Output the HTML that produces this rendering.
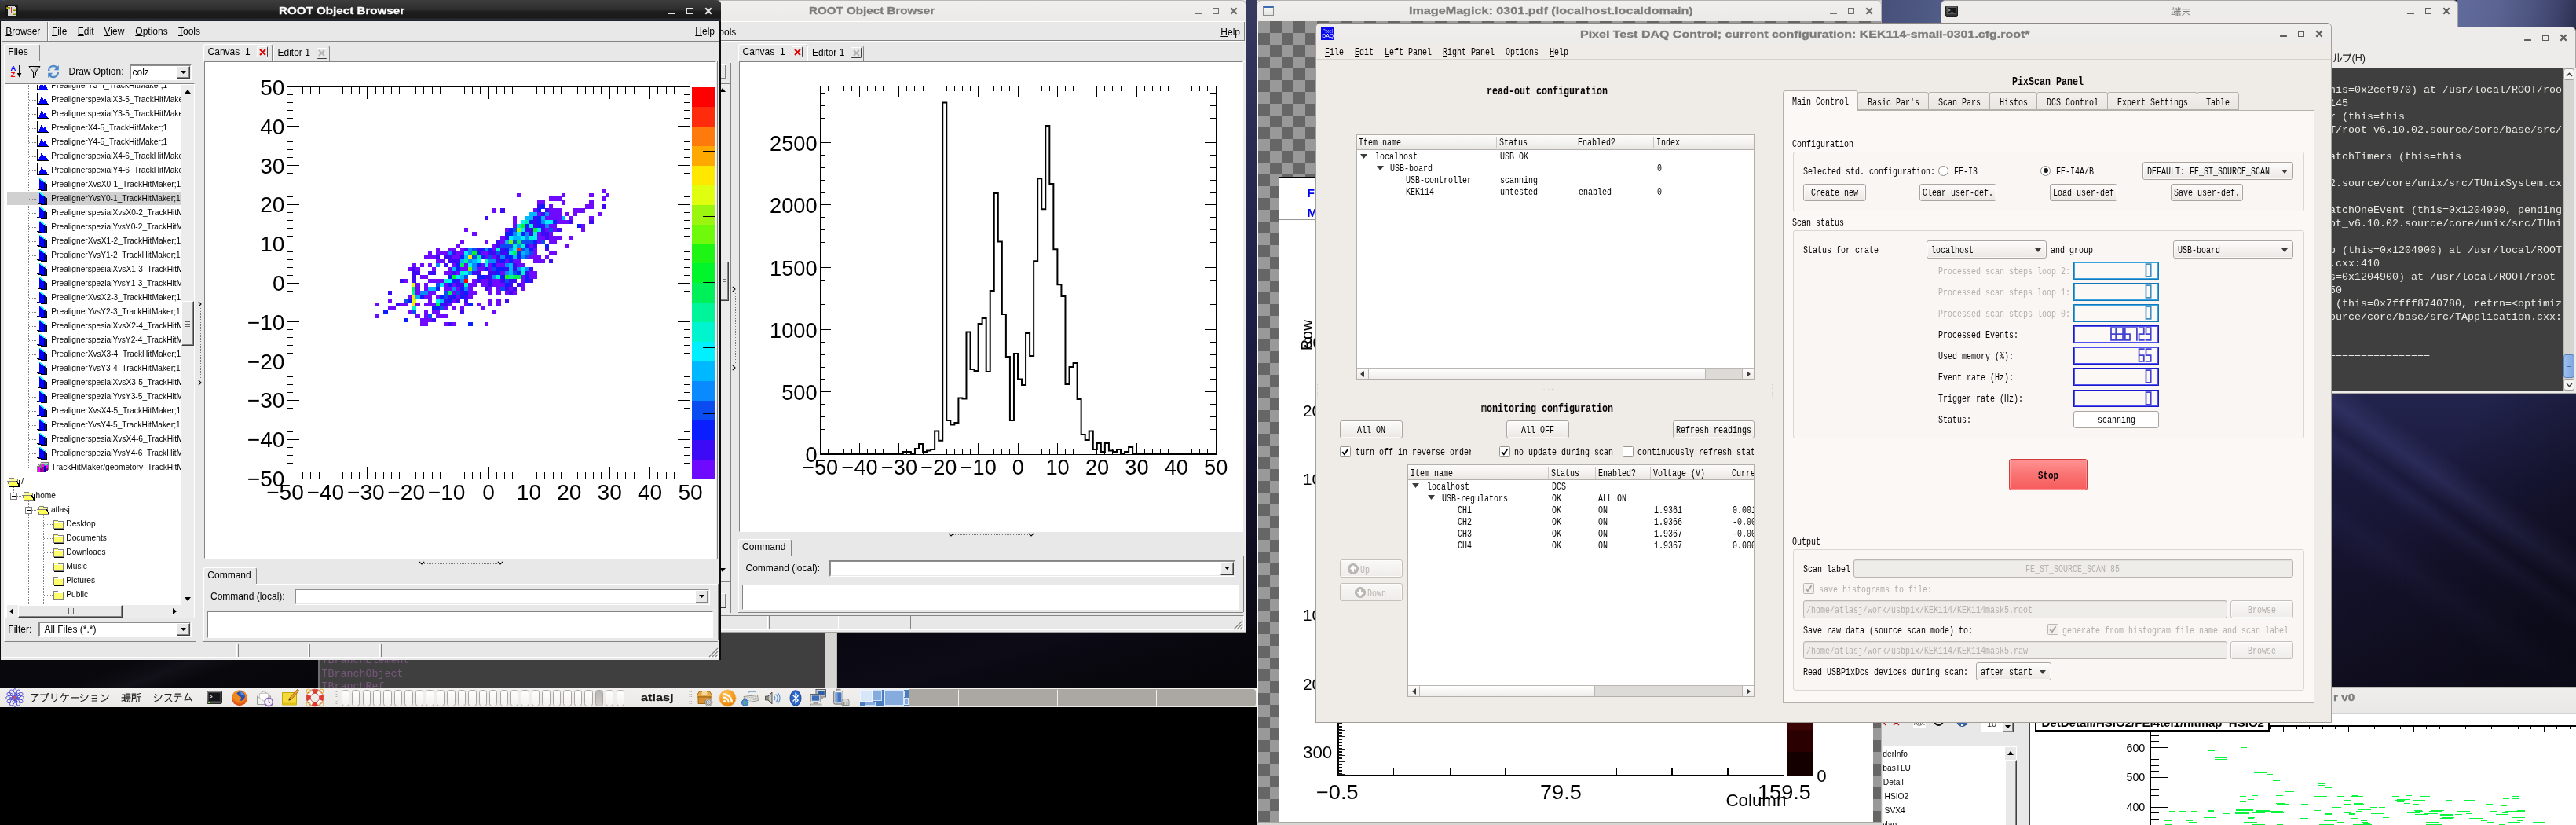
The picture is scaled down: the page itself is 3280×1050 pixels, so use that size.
<!DOCTYPE html>
<html><head><meta charset="utf-8"><title>desktop</title><style>
html,body{margin:0;padding:0;background:#000;}
#root{will-change:transform;position:relative;width:3280px;height:1050px;overflow:hidden;background:#000;font-family:"Liberation Sans",sans-serif;font-size:12px;color:#000;}
#root div,#root span,#root svg{position:absolute;box-sizing:border-box;}
.ts{font-family:"Liberation Sans",sans-serif;white-space:pre;}
.tm{font-family:"Liberation Mono",monospace;white-space:pre;transform-origin:0 0;}
.tr{font-family:"Liberation Serif",serif;white-space:pre;}
.clip{overflow:hidden;}
</style></head><body><div id="root">
<!-- sec_bg -->
<div style="left:0px;top:0px;width:1600px;height:900px;background:linear-gradient(180deg,#383b60 0,#2b2d55 150px,#1d1e46 400px,#13122c 600px,#0a0914 800px,#060509 900px);"></div>
<div style="left:0px;top:838px;width:410px;height:40px;background:linear-gradient(160deg,#09080d 0,#09080d 35%,#121018 50%,#09080c 62%,#07060a 100%);"></div>
<div style="left:1066px;top:800px;width:534px;height:80px;background:linear-gradient(165deg,#0a0912 0,#0c0b16 40%,#08070d 70%,#07060b 100%);"></div>
<div style="left:405px;top:800px;width:645px;height:76px;background:#3f3f3f;border-left:2px solid #6e6e6e;"></div>
<span class="tm" style="left:409.5px;top:834.28px;font-size:13.33px;line-height:13.33px;color:#77567c;">TBranchElement</span>
<span class="tm" style="left:409.5px;top:850.78px;font-size:13.33px;line-height:13.33px;color:#77567c;">TBranchObject</span>
<span class="tm" style="left:409.5px;top:867.28px;font-size:13.33px;line-height:13.33px;color:#77567c;">TBranchRef</span>
<div style="left:1050px;top:800px;width:16px;height:76px;background:#d6d4d1;border-left:1px solid #e8e6e3;border-right:1px solid #bdbbb8;"></div>
<div style="left:0px;top:875px;width:1600px;height:25px;background:linear-gradient(180deg,#f2f0ee 0,#ebe9e6 100%);border-top:1px solid #f8f7f6;"></div>
<div style="left:0px;top:900px;width:1600px;height:150px;background:#000;"></div>
<svg style="left:7px;top:876px;width:24px;height:24px" viewBox="0 0 24 24"><ellipse cx="12" cy="6.2" rx="2.6" ry="5.6" transform="rotate(0 12 12)" fill="none" stroke="#3a3ad6" stroke-width="0.8"/><ellipse cx="12" cy="6.2" rx="2.6" ry="5.6" transform="rotate(30 12 12)" fill="none" stroke="#3a3ad6" stroke-width="0.8"/><ellipse cx="12" cy="6.2" rx="2.6" ry="5.6" transform="rotate(60 12 12)" fill="none" stroke="#3a3ad6" stroke-width="0.8"/><ellipse cx="12" cy="6.2" rx="2.6" ry="5.6" transform="rotate(90 12 12)" fill="none" stroke="#3a3ad6" stroke-width="0.8"/><ellipse cx="12" cy="6.2" rx="2.6" ry="5.6" transform="rotate(120 12 12)" fill="none" stroke="#3a3ad6" stroke-width="0.8"/><ellipse cx="12" cy="6.2" rx="2.6" ry="5.6" transform="rotate(150 12 12)" fill="none" stroke="#3a3ad6" stroke-width="0.8"/><ellipse cx="12" cy="6.2" rx="2.6" ry="5.6" transform="rotate(180 12 12)" fill="none" stroke="#3a3ad6" stroke-width="0.8"/><ellipse cx="12" cy="6.2" rx="2.6" ry="5.6" transform="rotate(210 12 12)" fill="none" stroke="#3a3ad6" stroke-width="0.8"/><ellipse cx="12" cy="6.2" rx="2.6" ry="5.6" transform="rotate(240 12 12)" fill="none" stroke="#3a3ad6" stroke-width="0.8"/><ellipse cx="12" cy="6.2" rx="2.6" ry="5.6" transform="rotate(270 12 12)" fill="none" stroke="#3a3ad6" stroke-width="0.8"/><ellipse cx="12" cy="6.2" rx="2.6" ry="5.6" transform="rotate(300 12 12)" fill="none" stroke="#3a3ad6" stroke-width="0.8"/><ellipse cx="12" cy="6.2" rx="2.6" ry="5.6" transform="rotate(330 12 12)" fill="none" stroke="#3a3ad6" stroke-width="0.8"/><circle cx="12" cy="12" r="2.2" fill="#c05070"/></svg>
<svg style="left:37.5px;top:881px;width:12.6px;height:12.6px" viewBox="0 0 12 12"><path d="M1.5 2.5H10.5L6.5 6 M6 4.5V7.5Q6 10 3 11.5" fill="none" stroke="#222" stroke-width="1.1" stroke-linecap="round" stroke-linejoin="round"/></svg><svg style="left:50.25px;top:881px;width:12.6px;height:12.6px" viewBox="0 0 12 12"><path d="M1.5 3H9.5Q9.5 8 4 11.5 M10.7 1.6a1 1 0 1 0 .01 0" fill="none" stroke="#222" stroke-width="1.1" stroke-linecap="round" stroke-linejoin="round"/></svg><svg style="left:63px;top:881px;width:12.6px;height:12.6px" viewBox="0 0 12 12"><path d="M3 2V7.5 M9 1.5V7Q9 10 5 11.5" fill="none" stroke="#222" stroke-width="1.1" stroke-linecap="round" stroke-linejoin="round"/></svg><svg style="left:75.75px;top:881px;width:12.6px;height:12.6px" viewBox="0 0 12 12"><path d="M4 1.5Q3.5 4 1.5 6 M3.5 4H11 M7.5 4Q7.5 9 4 11.5" fill="none" stroke="#222" stroke-width="1.1" stroke-linecap="round" stroke-linejoin="round"/></svg><svg style="left:88.5px;top:881px;width:12.6px;height:12.6px" viewBox="0 0 12 12"><path d="M1.5 6.5H10.5" fill="none" stroke="#222" stroke-width="1.1" stroke-linecap="round" stroke-linejoin="round"/></svg><svg style="left:101.25px;top:881px;width:12.6px;height:12.6px" viewBox="0 0 12 12"><path d="M2.5 2.5L4.5 3.8 M1.5 5.5L3.5 6.8 M2 11Q8 10 10.5 4" fill="none" stroke="#222" stroke-width="1.1" stroke-linecap="round" stroke-linejoin="round"/></svg><svg style="left:114px;top:881px;width:12.6px;height:12.6px" viewBox="0 0 12 12"><path d="M3 4H9V10.5H3 M3 7.2H9" fill="none" stroke="#222" stroke-width="1.1" stroke-linecap="round" stroke-linejoin="round"/></svg><svg style="left:126.75px;top:881px;width:12.6px;height:12.6px" viewBox="0 0 12 12"><path d="M2 3L4.5 4.8 M2 11Q8 10 10.5 4.5" fill="none" stroke="#222" stroke-width="1.1" stroke-linecap="round" stroke-linejoin="round"/></svg>
<svg style="left:154px;top:881px;width:12.6px;height:12.6px" viewBox="0 0 12 12"><path d="M1.5 3H4.5V10.5 M1 6.5H5 M1 10.5L5 9.5 M6 2H11V5H6Z M6 3.5H11 M5.5 6.5H11.5 M7 6.5Q6.5 9 5.5 11 M7.5 8H11Q11 11 9.5 11.5 M9 8Q8.5 10 7.5 11.5" fill="none" stroke="#222" stroke-width="1.1" stroke-linecap="round" stroke-linejoin="round"/></svg><svg style="left:166.9px;top:881px;width:12.6px;height:12.6px" viewBox="0 0 12 12"><path d="M1 2H5.5 M1.5 4H5V7H1.5V4 M1.5 7Q1.5 10 0.8 11.5 M7 2.5Q9 2.5 11 1.5 M7 2.5V7Q7 10 6 11.5 M7 5.5H11.5 M9.5 5.5V11.5" fill="none" stroke="#222" stroke-width="1.1" stroke-linecap="round" stroke-linejoin="round"/></svg>
<svg style="left:195px;top:881px;width:12.6px;height:12.6px" viewBox="0 0 12 12"><path d="M2.5 2.5L4.5 3.8 M1.5 5.5L3.5 6.8 M2 11Q8 10 10.5 4" fill="none" stroke="#222" stroke-width="1.1" stroke-linecap="round" stroke-linejoin="round"/></svg><svg style="left:207.6px;top:881px;width:12.6px;height:12.6px" viewBox="0 0 12 12"><path d="M2 2.5H9.5Q8 8 2 11.5 M6.5 7.5L10.5 11.5" fill="none" stroke="#222" stroke-width="1.1" stroke-linecap="round" stroke-linejoin="round"/></svg><svg style="left:220.2px;top:881px;width:12.6px;height:12.6px" viewBox="0 0 12 12"><path d="M3 2H9 M1.5 5H10.5 M6 5Q6 9.5 3 11.5" fill="none" stroke="#222" stroke-width="1.1" stroke-linecap="round" stroke-linejoin="round"/></svg><svg style="left:232.8px;top:881px;width:12.6px;height:12.6px" viewBox="0 0 12 12"><path d="M5.5 1.5L2 9.5L10 8.5 M8 6L10.8 11" fill="none" stroke="#222" stroke-width="1.1" stroke-linecap="round" stroke-linejoin="round"/></svg>
<div style="left:263px;top:878.5px;width:20px;height:17px;background:linear-gradient(180deg,#8a8a86,#55554f);border:1px solid #2a2a28;border-radius:2px;"></div>
<div style="left:265px;top:880.5px;width:16px;height:12px;background:#14161a;border:1px solid #3c3c3c;"></div>
<span class="tm" style="left:266.5px;top:883.63px;font-size:7px;line-height:7px;color:#e8e8e8;font-weight:700;">&gt;_</span>
<div style="left:265px;top:893.6px;width:3px;height:1.4px;background:#6ddd3a;"></div>
<svg style="left:294px;top:877px;width:22px;height:22px" viewBox="0 0 22 22"><defs><radialGradient id="ffg" cx="50%" cy="35%" r="65%"><stop offset="0" stop-color="#ffd43a"/><stop offset=".55" stop-color="#f5871c"/><stop offset="1" stop-color="#d8400f"/></radialGradient></defs><circle cx="11" cy="11.3" r="10" fill="url(#ffg)"/><circle cx="12" cy="9" r="6" fill="#2a4fae"/><path d="M3 6 C6 4 9 6 10 9 C13 9 14 12 12 14 C10 16 6 15 5 12 C3 12 2 9 3 6Z" fill="#f08a1c"/><path d="M12 3.5c3 0 5.5 2.5 5.5 5.5-1.5-1.8-3-2-4.5-1.5z" fill="#5b8fe0"/></svg>
<svg style="left:326px;top:877px;width:23px;height:23px" viewBox="0 0 23 23"><path d="M1.5 9L10 2.5L18.5 9V19.5H1.5Z" fill="#f2f2f0" stroke="#9a9a98" stroke-width="1"/><path d="M1.5 9L10 15L18.5 9" fill="none" stroke="#a8a8a6" stroke-width="1"/><path d="M4.5 5.5H15.5V11L10 15L4.5 11Z" fill="#fff" stroke="#b8b8b6" stroke-width=".7"/><circle cx="16.2" cy="16.4" r="5.2" fill="#f4f0fa" stroke="#8a62b4" stroke-width="1.6"/><path d="M16.2 13.2V16.6L18.2 17.6" stroke="#6a4a94" stroke-width="1" fill="none"/></svg>
<svg style="left:358px;top:876px;width:24px;height:24px" viewBox="0 0 24 24"><path d="M1.5 5.5H19.5V21H1.5Z" fill="#f3dc3a" stroke="#c8a500" stroke-width="1"/><path d="M1.5 18.5H19.5V21H1.5Z" fill="#e0bf18"/><path d="M20.8 1.2L22.8 3.2L12.5 14.5L9.8 15.3L10.5 12.6Z" fill="#f0a030" stroke="#8a5a10" stroke-width=".8"/><path d="M9.8 15.3L10.5 12.6L12.5 14.5Z" fill="#3a2a1a"/></svg>
<svg style="left:389px;top:876px;width:24px;height:24px" viewBox="0 0 24 24"><circle cx="12" cy="12" r="8.2" fill="none" stroke="#f6f6f6" stroke-width="4.8"/><circle cx="12" cy="12" r="8.2" fill="none" stroke="#e23b2e" stroke-width="4.8" stroke-dasharray="6.44 6.44" stroke-dashoffset="3.22"/><circle cx="12" cy="12" r="10.9" fill="none" stroke="#b82a20" stroke-width=".7"/><circle cx="12" cy="12" r="5.7" fill="none" stroke="#b82a20" stroke-width=".7"/><g fill="none" stroke="#e0b020" stroke-width="1"><circle cx="3.6" cy="3.6" r="2.6"/><circle cx="20.4" cy="3.6" r="2.6"/><circle cx="3.6" cy="20.4" r="2.6"/><circle cx="20.4" cy="20.4" r="2.6"/></g></svg>
<div style="left:427px;top:879px;width:4px;height:18px;background-image:radial-gradient(circle,#a8a6a2 0.7px,transparent 0.9px);background-size:2.5px 3px;"></div>
<div style="left:877px;top:879px;width:4px;height:18px;background-image:radial-gradient(circle,#a8a6a2 0.7px,transparent 0.9px);background-size:2.5px 3px;"></div>
<div style="left:434.6px;top:877.5px;width:10.4px;height:21px;background:linear-gradient(180deg,#ffffff,#f1f0ee);border:1px solid #a9a6a2;border-radius:3.5px;"></div>
<div style="left:448.06px;top:877.5px;width:10.4px;height:21px;background:linear-gradient(180deg,#ffffff,#f1f0ee);border:1px solid #a9a6a2;border-radius:3.5px;"></div>
<div style="left:461.52px;top:877.5px;width:10.4px;height:21px;background:linear-gradient(180deg,#ffffff,#f1f0ee);border:1px solid #a9a6a2;border-radius:3.5px;"></div>
<div style="left:474.98px;top:877.5px;width:10.4px;height:21px;background:linear-gradient(180deg,#ffffff,#f1f0ee);border:1px solid #a9a6a2;border-radius:3.5px;"></div>
<div style="left:488.44px;top:877.5px;width:10.4px;height:21px;background:linear-gradient(180deg,#ffffff,#f1f0ee);border:1px solid #a9a6a2;border-radius:3.5px;"></div>
<div style="left:501.9px;top:877.5px;width:10.4px;height:21px;background:linear-gradient(180deg,#ffffff,#f1f0ee);border:1px solid #a9a6a2;border-radius:3.5px;"></div>
<div style="left:515.36px;top:877.5px;width:10.4px;height:21px;background:linear-gradient(180deg,#ffffff,#f1f0ee);border:1px solid #a9a6a2;border-radius:3.5px;"></div>
<div style="left:528.82px;top:877.5px;width:10.4px;height:21px;background:linear-gradient(180deg,#ffffff,#f1f0ee);border:1px solid #a9a6a2;border-radius:3.5px;"></div>
<div style="left:542.28px;top:877.5px;width:10.4px;height:21px;background:linear-gradient(180deg,#ffffff,#f1f0ee);border:1px solid #a9a6a2;border-radius:3.5px;"></div>
<div style="left:555.74px;top:877.5px;width:10.4px;height:21px;background:linear-gradient(180deg,#ffffff,#f1f0ee);border:1px solid #a9a6a2;border-radius:3.5px;"></div>
<div style="left:569.2px;top:877.5px;width:10.4px;height:21px;background:linear-gradient(180deg,#ffffff,#f1f0ee);border:1px solid #a9a6a2;border-radius:3.5px;"></div>
<div style="left:582.66px;top:877.5px;width:10.4px;height:21px;background:linear-gradient(180deg,#ffffff,#f1f0ee);border:1px solid #a9a6a2;border-radius:3.5px;"></div>
<div style="left:596.12px;top:877.5px;width:10.4px;height:21px;background:linear-gradient(180deg,#ffffff,#f1f0ee);border:1px solid #a9a6a2;border-radius:3.5px;"></div>
<div style="left:609.58px;top:877.5px;width:10.4px;height:21px;background:linear-gradient(180deg,#ffffff,#f1f0ee);border:1px solid #a9a6a2;border-radius:3.5px;"></div>
<div style="left:623.04px;top:877.5px;width:10.4px;height:21px;background:linear-gradient(180deg,#ffffff,#f1f0ee);border:1px solid #a9a6a2;border-radius:3.5px;"></div>
<div style="left:636.5px;top:877.5px;width:10.4px;height:21px;background:linear-gradient(180deg,#ffffff,#f1f0ee);border:1px solid #a9a6a2;border-radius:3.5px;"></div>
<div style="left:649.96px;top:877.5px;width:10.4px;height:21px;background:linear-gradient(180deg,#ffffff,#f1f0ee);border:1px solid #a9a6a2;border-radius:3.5px;"></div>
<div style="left:663.42px;top:877.5px;width:10.4px;height:21px;background:linear-gradient(180deg,#ffffff,#f1f0ee);border:1px solid #a9a6a2;border-radius:3.5px;"></div>
<div style="left:676.88px;top:877.5px;width:10.4px;height:21px;background:linear-gradient(180deg,#ffffff,#f1f0ee);border:1px solid #a9a6a2;border-radius:3.5px;"></div>
<div style="left:690.34px;top:877.5px;width:10.4px;height:21px;background:linear-gradient(180deg,#ffffff,#f1f0ee);border:1px solid #a9a6a2;border-radius:3.5px;"></div>
<div style="left:703.8px;top:877.5px;width:10.4px;height:21px;background:linear-gradient(180deg,#ffffff,#f1f0ee);border:1px solid #a9a6a2;border-radius:3.5px;"></div>
<div style="left:717.26px;top:877.5px;width:10.4px;height:21px;background:linear-gradient(180deg,#ffffff,#f1f0ee);border:1px solid #a9a6a2;border-radius:3.5px;"></div>
<div style="left:730.72px;top:877.5px;width:10.4px;height:21px;background:linear-gradient(180deg,#ffffff,#f1f0ee);border:1px solid #a9a6a2;border-radius:3.5px;"></div>
<div style="left:744.18px;top:877.5px;width:10.4px;height:21px;background:linear-gradient(180deg,#ffffff,#f1f0ee);border:1px solid #a9a6a2;border-radius:3.5px;"></div>
<div style="left:757.64px;top:877.5px;width:10.4px;height:21px;background:linear-gradient(180deg,#b8b6b3,#cfcdca);border:1px solid #a9a6a2;border-radius:3.5px;"></div>
<div style="left:771.1px;top:877.5px;width:10.4px;height:21px;background:linear-gradient(180deg,#ffffff,#f1f0ee);border:1px solid #a9a6a2;border-radius:3.5px;"></div>
<div style="left:784.56px;top:877.5px;width:10.4px;height:21px;background:linear-gradient(180deg,#ffffff,#f1f0ee);border:1px solid #a9a6a2;border-radius:3.5px;"></div>
<span class="ts" style="left:816px;top:881.04px;font-size:13.3px;line-height:13.3px;color:#1a1a1a;font-weight:700;transform-origin:0 0;transform:scaleX(1.22);-webkit-text-stroke:.25px #1a1a1a;">atlasj</span>
<svg style="left:886px;top:877px;width:23px;height:23px" viewBox="0 0 23 23"><path d="M1.5 7.5L4.5 3H17.5L20.5 7.5V10H1.5Z" fill="#e9a94a" stroke="#9a6212" stroke-width=".9"/><path d="M3 10H19V18.5H3Z" fill="#d89030" stroke="#9a6212" stroke-width=".9"/><path d="M8 3L7.3 7.5H14.7L14 3" fill="#f4d9a0"/><circle cx="16.3" cy="16.8" r="4.6" fill="#c9c9c6" stroke="#6e6e6a" stroke-width="1" stroke-dasharray="1.9 1.2"/><circle cx="16.3" cy="16.8" r="3.2" fill="#dedddb" stroke="#77777a" stroke-width=".8"/><circle cx="16.3" cy="16.8" r="1.2" fill="#f2f2f0" stroke="#666" stroke-width=".6"/></svg>
<svg style="left:914.5px;top:876.5px;width:23px;height:23px" viewBox="0 0 23 23"><defs><radialGradient id="rsg" cx="40%" cy="30%" r="75%"><stop offset="0" stop-color="#ffc765"/><stop offset=".6" stop-color="#f59a1c"/><stop offset="1" stop-color="#e07a08"/></radialGradient></defs><circle cx="11.5" cy="11.5" r="10.6" fill="url(#rsg)" stroke="#f3c27c" stroke-width=".8"/><circle cx="7.6" cy="15.6" r="1.7" fill="#fff"/><path d="M6 10.4a6.8 6.8 0 0 1 6.8 6.8" fill="none" stroke="#fff" stroke-width="2"/><path d="M6 6.2a11 11 0 0 1 11 11" fill="none" stroke="#fff" stroke-width="2"/></svg>
<svg style="left:943px;top:877px;width:24px;height:23px" viewBox="0 0 24 23"><path d="M10 4.5C12 1 17 5 20 2.5" fill="none" stroke="#7aa0d0" stroke-width="1.2"/><path d="M4 9.5L21.5 7.5L22.5 14.5L5.5 17.5Z" fill="#e8e8e4" stroke="#8a8a86" stroke-width=".9"/><path d="M6 11.2L20.5 9.4M6.4 13L21 11.2M7 14.9L21.4 13" stroke="#a5a5a0" stroke-width=".9" stroke-dasharray="1.5 .8"/><circle cx="5.6" cy="17.2" r="4.2" fill="#4a8fd8" stroke="#2a5a9a" stroke-width=".8"/><path d="M3.5 15.5Q5.5 14.5 6.5 16.5T5 20" fill="#5db84a" stroke="none"/></svg>
<svg style="left:973px;top:877px;width:22px;height:23px" viewBox="0 0 22 23"><path d="M1.5 9H5L10 4V19L5 14H1.5Z" fill="#8e8e8a" stroke="#4a4a48" stroke-width=".9"/><path d="M6 9.2L9.3 5.8V17.2L6 13.8Z" fill="#c9c9c6"/><path d="M12.5 8.5a4 4 0 0 1 0 6M14.8 6.3a7 7 0 0 1 0 10.4M17 4.4a10 10 0 0 1 0 14.2" fill="none" stroke="#5f8fcf" stroke-width="1.1"/></svg>
<svg style="left:1004px;top:876.5px;width:18px;height:23px" viewBox="0 0 18 23"><ellipse cx="9" cy="11.5" rx="7" ry="9.8" fill="#2a66c8" stroke="#163c86" stroke-width=".9"/><path d="M5.5 7.5L12.2 14.2L9 17.2V5.8L12.2 8.8L5.5 15.5" fill="none" stroke="#fff" stroke-width="1.3"/></svg>
<svg style="left:1030px;top:876px;width:24px;height:24px" viewBox="0 0 24 24"><rect x="9" y="1.5" width="12.5" height="9.5" fill="#d9d9d6" stroke="#55555a" stroke-width=".9"/><rect x="10.8" y="3.2" width="9" height="6" fill="#2c5fa8"/><rect x="13" y="11.5" width="5" height="1.6" fill="#9a9a98"/><rect x="2" y="7.5" width="13" height="10" fill="#e1e1de" stroke="#55555a" stroke-width=".9"/><rect x="3.8" y="9.3" width="9.4" height="6.4" fill="#3a6db8"/><rect x="5.5" y="18" width="6.5" height="1.6" fill="#9a9a98"/><rect x="2" y="20" width="14" height="2.2" fill="#d0d0cc" stroke="#77777a" stroke-width=".6"/></svg>
<svg style="left:1060px;top:876px;width:24px;height:24px" viewBox="0 0 24 24"><rect x="5" y="1.2" width="5" height="2.5" fill="#bdbdb9" stroke="#66666a" stroke-width=".7"/><rect x="1.8" y="3.5" width="11.4" height="16.5" rx="1.3" fill="#f1f1ef" stroke="#5a5a5e" stroke-width="1"/><rect x="3.5" y="5.3" width="8" height="13" fill="#4a78c0"/><rect x="3.5" y="5.3" width="3" height="13" fill="#7ea4dc"/><path d="M12 21.5V16.5Q12 13.5 15 13.5H18Q21 13.5 21 16.5V21.5Z" fill="#d6d6d2" stroke="#77777a" stroke-width=".8"/><rect x="13.8" y="17.8" width="1.6" height="3.6" fill="#8a8a88"/><rect x="17.6" y="17.8" width="1.6" height="3.6" fill="#8a8a88"/></svg>
<div style="left:1094px;top:877px;width:505px;height:22px;background:#aba7a3;border-radius:0 4px 4px 0;"></div>
<div style="left:1156.5px;top:877.5px;width:1.2px;height:21px;background:#f1efed;"></div>
<div style="left:1219.6px;top:877.5px;width:1.2px;height:21px;background:#f1efed;"></div>
<div style="left:1282.7px;top:877.5px;width:1.2px;height:21px;background:#f1efed;"></div>
<div style="left:1345.8px;top:877.5px;width:1.2px;height:21px;background:#f1efed;"></div>
<div style="left:1408.9px;top:877.5px;width:1.2px;height:21px;background:#f1efed;"></div>
<div style="left:1472px;top:877.5px;width:1.2px;height:21px;background:#f1efed;"></div>
<div style="left:1535.1px;top:877.5px;width:1.2px;height:21px;background:#f1efed;"></div>
<div style="left:1094px;top:877px;width:63.6px;height:22px;background:#4a7cc0;border:1px solid #e8eef8;"></div>
<div style="left:1095px;top:878px;width:15.5px;height:14.5px;background:#d7e6f8;border:1px solid #eef4fc;"></div>
<div style="left:1110.5px;top:878px;width:12px;height:14px;background:#86abdf;border:1px solid #cfe0f4;"></div>
<div style="left:1101px;top:892.5px;width:14px;height:5.5px;background:#86abdf;border:1px solid #cfe0f4;"></div>
<div style="left:1125.5px;top:878px;width:25px;height:20px;background:#86abdf;border:1px solid #dbe8f7;"></div>
<div style="left:1150.5px;top:879px;width:6px;height:8px;background:#4a7cc0;border-left:1px solid #dbe8f7;"></div>
<div style="left:1150.5px;top:888px;width:6px;height:9px;background:#86abdf;border:1px solid #dbe8f7;"></div>
<!-- sec_mid -->
<div style="left:700px;top:0px;width:886.7px;height:804.7px;background:#edeceb;border-right:1px solid #a5a3a0;border-bottom:1px solid #a5a3a0;"></div>
<div style="left:700px;top:0px;width:884.5px;height:802.5px;background:#e8e8e8;"></div>
<div style="left:700px;top:0px;width:886.7px;height:27px;background:linear-gradient(180deg,#f0efed,#ebeae8);border-top:1px solid #bab8b5;border-right:1px solid #a5a3a0;border-radius:0 6px 0 0;"></div>
<span class="ts" style="left:1030px;top:7.43px;font-size:13.2px;line-height:13.2px;color:#7b7b7b;font-weight:700;transform-origin:0 0;transform:scaleX(1.15);-webkit-text-stroke:.3px #7b7b7b;">ROOT Object Browser</span>
<div style="left:1521px;top:16px;width:9px;height:2.4px;background:#6f6f6f;border-radius:.5px;"></div><div style="left:1543.8px;top:9.8px;width:8.4px;height:8.4px;border:1.4px solid #6f6f6f;border-top-width:2.4px;"></div><svg style="left:1565.7px;top:9px;width:10px;height:10px" viewBox="0 0 10 10"><path d="M1.3 1.3L8.7 8.7M8.7 1.3L1.3 8.7" stroke="#6f6f6f" stroke-width="2.2" fill="none"/></svg>
<span class="ts" style="left:915.3px;top:34.64px;font-size:12px;line-height:12px;">ools</span>
<span class="ts" style="left:1554.3px;top:34.64px;font-size:12px;line-height:12px;"><u>H</u>elp</span>
<div style="left:700px;top:51px;width:883.5px;height:2px;border-top:1px solid #848484;border-bottom:1px solid #ffffff;"></div>
<div style="left:700px;top:27.3px;width:884.5px;height:1px;background:#ffffff;"></div>
<div style="left:1583.5px;top:28px;width:1px;height:24px;background:#848484;"></div>
<div style="left:917px;top:80px;width:14px;height:700px;border-right:1px solid #848484;"></div>
<div style="left:905px;top:82px;width:19.5px;height:19px;background:#e8e8e8;border-top:1px solid #ffffff;border-left:1px solid #ffffff;border-bottom:1px solid #404040;border-right:1px solid #404040;"><div style="left:0px;top:0px;width:17.5px;height:17px;border-bottom:1px solid #848484;border-right:1px solid #848484;"></div></div>
<div style="left:917px;top:105.5px;width:12px;height:2px;border-top:1px solid #848484;border-bottom:1px solid #404040;"></div>
<div style="left:917px;top:107px;width:12px;height:675px;background:#ececec;"></div>
<svg style="left:915.5px;top:112px;width:8px;height:5px" viewBox="0 0 8 5"><path d="M0 5H8L4.0 0Z" fill="#000"/></svg>
<div style="left:915px;top:332.5px;width:13px;height:50px;background:#e8e8e8;border-top:1px solid #ffffff;border-left:1px solid #ffffff;border-bottom:1px solid #404040;border-right:1px solid #404040;"><div style="left:0px;top:0px;width:11px;height:48px;border-bottom:1px solid #848484;border-right:1px solid #848484;"></div></div>
<div style="left:920px;top:355px;width:5px;height:1px;background:#777;"></div><div style="left:920px;top:358px;width:5px;height:1px;background:#777;"></div><div style="left:920px;top:361px;width:5px;height:1px;background:#777;"></div>
<svg style="left:915.5px;top:723px;width:8px;height:5px" viewBox="0 0 8 5"><path d="M0 0H8L4.0 5Z" fill="#000"/></svg>
<div style="left:905px;top:754.5px;width:19.5px;height:19.5px;background:#e8e8e8;border-top:1px solid #ffffff;border-left:1px solid #ffffff;border-bottom:1px solid #404040;border-right:1px solid #404040;"><div style="left:0px;top:0px;width:17.5px;height:17.5px;border-bottom:1px solid #848484;border-right:1px solid #848484;"></div></div>
<div style="left:917px;top:739.5px;width:13px;height:1px;background:#848484;"></div>
<svg style="left:932px;top:364.3px;width:5px;height:8px" viewBox="0 0 5 8"><path d="M.8 .8L4 4L.8 7.2" stroke="#000" stroke-width="1.1" fill="none"/></svg>
<svg style="left:932px;top:463.8px;width:5px;height:8px" viewBox="0 0 5 8"><path d="M.8 .8L4 4L.8 7.2" stroke="#000" stroke-width="1.1" fill="none"/></svg>
<div style="left:935.5px;top:373px;width:1px;height:90px;background-image:linear-gradient(180deg,#777 1px,transparent 1px);background-size:1px 2px;"></div>
<div style="left:939.5px;top:55.5px;width:88px;height:23px;background:#e8e8e8;border-top:1px solid #ffffff;border-left:1px solid #ffffff;border-right:1px solid #848484;border-radius:3px 3px 0 0;"></div><span class="ts" style="left:945.6px;top:59.84px;font-size:12px;line-height:12px;">Canvas_1</span>
<div style="left:1008px;top:59.3px;width:14px;height:14px;background:#e8e8e8;border-top:1px solid #ffffff;border-left:1px solid #ffffff;border-bottom:1px solid #404040;border-right:1px solid #404040;border-radius:2px;"></div><svg style="left:1010.5px;top:61.8px;width:9px;height:9px" viewBox="0 0 9 9"><path d="M1 1L8 8M8 1L1 8" stroke="#e00000" stroke-width="2" fill="none"/></svg>
<div style="left:1028px;top:57.5px;width:72px;height:21px;background:#e8e8e8;border-top:1px solid #ffffff;border-left:1px solid #ffffff;border-right:1px solid #848484;border-radius:3px 3px 0 0;"></div><span class="ts" style="left:1034px;top:61.34px;font-size:12px;line-height:12px;">Editor 1</span>
<div style="left:1083px;top:60.3px;width:14px;height:14px;background:#e8e8e8;border-top:1px solid #ffffff;border-left:1px solid #ffffff;border-bottom:1px solid #404040;border-right:1px solid #404040;border-radius:2px;"></div><svg style="left:1085.5px;top:62.8px;width:9px;height:9px" viewBox="0 0 9 9"><path d="M1 1L8 8M8 1L1 8" stroke="#b4b4b4" stroke-width="2" fill="none"/></svg>
<div style="left:1027.5px;top:77.5px;width:557px;height:1px;background:#ffffff;"></div>
<div style="left:941px;top:78px;width:642px;height:599px;background:#fff;border-top:1px solid #848484;border-left:1px solid #848484;border-bottom:1px solid #ffffff;border-right:1px solid #ffffff;"></div>
<svg style="left:1042.2px;top:106.5px;width:508px;height:473px" viewBox="-2 -2 508 473" shape-rendering="crispEdges"><rect x="0" y="0" width="504" height="469" fill="none" stroke="#000" stroke-width="1"/><path d="M0 469v-14M0 0v14M10.08 469v-7M10.08 0v7M20.16 469v-7M20.16 0v7M30.24 469v-7M30.24 0v7M40.32 469v-7M40.32 0v7M50.4 469v-14M50.4 0v14M60.48 469v-7M60.48 0v7M70.56 469v-7M70.56 0v7M80.64 469v-7M80.64 0v7M90.72 469v-7M90.72 0v7M100.8 469v-14M100.8 0v14M110.88 469v-7M110.88 0v7M120.96 469v-7M120.96 0v7M131.04 469v-7M131.04 0v7M141.12 469v-7M141.12 0v7M151.2 469v-14M151.2 0v14M161.28 469v-7M161.28 0v7M171.36 469v-7M171.36 0v7M181.44 469v-7M181.44 0v7M191.52 469v-7M191.52 0v7M201.6 469v-14M201.6 0v14M211.68 469v-7M211.68 0v7M221.76 469v-7M221.76 0v7M231.84 469v-7M231.84 0v7M241.92 469v-7M241.92 0v7M252 469v-14M252 0v14M262.08 469v-7M262.08 0v7M272.16 469v-7M272.16 0v7M282.24 469v-7M282.24 0v7M292.32 469v-7M292.32 0v7M302.4 469v-14M302.4 0v14M312.48 469v-7M312.48 0v7M322.56 469v-7M322.56 0v7M332.64 469v-7M332.64 0v7M342.72 469v-7M342.72 0v7M352.8 469v-14M352.8 0v14M362.88 469v-7M362.88 0v7M372.96 469v-7M372.96 0v7M383.04 469v-7M383.04 0v7M393.12 469v-7M393.12 0v7M403.2 469v-14M403.2 0v14M413.28 469v-7M413.28 0v7M423.36 469v-7M423.36 0v7M433.44 469v-7M433.44 0v7M443.52 469v-7M443.52 0v7M453.6 469v-14M453.6 0v14M463.68 469v-7M463.68 0v7M473.76 469v-7M473.76 0v7M483.84 469v-7M483.84 0v7M493.92 469v-7M493.92 0v7M504 469v-14M504 0v14M0 469h14M504 469h-14M0 389.74h14M504 389.74h-14M0 310.48h14M504 310.48h-14M0 231.22h14M504 231.22h-14M0 151.96h14M504 151.96h-14M0 72.7h14M504 72.7h-14M0 453.15h7M504 453.15h-7M0 437.3h7M504 437.3h-7M0 421.44h7M504 421.44h-7M0 405.59h7M504 405.59h-7M0 373.89h7M504 373.89h-7M0 358.04h7M504 358.04h-7M0 342.18h7M504 342.18h-7M0 326.33h7M504 326.33h-7M0 294.63h7M504 294.63h-7M0 278.78h7M504 278.78h-7M0 262.92h7M504 262.92h-7M0 247.07h7M504 247.07h-7M0 215.37h7M504 215.37h-7M0 199.52h7M504 199.52h-7M0 183.66h7M504 183.66h-7M0 167.81h7M504 167.81h-7M0 136.11h7M504 136.11h-7M0 120.26h7M504 120.26h-7M0 104.4h7M504 104.4h-7M0 88.55h7M504 88.55h-7M0 56.85h7M504 56.85h-7M0 41h7M504 41h-7M0 25.14h7M504 25.14h-7M0 9.29h7M504 9.29h-7" stroke="#000" stroke-width="1" fill="none"/></svg>
<span class="ts" style="left:1040.6px;top:565.38px;font-size:27.2px;line-height:27.2px;transform:translateX(-100%);">0</span>
<span class="ts" style="left:1040.6px;top:486.12px;font-size:27.2px;line-height:27.2px;transform:translateX(-100%);">500</span>
<span class="ts" style="left:1040.6px;top:406.86px;font-size:27.2px;line-height:27.2px;transform:translateX(-100%);">1000</span>
<span class="ts" style="left:1040.6px;top:327.6px;font-size:27.2px;line-height:27.2px;transform:translateX(-100%);">1500</span>
<span class="ts" style="left:1040.6px;top:248.34px;font-size:27.2px;line-height:27.2px;transform:translateX(-100%);">2000</span>
<span class="ts" style="left:1040.6px;top:169.08px;font-size:27.2px;line-height:27.2px;transform:translateX(-100%);">2500</span>
<span class="ts" style="left:1044.2px;top:581.18px;font-size:27.2px;line-height:27.2px;transform:translateX(-50%);">−50</span>
<span class="ts" style="left:1094.6px;top:581.18px;font-size:27.2px;line-height:27.2px;transform:translateX(-50%);">−40</span>
<span class="ts" style="left:1145px;top:581.18px;font-size:27.2px;line-height:27.2px;transform:translateX(-50%);">−30</span>
<span class="ts" style="left:1195.4px;top:581.18px;font-size:27.2px;line-height:27.2px;transform:translateX(-50%);">−20</span>
<span class="ts" style="left:1245.8px;top:581.18px;font-size:27.2px;line-height:27.2px;transform:translateX(-50%);">−10</span>
<span class="ts" style="left:1296.2px;top:581.18px;font-size:27.2px;line-height:27.2px;transform:translateX(-50%);">0</span>
<span class="ts" style="left:1346.6px;top:581.18px;font-size:27.2px;line-height:27.2px;transform:translateX(-50%);">10</span>
<span class="ts" style="left:1397px;top:581.18px;font-size:27.2px;line-height:27.2px;transform:translateX(-50%);">20</span>
<span class="ts" style="left:1447.4px;top:581.18px;font-size:27.2px;line-height:27.2px;transform:translateX(-50%);">30</span>
<span class="ts" style="left:1497.8px;top:581.18px;font-size:27.2px;line-height:27.2px;transform:translateX(-50%);">40</span>
<span class="ts" style="left:1548.2px;top:581.18px;font-size:27.2px;line-height:27.2px;transform:translateX(-50%);">50</span>
<svg style="left:1044.2px;top:108.5px;width:504px;height:471px" viewBox="0 -469 504 471"><path d="M0 0V0H5.04V0H10.08V0H15.12V0H20.16V0H25.2V0H30.24V0H35.28V0H40.32V0H45.36V0H50.4V0H55.44V0H60.48V0H65.52V0H70.56V0H75.6V0H80.64V0H85.68V0H90.72V0H95.76V0H100.8V0H105.84V-3H110.88V-3H115.92V0H120.96V-7H126V-13H131.04V-3H136.08V-4.5H141.12V-6H146.16V-29.4H151.2V-17.3H156.24V-447.5H161.28V-43H166.32V-37.6H171.36V-40H176.4V-71.5H181.44V-70.5H186.48V-155.5H191.52V-108H196.56V-106H201.6V-166H206.64V-173H211.68V-105H216.72V-208H221.76V-332H226.8V-270.5H231.84V-178H236.88V-124H241.92V-43H246.96V-128H252V-95.5H257.04V-88H262.08V-154H267.12V-125H272.16V-245.7H277.2V-350.8H282.24V-311.7H287.28V-418H292.32V-344H297.36V-260.8H302.4V-215.8H307.44V-201H312.48V-89H317.52V-111H322.56V-116H327.6V-70H332.64V-25H337.68V-18H342.72V-29.4H347.76V-6H352.8V-14H357.84V-3H362.88V-14H367.92V-4.5H372.96V-3H378V-6H383.04V0H388.08V-3H393.12V-9H398.16V0H403.2V0H408.24V0H413.28V0H418.32V0H423.36V0H428.4V0H433.44V0H438.48V0H443.52V0H448.56V0H453.6V0H458.64V0H463.68V0H468.72V0H473.76V0H478.8V0H483.84V0H488.88V0H493.92V0H498.96V0H504V0" fill="none" stroke="#000" stroke-width="2" stroke-linejoin="miter"/></svg>
<div style="left:1214px;top:680px;width:97px;height:1px;background-image:linear-gradient(90deg,#777 1px,transparent 1px);background-size:2px 1px;"></div>
<svg style="left:1207px;top:677.5px;width:8px;height:5px" viewBox="0 0 8 5"><path d="M.8 .8L4 4L7.2 .8" stroke="#000" stroke-width="1.1" fill="none"/></svg>
<svg style="left:1308.5px;top:677.5px;width:8px;height:5px" viewBox="0 0 8 5"><path d="M.8 .8L4 4L7.2 .8" stroke="#000" stroke-width="1.1" fill="none"/></svg>
<div style="left:940px;top:686px;width:67.5px;height:21px;background:#e8e8e8;border-top:1px solid #ffffff;border-left:1px solid #ffffff;border-right:1px solid #848484;border-radius:3px 3px 0 0;"></div><span class="ts" style="left:945px;top:690.34px;font-size:12px;line-height:12px;">Command</span>
<div style="left:1007px;top:706.5px;width:577px;height:1px;background:#ffffff;"></div>
<div style="left:940px;top:706.5px;width:1px;height:72px;background:#ffffff;"></div>
<div style="left:1582.5px;top:707px;width:1px;height:72px;background:#848484;"></div>
<span class="ts" style="left:949.5px;top:716.84px;font-size:12px;line-height:12px;">Command (local):</span>
<div style="left:1055.5px;top:713px;width:517px;height:20.5px;background:#fff;border-top:1px solid #848484;border-left:1px solid #848484;border-bottom:1px solid #ffffff;border-right:1px solid #ffffff;"><div style="left:0px;top:0px;width:515px;height:18.5px;border-top:1px solid #8e8e8e;border-left:1px solid #8e8e8e;border-bottom:1px solid #e8e8e8;border-right:1px solid #e8e8e8;"></div></div><div style="left:1553.5px;top:715px;width:17px;height:16.5px;background:#e8e8e8;border-top:1px solid #ffffff;border-left:1px solid #ffffff;border-bottom:1px solid #404040;border-right:1px solid #404040;"><div style="left:0px;top:0px;width:15px;height:14.5px;border-bottom:1px solid #848484;border-right:1px solid #848484;"></div></div><svg style="left:1558.5px;top:721.25px;width:7px;height:4px" viewBox="0 0 7 4"><path d="M0 0H7L3.5 4Z" fill="#000"/></svg>
<div style="left:944.5px;top:743.5px;width:633px;height:32px;background:#fff;border-top:1px solid #848484;border-left:1px solid #848484;border-bottom:1px solid #ffffff;border-right:1px solid #ffffff;"></div>
<div style="left:940px;top:778.5px;width:643px;height:1px;background:#848484;"></div>
<div style="left:700px;top:782.5px;width:883.5px;height:19px;border-top:1px solid #848484;border-left:1px solid #848484;border-bottom:1px solid #ffffff;border-right:1px solid #ffffff;"></div>
<div style="left:976.5px;top:783.5px;width:3px;height:17px;border-left:1px solid #ffffff;border-right:1px solid #848484;"></div>
<div style="left:1066.5px;top:783.5px;width:3px;height:17px;border-left:1px solid #ffffff;border-right:1px solid #848484;"></div>
<div style="left:1156.5px;top:783.5px;width:3px;height:17px;border-left:1px solid #ffffff;border-right:1px solid #848484;"></div>
<svg style="left:1570px;top:789px;width:13px;height:13px" viewBox="0 0 13 13"><path d="M12 1L1 12M12 5L5 12M12 9L9 12" stroke="#848484" stroke-width="1.2"/><path d="M13 2L2 13M13 6L6 13M13 10L10 13" stroke="#fff" stroke-width="1"/></svg>
<!-- sec_left -->
<div style="left:0px;top:0px;width:918px;height:839.6px;background:#e8e8e8;border-right:2px solid #0c0c0c;border-left:1.3px solid #0c0c0c;border-radius:6px 6px 0 0;"></div>
<div style="left:0px;top:0px;width:918px;height:27px;background:linear-gradient(180deg,#3d3d3d 0,#2e2e2e 45%,#1d1d1d 55%,#1a1a1a 85%,#2a3442 93%,#1a1d24 100%);border-radius:6px 6px 0 0;"></div>
<span class="ts" style="left:355px;top:7.43px;font-size:13.2px;line-height:13.2px;color:#ffffff;font-weight:700;transform-origin:0 0;transform:scaleX(1.15);-webkit-text-stroke:.3px #fff;">ROOT Object Browser</span>
<div style="left:851.2px;top:16px;width:9px;height:2.4px;background:#e6e6e6;border-radius:.5px;"></div><div style="left:874.4px;top:9.8px;width:8.4px;height:8.4px;border:1.4px solid #e6e6e6;border-top-width:2.4px;"></div><svg style="left:897.2px;top:9px;width:10px;height:10px" viewBox="0 0 10 10"><path d="M1.3 1.3L8.7 8.7M8.7 1.3L1.3 8.7" stroke="#e6e6e6" stroke-width="2.2" fill="none"/></svg>
<svg style="left:7px;top:6px;width:16px;height:16px" viewBox="0 0 16 16" shape-rendering="crispEdges"><rect x="0" y="0" width="16" height="16" fill="#151515"/><path d="M3 2H11L13 4V15H3Z" fill="#d8d8d8"/><path d="M7.5 3V11" stroke="#e03030" stroke-width="1"/><rect x="1" y="3" width="5" height="3" fill="#8a8a10"/><rect x="9" y="5" width="5" height="3" fill="#8a8a10"/><rect x="9" y="10" width="5" height="3" fill="#8a8a10"/><rect x="2" y="3.7" width="3" height="1.4" fill="#c4c420"/><rect x="10" y="5.7" width="3" height="1.4" fill="#c4c420"/><rect x="10" y="10.7" width="3" height="1.4" fill="#c4c420"/></svg>
<span class="ts" style="left:7.3px;top:34.14px;font-size:12px;line-height:12px;"><u>B</u>rowser</span>
<div style="left:59.5px;top:28px;width:2px;height:24px;border-left:1px solid #848484;border-right:1px solid #ffffff;"></div>
<span class="ts" style="left:66px;top:34.14px;font-size:12px;line-height:12px;"><u>F</u>ile</span>
<span class="ts" style="left:98.8px;top:34.14px;font-size:12px;line-height:12px;"><u>E</u>dit</span>
<span class="ts" style="left:132.5px;top:34.14px;font-size:12px;line-height:12px;"><u>V</u>iew</span>
<span class="ts" style="left:172.3px;top:34.14px;font-size:12px;line-height:12px;"><u>O</u>ptions</span>
<span class="ts" style="left:227px;top:34.14px;font-size:12px;line-height:12px;"><u>T</u>ools</span>
<span class="ts" style="left:885.3px;top:34.14px;font-size:12px;line-height:12px;"><u>H</u>elp</span>
<div style="left:2px;top:52px;width:914px;height:2px;border-top:1px solid #848484;border-bottom:1px solid #ffffff;"></div>
<div style="left:4.5px;top:56px;width:46.5px;height:21px;background:#e8e8e8;border-top:1px solid #ffffff;border-left:1px solid #ffffff;border-right:1px solid #848484;border-radius:3px 3px 0 0;"></div>
<span class="ts" style="left:10.3px;top:59.84px;font-size:12px;line-height:12px;">Files</span>
<div style="left:4.5px;top:76.5px;width:245px;height:740px;border-left:1px solid #ffffff;border-right:1px solid #848484;border-bottom:1px solid #848484;"></div>
<div style="left:51px;top:76.5px;width:198px;height:1px;background:#ffffff;"></div>
<span class="ts" style="left:13.4px;top:81.96px;font-size:9.5px;line-height:9.5px;color:#0000ff;font-weight:700;">A</span>
<span class="ts" style="left:13.6px;top:89.96px;font-size:9.5px;line-height:9.5px;color:#ff0000;font-weight:700;">Z</span>
<svg style="left:21px;top:83px;width:8px;height:16px" viewBox="0 0 8 16"><path d="M3.6 0V11" stroke="#000" stroke-width="1"/><path d="M.8 10H6.4L3.6 15.5Z" fill="#000"/></svg>
<svg style="left:36px;top:83px;width:16px;height:17px" viewBox="0 0 16 17"><defs><linearGradient id="fng" x1="0" x2="1"><stop offset="0" stop-color="#fff"/><stop offset="1" stop-color="#9a9a9a"/></linearGradient></defs><path d="M1 1.5H15L9.5 8.5V13L6.5 16V8.5Z" fill="url(#fng)" stroke="#000" stroke-width="1"/></svg>
<svg style="left:60px;top:82px;width:16px;height:18px" viewBox="0 0 16 18"><g fill="none" stroke="#4a86c8" stroke-width="2.6"><path d="M2.3 8A5.8 5.8 0 0 1 12.5 4.2"/><path d="M13.7 10A5.8 5.8 0 0 1 3.5 13.8"/></g><path d="M14.8 1V7.2H8.8Z" fill="#4a86c8"/><path d="M1.2 17V10.8H7.2Z" fill="#4a86c8"/><g fill="none" stroke="#c8dcf2" stroke-width=".8"><path d="M3 7.5A5 5 0 0 1 11.5 4.6"/><path d="M13 10.5A5 5 0 0 1 4.5 13.4"/></g></svg>
<span class="ts" style="left:87.5px;top:85.44px;font-size:12px;line-height:12px;">Draw Option:</span>
<div style="left:164.5px;top:82px;width:79px;height:19.5px;background:#fff;border-top:1px solid #848484;border-left:1px solid #848484;border-bottom:1px solid #ffffff;border-right:1px solid #ffffff;"><div style="left:0px;top:0px;width:77px;height:17.5px;border-top:1px solid #8e8e8e;border-left:1px solid #8e8e8e;border-bottom:1px solid #e8e8e8;border-right:1px solid #e8e8e8;"></div></div><div style="left:224.5px;top:84px;width:17px;height:15.5px;background:#e8e8e8;border-top:1px solid #ffffff;border-left:1px solid #ffffff;border-bottom:1px solid #404040;border-right:1px solid #404040;"><div style="left:0px;top:0px;width:15px;height:13.5px;border-bottom:1px solid #848484;border-right:1px solid #848484;"></div></div><svg style="left:229.5px;top:89.75px;width:7px;height:4px" viewBox="0 0 7 4"><path d="M0 0H7L3.5 4Z" fill="#000"/></svg><span class="ts" style="left:168.5px;top:85.89px;font-size:12px;line-height:12px;">colz</span>
<div style="left:6.3px;top:106px;width:242.2px;height:681px;background:#fff;border-top:1px solid #848484;border-left:1px solid #848484;border-bottom:1px solid #ffffff;border-right:1px solid #ffffff;"></div>
<div style="left:8.5px;top:108px;width:222.5px;height:662px;overflow:hidden;"><div style="left:27.5px;top:0px;width:1px;height:487px;background-image:linear-gradient(180deg,#808080 1px,transparent 1px);background-size:1px 2px;"></div><div style="left:28.5px;top:1.4px;width:10px;height:1px;background-image:linear-gradient(90deg,#808080 1px,transparent 1px);background-size:2px 1px;"></div><svg style="left:38.5px;top:-8.3px;width:16px;height:16px" viewBox="0 0 16 16" shape-rendering="crispEdges"><path d="M2 14L6 4L8.2 9L10.2 7L14 14Z" fill="#0000ff"/><path d="M.5 0V14.5H15" stroke="#000" stroke-width="1" fill="none"/></svg><span class="ts" style="left:56.8px;top:-3.53px;font-size:10.2px;line-height:10.2px;">PrealignerY3-4_TrackHitMaker;1</span><div style="left:28.5px;top:19.4px;width:10px;height:1px;background-image:linear-gradient(90deg,#808080 1px,transparent 1px);background-size:2px 1px;"></div><svg style="left:38.5px;top:9.7px;width:16px;height:16px" viewBox="0 0 16 16" shape-rendering="crispEdges"><path d="M2 14L6 4L8.2 9L10.2 7L14 14Z" fill="#0000ff"/><path d="M.5 0V14.5H15" stroke="#000" stroke-width="1" fill="none"/></svg><span class="ts" style="left:56.8px;top:14.47px;font-size:10.2px;line-height:10.2px;">PrealignerspexialX3-5_TrackHitMake</span><div style="left:28.5px;top:37.4px;width:10px;height:1px;background-image:linear-gradient(90deg,#808080 1px,transparent 1px);background-size:2px 1px;"></div><svg style="left:38.5px;top:27.7px;width:16px;height:16px" viewBox="0 0 16 16" shape-rendering="crispEdges"><path d="M2 14L6 4L8.2 9L10.2 7L14 14Z" fill="#0000ff"/><path d="M.5 0V14.5H15" stroke="#000" stroke-width="1" fill="none"/></svg><span class="ts" style="left:56.8px;top:32.47px;font-size:10.2px;line-height:10.2px;">PrealignerspexialY3-5_TrackHitMake</span><div style="left:28.5px;top:55.4px;width:10px;height:1px;background-image:linear-gradient(90deg,#808080 1px,transparent 1px);background-size:2px 1px;"></div><svg style="left:38.5px;top:45.7px;width:16px;height:16px" viewBox="0 0 16 16" shape-rendering="crispEdges"><path d="M2 14L6 4L8.2 9L10.2 7L14 14Z" fill="#0000ff"/><path d="M.5 0V14.5H15" stroke="#000" stroke-width="1" fill="none"/></svg><span class="ts" style="left:56.8px;top:50.47px;font-size:10.2px;line-height:10.2px;">PrealignerX4-5_TrackHitMaker;1</span><div style="left:28.5px;top:73.4px;width:10px;height:1px;background-image:linear-gradient(90deg,#808080 1px,transparent 1px);background-size:2px 1px;"></div><svg style="left:38.5px;top:63.7px;width:16px;height:16px" viewBox="0 0 16 16" shape-rendering="crispEdges"><path d="M2 14L6 4L8.2 9L10.2 7L14 14Z" fill="#0000ff"/><path d="M.5 0V14.5H15" stroke="#000" stroke-width="1" fill="none"/></svg><span class="ts" style="left:56.8px;top:68.47px;font-size:10.2px;line-height:10.2px;">PrealignerY4-5_TrackHitMaker;1</span><div style="left:28.5px;top:91.4px;width:10px;height:1px;background-image:linear-gradient(90deg,#808080 1px,transparent 1px);background-size:2px 1px;"></div><svg style="left:38.5px;top:81.7px;width:16px;height:16px" viewBox="0 0 16 16" shape-rendering="crispEdges"><path d="M2 14L6 4L8.2 9L10.2 7L14 14Z" fill="#0000ff"/><path d="M.5 0V14.5H15" stroke="#000" stroke-width="1" fill="none"/></svg><span class="ts" style="left:56.8px;top:86.47px;font-size:10.2px;line-height:10.2px;">PrealignerspexialX4-6_TrackHitMake</span><div style="left:28.5px;top:109.4px;width:10px;height:1px;background-image:linear-gradient(90deg,#808080 1px,transparent 1px);background-size:2px 1px;"></div><svg style="left:38.5px;top:99.7px;width:16px;height:16px" viewBox="0 0 16 16" shape-rendering="crispEdges"><path d="M2 14L6 4L8.2 9L10.2 7L14 14Z" fill="#0000ff"/><path d="M.5 0V14.5H15" stroke="#000" stroke-width="1" fill="none"/></svg><span class="ts" style="left:56.8px;top:104.47px;font-size:10.2px;line-height:10.2px;">PrealignerspexialY4-6_TrackHitMake</span><div style="left:28.5px;top:127.4px;width:10px;height:1px;background-image:linear-gradient(90deg,#808080 1px,transparent 1px);background-size:2px 1px;"></div><svg style="left:38.5px;top:119px;width:16px;height:16px" viewBox="0 0 16 16" shape-rendering="crispEdges"><rect x="3" y="0" width="2" height="1" fill="#00ffff"/><rect x="4" y="1" width="2" height="1" fill="#00ffff"/><rect x="5" y="2" width="1" height="1" fill="#00ffff"/><rect x="3" y="1" width="1" height="1" fill="#0000ff"/><rect x="3" y="2" width="2" height="1" fill="#0000ff"/><rect x="3" y="3" width="3" height="11" fill="#0000ff"/><rect x="6" y="3" width="1" height="12" fill="#000"/><rect x="7" y="2" width="1" height="1" fill="#00ffff"/><rect x="7" y="3" width="2" height="1" fill="#00ffff"/><rect x="8" y="4" width="1" height="1" fill="#00ffff"/><rect x="7" y="4" width="1" height="1" fill="#0000ff"/><rect x="7" y="5" width="2" height="10" fill="#0000ff"/><rect x="9" y="5" width="1" height="11" fill="#000"/><rect x="10" y="4" width="1" height="1" fill="#00ffff"/><rect x="10" y="5" width="2" height="1" fill="#00ffff"/><rect x="11" y="6" width="1" height="1" fill="#00ffff"/><rect x="10" y="6" width="1" height="1" fill="#0000ff"/><rect x="10" y="7" width="2" height="9" fill="#0000ff"/><rect x="12" y="7" width="1" height="9" fill="#000"/><rect x="0" y="13" width="3" height="1" fill="#000"/><rect x="2" y="14" width="5" height="1" fill="#000"/><rect x="5" y="15" width="8" height="1" fill="#000"/></svg><span class="ts" style="left:56.8px;top:122.47px;font-size:10.2px;line-height:10.2px;">PrealignerXvsX0-1_TrackHitMaker;1</span><div style="left:0px;top:137.2px;width:222.5px;height:16px;background:#d0d0d0;"></div><div style="left:28.5px;top:145.4px;width:10px;height:1px;background-image:linear-gradient(90deg,#808080 1px,transparent 1px);background-size:2px 1px;"></div><svg style="left:38.5px;top:137px;width:16px;height:16px" viewBox="0 0 16 16" shape-rendering="crispEdges"><rect x="3" y="0" width="2" height="1" fill="#00ffff"/><rect x="4" y="1" width="2" height="1" fill="#00ffff"/><rect x="5" y="2" width="1" height="1" fill="#00ffff"/><rect x="3" y="1" width="1" height="1" fill="#0000ff"/><rect x="3" y="2" width="2" height="1" fill="#0000ff"/><rect x="3" y="3" width="3" height="11" fill="#0000ff"/><rect x="6" y="3" width="1" height="12" fill="#000"/><rect x="7" y="2" width="1" height="1" fill="#00ffff"/><rect x="7" y="3" width="2" height="1" fill="#00ffff"/><rect x="8" y="4" width="1" height="1" fill="#00ffff"/><rect x="7" y="4" width="1" height="1" fill="#0000ff"/><rect x="7" y="5" width="2" height="10" fill="#0000ff"/><rect x="9" y="5" width="1" height="11" fill="#000"/><rect x="10" y="4" width="1" height="1" fill="#00ffff"/><rect x="10" y="5" width="2" height="1" fill="#00ffff"/><rect x="11" y="6" width="1" height="1" fill="#00ffff"/><rect x="10" y="6" width="1" height="1" fill="#0000ff"/><rect x="10" y="7" width="2" height="9" fill="#0000ff"/><rect x="12" y="7" width="1" height="9" fill="#000"/><rect x="0" y="13" width="3" height="1" fill="#000"/><rect x="2" y="14" width="5" height="1" fill="#000"/><rect x="5" y="15" width="8" height="1" fill="#000"/></svg><span class="ts" style="left:56.8px;top:140.47px;font-size:10.2px;line-height:10.2px;">PrealignerYvsY0-1_TrackHitMaker;1</span><div style="left:28.5px;top:163.4px;width:10px;height:1px;background-image:linear-gradient(90deg,#808080 1px,transparent 1px);background-size:2px 1px;"></div><svg style="left:38.5px;top:155px;width:16px;height:16px" viewBox="0 0 16 16" shape-rendering="crispEdges"><rect x="3" y="0" width="2" height="1" fill="#00ffff"/><rect x="4" y="1" width="2" height="1" fill="#00ffff"/><rect x="5" y="2" width="1" height="1" fill="#00ffff"/><rect x="3" y="1" width="1" height="1" fill="#0000ff"/><rect x="3" y="2" width="2" height="1" fill="#0000ff"/><rect x="3" y="3" width="3" height="11" fill="#0000ff"/><rect x="6" y="3" width="1" height="12" fill="#000"/><rect x="7" y="2" width="1" height="1" fill="#00ffff"/><rect x="7" y="3" width="2" height="1" fill="#00ffff"/><rect x="8" y="4" width="1" height="1" fill="#00ffff"/><rect x="7" y="4" width="1" height="1" fill="#0000ff"/><rect x="7" y="5" width="2" height="10" fill="#0000ff"/><rect x="9" y="5" width="1" height="11" fill="#000"/><rect x="10" y="4" width="1" height="1" fill="#00ffff"/><rect x="10" y="5" width="2" height="1" fill="#00ffff"/><rect x="11" y="6" width="1" height="1" fill="#00ffff"/><rect x="10" y="6" width="1" height="1" fill="#0000ff"/><rect x="10" y="7" width="2" height="9" fill="#0000ff"/><rect x="12" y="7" width="1" height="9" fill="#000"/><rect x="0" y="13" width="3" height="1" fill="#000"/><rect x="2" y="14" width="5" height="1" fill="#000"/><rect x="5" y="15" width="8" height="1" fill="#000"/></svg><span class="ts" style="left:56.8px;top:158.47px;font-size:10.2px;line-height:10.2px;">PrealignerspesialXvsX0-2_TrackHitM</span><div style="left:28.5px;top:181.4px;width:10px;height:1px;background-image:linear-gradient(90deg,#808080 1px,transparent 1px);background-size:2px 1px;"></div><svg style="left:38.5px;top:173px;width:16px;height:16px" viewBox="0 0 16 16" shape-rendering="crispEdges"><rect x="3" y="0" width="2" height="1" fill="#00ffff"/><rect x="4" y="1" width="2" height="1" fill="#00ffff"/><rect x="5" y="2" width="1" height="1" fill="#00ffff"/><rect x="3" y="1" width="1" height="1" fill="#0000ff"/><rect x="3" y="2" width="2" height="1" fill="#0000ff"/><rect x="3" y="3" width="3" height="11" fill="#0000ff"/><rect x="6" y="3" width="1" height="12" fill="#000"/><rect x="7" y="2" width="1" height="1" fill="#00ffff"/><rect x="7" y="3" width="2" height="1" fill="#00ffff"/><rect x="8" y="4" width="1" height="1" fill="#00ffff"/><rect x="7" y="4" width="1" height="1" fill="#0000ff"/><rect x="7" y="5" width="2" height="10" fill="#0000ff"/><rect x="9" y="5" width="1" height="11" fill="#000"/><rect x="10" y="4" width="1" height="1" fill="#00ffff"/><rect x="10" y="5" width="2" height="1" fill="#00ffff"/><rect x="11" y="6" width="1" height="1" fill="#00ffff"/><rect x="10" y="6" width="1" height="1" fill="#0000ff"/><rect x="10" y="7" width="2" height="9" fill="#0000ff"/><rect x="12" y="7" width="1" height="9" fill="#000"/><rect x="0" y="13" width="3" height="1" fill="#000"/><rect x="2" y="14" width="5" height="1" fill="#000"/><rect x="5" y="15" width="8" height="1" fill="#000"/></svg><span class="ts" style="left:56.8px;top:176.47px;font-size:10.2px;line-height:10.2px;">PrealignerspezialYvsY0-2_TrackHitM</span><div style="left:28.5px;top:199.4px;width:10px;height:1px;background-image:linear-gradient(90deg,#808080 1px,transparent 1px);background-size:2px 1px;"></div><svg style="left:38.5px;top:191px;width:16px;height:16px" viewBox="0 0 16 16" shape-rendering="crispEdges"><rect x="3" y="0" width="2" height="1" fill="#00ffff"/><rect x="4" y="1" width="2" height="1" fill="#00ffff"/><rect x="5" y="2" width="1" height="1" fill="#00ffff"/><rect x="3" y="1" width="1" height="1" fill="#0000ff"/><rect x="3" y="2" width="2" height="1" fill="#0000ff"/><rect x="3" y="3" width="3" height="11" fill="#0000ff"/><rect x="6" y="3" width="1" height="12" fill="#000"/><rect x="7" y="2" width="1" height="1" fill="#00ffff"/><rect x="7" y="3" width="2" height="1" fill="#00ffff"/><rect x="8" y="4" width="1" height="1" fill="#00ffff"/><rect x="7" y="4" width="1" height="1" fill="#0000ff"/><rect x="7" y="5" width="2" height="10" fill="#0000ff"/><rect x="9" y="5" width="1" height="11" fill="#000"/><rect x="10" y="4" width="1" height="1" fill="#00ffff"/><rect x="10" y="5" width="2" height="1" fill="#00ffff"/><rect x="11" y="6" width="1" height="1" fill="#00ffff"/><rect x="10" y="6" width="1" height="1" fill="#0000ff"/><rect x="10" y="7" width="2" height="9" fill="#0000ff"/><rect x="12" y="7" width="1" height="9" fill="#000"/><rect x="0" y="13" width="3" height="1" fill="#000"/><rect x="2" y="14" width="5" height="1" fill="#000"/><rect x="5" y="15" width="8" height="1" fill="#000"/></svg><span class="ts" style="left:56.8px;top:194.47px;font-size:10.2px;line-height:10.2px;">PrealignerXvsX1-2_TrackHitMaker;1</span><div style="left:28.5px;top:217.4px;width:10px;height:1px;background-image:linear-gradient(90deg,#808080 1px,transparent 1px);background-size:2px 1px;"></div><svg style="left:38.5px;top:209px;width:16px;height:16px" viewBox="0 0 16 16" shape-rendering="crispEdges"><rect x="3" y="0" width="2" height="1" fill="#00ffff"/><rect x="4" y="1" width="2" height="1" fill="#00ffff"/><rect x="5" y="2" width="1" height="1" fill="#00ffff"/><rect x="3" y="1" width="1" height="1" fill="#0000ff"/><rect x="3" y="2" width="2" height="1" fill="#0000ff"/><rect x="3" y="3" width="3" height="11" fill="#0000ff"/><rect x="6" y="3" width="1" height="12" fill="#000"/><rect x="7" y="2" width="1" height="1" fill="#00ffff"/><rect x="7" y="3" width="2" height="1" fill="#00ffff"/><rect x="8" y="4" width="1" height="1" fill="#00ffff"/><rect x="7" y="4" width="1" height="1" fill="#0000ff"/><rect x="7" y="5" width="2" height="10" fill="#0000ff"/><rect x="9" y="5" width="1" height="11" fill="#000"/><rect x="10" y="4" width="1" height="1" fill="#00ffff"/><rect x="10" y="5" width="2" height="1" fill="#00ffff"/><rect x="11" y="6" width="1" height="1" fill="#00ffff"/><rect x="10" y="6" width="1" height="1" fill="#0000ff"/><rect x="10" y="7" width="2" height="9" fill="#0000ff"/><rect x="12" y="7" width="1" height="9" fill="#000"/><rect x="0" y="13" width="3" height="1" fill="#000"/><rect x="2" y="14" width="5" height="1" fill="#000"/><rect x="5" y="15" width="8" height="1" fill="#000"/></svg><span class="ts" style="left:56.8px;top:212.47px;font-size:10.2px;line-height:10.2px;">PrealignerYvsY1-2_TrackHitMaker;1</span><div style="left:28.5px;top:235.4px;width:10px;height:1px;background-image:linear-gradient(90deg,#808080 1px,transparent 1px);background-size:2px 1px;"></div><svg style="left:38.5px;top:227px;width:16px;height:16px" viewBox="0 0 16 16" shape-rendering="crispEdges"><rect x="3" y="0" width="2" height="1" fill="#00ffff"/><rect x="4" y="1" width="2" height="1" fill="#00ffff"/><rect x="5" y="2" width="1" height="1" fill="#00ffff"/><rect x="3" y="1" width="1" height="1" fill="#0000ff"/><rect x="3" y="2" width="2" height="1" fill="#0000ff"/><rect x="3" y="3" width="3" height="11" fill="#0000ff"/><rect x="6" y="3" width="1" height="12" fill="#000"/><rect x="7" y="2" width="1" height="1" fill="#00ffff"/><rect x="7" y="3" width="2" height="1" fill="#00ffff"/><rect x="8" y="4" width="1" height="1" fill="#00ffff"/><rect x="7" y="4" width="1" height="1" fill="#0000ff"/><rect x="7" y="5" width="2" height="10" fill="#0000ff"/><rect x="9" y="5" width="1" height="11" fill="#000"/><rect x="10" y="4" width="1" height="1" fill="#00ffff"/><rect x="10" y="5" width="2" height="1" fill="#00ffff"/><rect x="11" y="6" width="1" height="1" fill="#00ffff"/><rect x="10" y="6" width="1" height="1" fill="#0000ff"/><rect x="10" y="7" width="2" height="9" fill="#0000ff"/><rect x="12" y="7" width="1" height="9" fill="#000"/><rect x="0" y="13" width="3" height="1" fill="#000"/><rect x="2" y="14" width="5" height="1" fill="#000"/><rect x="5" y="15" width="8" height="1" fill="#000"/></svg><span class="ts" style="left:56.8px;top:230.47px;font-size:10.2px;line-height:10.2px;">PrealignerspesialXvsX1-3_TrackHitM</span><div style="left:28.5px;top:253.4px;width:10px;height:1px;background-image:linear-gradient(90deg,#808080 1px,transparent 1px);background-size:2px 1px;"></div><svg style="left:38.5px;top:245px;width:16px;height:16px" viewBox="0 0 16 16" shape-rendering="crispEdges"><rect x="3" y="0" width="2" height="1" fill="#00ffff"/><rect x="4" y="1" width="2" height="1" fill="#00ffff"/><rect x="5" y="2" width="1" height="1" fill="#00ffff"/><rect x="3" y="1" width="1" height="1" fill="#0000ff"/><rect x="3" y="2" width="2" height="1" fill="#0000ff"/><rect x="3" y="3" width="3" height="11" fill="#0000ff"/><rect x="6" y="3" width="1" height="12" fill="#000"/><rect x="7" y="2" width="1" height="1" fill="#00ffff"/><rect x="7" y="3" width="2" height="1" fill="#00ffff"/><rect x="8" y="4" width="1" height="1" fill="#00ffff"/><rect x="7" y="4" width="1" height="1" fill="#0000ff"/><rect x="7" y="5" width="2" height="10" fill="#0000ff"/><rect x="9" y="5" width="1" height="11" fill="#000"/><rect x="10" y="4" width="1" height="1" fill="#00ffff"/><rect x="10" y="5" width="2" height="1" fill="#00ffff"/><rect x="11" y="6" width="1" height="1" fill="#00ffff"/><rect x="10" y="6" width="1" height="1" fill="#0000ff"/><rect x="10" y="7" width="2" height="9" fill="#0000ff"/><rect x="12" y="7" width="1" height="9" fill="#000"/><rect x="0" y="13" width="3" height="1" fill="#000"/><rect x="2" y="14" width="5" height="1" fill="#000"/><rect x="5" y="15" width="8" height="1" fill="#000"/></svg><span class="ts" style="left:56.8px;top:248.47px;font-size:10.2px;line-height:10.2px;">PrealignerspezialYvsY1-3_TrackHitM</span><div style="left:28.5px;top:271.4px;width:10px;height:1px;background-image:linear-gradient(90deg,#808080 1px,transparent 1px);background-size:2px 1px;"></div><svg style="left:38.5px;top:263px;width:16px;height:16px" viewBox="0 0 16 16" shape-rendering="crispEdges"><rect x="3" y="0" width="2" height="1" fill="#00ffff"/><rect x="4" y="1" width="2" height="1" fill="#00ffff"/><rect x="5" y="2" width="1" height="1" fill="#00ffff"/><rect x="3" y="1" width="1" height="1" fill="#0000ff"/><rect x="3" y="2" width="2" height="1" fill="#0000ff"/><rect x="3" y="3" width="3" height="11" fill="#0000ff"/><rect x="6" y="3" width="1" height="12" fill="#000"/><rect x="7" y="2" width="1" height="1" fill="#00ffff"/><rect x="7" y="3" width="2" height="1" fill="#00ffff"/><rect x="8" y="4" width="1" height="1" fill="#00ffff"/><rect x="7" y="4" width="1" height="1" fill="#0000ff"/><rect x="7" y="5" width="2" height="10" fill="#0000ff"/><rect x="9" y="5" width="1" height="11" fill="#000"/><rect x="10" y="4" width="1" height="1" fill="#00ffff"/><rect x="10" y="5" width="2" height="1" fill="#00ffff"/><rect x="11" y="6" width="1" height="1" fill="#00ffff"/><rect x="10" y="6" width="1" height="1" fill="#0000ff"/><rect x="10" y="7" width="2" height="9" fill="#0000ff"/><rect x="12" y="7" width="1" height="9" fill="#000"/><rect x="0" y="13" width="3" height="1" fill="#000"/><rect x="2" y="14" width="5" height="1" fill="#000"/><rect x="5" y="15" width="8" height="1" fill="#000"/></svg><span class="ts" style="left:56.8px;top:266.47px;font-size:10.2px;line-height:10.2px;">PrealignerXvsX2-3_TrackHitMaker;1</span><div style="left:28.5px;top:289.4px;width:10px;height:1px;background-image:linear-gradient(90deg,#808080 1px,transparent 1px);background-size:2px 1px;"></div><svg style="left:38.5px;top:281px;width:16px;height:16px" viewBox="0 0 16 16" shape-rendering="crispEdges"><rect x="3" y="0" width="2" height="1" fill="#00ffff"/><rect x="4" y="1" width="2" height="1" fill="#00ffff"/><rect x="5" y="2" width="1" height="1" fill="#00ffff"/><rect x="3" y="1" width="1" height="1" fill="#0000ff"/><rect x="3" y="2" width="2" height="1" fill="#0000ff"/><rect x="3" y="3" width="3" height="11" fill="#0000ff"/><rect x="6" y="3" width="1" height="12" fill="#000"/><rect x="7" y="2" width="1" height="1" fill="#00ffff"/><rect x="7" y="3" width="2" height="1" fill="#00ffff"/><rect x="8" y="4" width="1" height="1" fill="#00ffff"/><rect x="7" y="4" width="1" height="1" fill="#0000ff"/><rect x="7" y="5" width="2" height="10" fill="#0000ff"/><rect x="9" y="5" width="1" height="11" fill="#000"/><rect x="10" y="4" width="1" height="1" fill="#00ffff"/><rect x="10" y="5" width="2" height="1" fill="#00ffff"/><rect x="11" y="6" width="1" height="1" fill="#00ffff"/><rect x="10" y="6" width="1" height="1" fill="#0000ff"/><rect x="10" y="7" width="2" height="9" fill="#0000ff"/><rect x="12" y="7" width="1" height="9" fill="#000"/><rect x="0" y="13" width="3" height="1" fill="#000"/><rect x="2" y="14" width="5" height="1" fill="#000"/><rect x="5" y="15" width="8" height="1" fill="#000"/></svg><span class="ts" style="left:56.8px;top:284.47px;font-size:10.2px;line-height:10.2px;">PrealignerYvsY2-3_TrackHitMaker;1</span><div style="left:28.5px;top:307.4px;width:10px;height:1px;background-image:linear-gradient(90deg,#808080 1px,transparent 1px);background-size:2px 1px;"></div><svg style="left:38.5px;top:299px;width:16px;height:16px" viewBox="0 0 16 16" shape-rendering="crispEdges"><rect x="3" y="0" width="2" height="1" fill="#00ffff"/><rect x="4" y="1" width="2" height="1" fill="#00ffff"/><rect x="5" y="2" width="1" height="1" fill="#00ffff"/><rect x="3" y="1" width="1" height="1" fill="#0000ff"/><rect x="3" y="2" width="2" height="1" fill="#0000ff"/><rect x="3" y="3" width="3" height="11" fill="#0000ff"/><rect x="6" y="3" width="1" height="12" fill="#000"/><rect x="7" y="2" width="1" height="1" fill="#00ffff"/><rect x="7" y="3" width="2" height="1" fill="#00ffff"/><rect x="8" y="4" width="1" height="1" fill="#00ffff"/><rect x="7" y="4" width="1" height="1" fill="#0000ff"/><rect x="7" y="5" width="2" height="10" fill="#0000ff"/><rect x="9" y="5" width="1" height="11" fill="#000"/><rect x="10" y="4" width="1" height="1" fill="#00ffff"/><rect x="10" y="5" width="2" height="1" fill="#00ffff"/><rect x="11" y="6" width="1" height="1" fill="#00ffff"/><rect x="10" y="6" width="1" height="1" fill="#0000ff"/><rect x="10" y="7" width="2" height="9" fill="#0000ff"/><rect x="12" y="7" width="1" height="9" fill="#000"/><rect x="0" y="13" width="3" height="1" fill="#000"/><rect x="2" y="14" width="5" height="1" fill="#000"/><rect x="5" y="15" width="8" height="1" fill="#000"/></svg><span class="ts" style="left:56.8px;top:302.47px;font-size:10.2px;line-height:10.2px;">PrealignerspesialXvsX2-4_TrackHitM</span><div style="left:28.5px;top:325.4px;width:10px;height:1px;background-image:linear-gradient(90deg,#808080 1px,transparent 1px);background-size:2px 1px;"></div><svg style="left:38.5px;top:317px;width:16px;height:16px" viewBox="0 0 16 16" shape-rendering="crispEdges"><rect x="3" y="0" width="2" height="1" fill="#00ffff"/><rect x="4" y="1" width="2" height="1" fill="#00ffff"/><rect x="5" y="2" width="1" height="1" fill="#00ffff"/><rect x="3" y="1" width="1" height="1" fill="#0000ff"/><rect x="3" y="2" width="2" height="1" fill="#0000ff"/><rect x="3" y="3" width="3" height="11" fill="#0000ff"/><rect x="6" y="3" width="1" height="12" fill="#000"/><rect x="7" y="2" width="1" height="1" fill="#00ffff"/><rect x="7" y="3" width="2" height="1" fill="#00ffff"/><rect x="8" y="4" width="1" height="1" fill="#00ffff"/><rect x="7" y="4" width="1" height="1" fill="#0000ff"/><rect x="7" y="5" width="2" height="10" fill="#0000ff"/><rect x="9" y="5" width="1" height="11" fill="#000"/><rect x="10" y="4" width="1" height="1" fill="#00ffff"/><rect x="10" y="5" width="2" height="1" fill="#00ffff"/><rect x="11" y="6" width="1" height="1" fill="#00ffff"/><rect x="10" y="6" width="1" height="1" fill="#0000ff"/><rect x="10" y="7" width="2" height="9" fill="#0000ff"/><rect x="12" y="7" width="1" height="9" fill="#000"/><rect x="0" y="13" width="3" height="1" fill="#000"/><rect x="2" y="14" width="5" height="1" fill="#000"/><rect x="5" y="15" width="8" height="1" fill="#000"/></svg><span class="ts" style="left:56.8px;top:320.47px;font-size:10.2px;line-height:10.2px;">PrealignerspezialYvsY2-4_TrackHitM</span><div style="left:28.5px;top:343.4px;width:10px;height:1px;background-image:linear-gradient(90deg,#808080 1px,transparent 1px);background-size:2px 1px;"></div><svg style="left:38.5px;top:335px;width:16px;height:16px" viewBox="0 0 16 16" shape-rendering="crispEdges"><rect x="3" y="0" width="2" height="1" fill="#00ffff"/><rect x="4" y="1" width="2" height="1" fill="#00ffff"/><rect x="5" y="2" width="1" height="1" fill="#00ffff"/><rect x="3" y="1" width="1" height="1" fill="#0000ff"/><rect x="3" y="2" width="2" height="1" fill="#0000ff"/><rect x="3" y="3" width="3" height="11" fill="#0000ff"/><rect x="6" y="3" width="1" height="12" fill="#000"/><rect x="7" y="2" width="1" height="1" fill="#00ffff"/><rect x="7" y="3" width="2" height="1" fill="#00ffff"/><rect x="8" y="4" width="1" height="1" fill="#00ffff"/><rect x="7" y="4" width="1" height="1" fill="#0000ff"/><rect x="7" y="5" width="2" height="10" fill="#0000ff"/><rect x="9" y="5" width="1" height="11" fill="#000"/><rect x="10" y="4" width="1" height="1" fill="#00ffff"/><rect x="10" y="5" width="2" height="1" fill="#00ffff"/><rect x="11" y="6" width="1" height="1" fill="#00ffff"/><rect x="10" y="6" width="1" height="1" fill="#0000ff"/><rect x="10" y="7" width="2" height="9" fill="#0000ff"/><rect x="12" y="7" width="1" height="9" fill="#000"/><rect x="0" y="13" width="3" height="1" fill="#000"/><rect x="2" y="14" width="5" height="1" fill="#000"/><rect x="5" y="15" width="8" height="1" fill="#000"/></svg><span class="ts" style="left:56.8px;top:338.47px;font-size:10.2px;line-height:10.2px;">PrealignerXvsX3-4_TrackHitMaker;1</span><div style="left:28.5px;top:361.4px;width:10px;height:1px;background-image:linear-gradient(90deg,#808080 1px,transparent 1px);background-size:2px 1px;"></div><svg style="left:38.5px;top:353px;width:16px;height:16px" viewBox="0 0 16 16" shape-rendering="crispEdges"><rect x="3" y="0" width="2" height="1" fill="#00ffff"/><rect x="4" y="1" width="2" height="1" fill="#00ffff"/><rect x="5" y="2" width="1" height="1" fill="#00ffff"/><rect x="3" y="1" width="1" height="1" fill="#0000ff"/><rect x="3" y="2" width="2" height="1" fill="#0000ff"/><rect x="3" y="3" width="3" height="11" fill="#0000ff"/><rect x="6" y="3" width="1" height="12" fill="#000"/><rect x="7" y="2" width="1" height="1" fill="#00ffff"/><rect x="7" y="3" width="2" height="1" fill="#00ffff"/><rect x="8" y="4" width="1" height="1" fill="#00ffff"/><rect x="7" y="4" width="1" height="1" fill="#0000ff"/><rect x="7" y="5" width="2" height="10" fill="#0000ff"/><rect x="9" y="5" width="1" height="11" fill="#000"/><rect x="10" y="4" width="1" height="1" fill="#00ffff"/><rect x="10" y="5" width="2" height="1" fill="#00ffff"/><rect x="11" y="6" width="1" height="1" fill="#00ffff"/><rect x="10" y="6" width="1" height="1" fill="#0000ff"/><rect x="10" y="7" width="2" height="9" fill="#0000ff"/><rect x="12" y="7" width="1" height="9" fill="#000"/><rect x="0" y="13" width="3" height="1" fill="#000"/><rect x="2" y="14" width="5" height="1" fill="#000"/><rect x="5" y="15" width="8" height="1" fill="#000"/></svg><span class="ts" style="left:56.8px;top:356.47px;font-size:10.2px;line-height:10.2px;">PrealignerYvsY3-4_TrackHitMaker;1</span><div style="left:28.5px;top:379.4px;width:10px;height:1px;background-image:linear-gradient(90deg,#808080 1px,transparent 1px);background-size:2px 1px;"></div><svg style="left:38.5px;top:371px;width:16px;height:16px" viewBox="0 0 16 16" shape-rendering="crispEdges"><rect x="3" y="0" width="2" height="1" fill="#00ffff"/><rect x="4" y="1" width="2" height="1" fill="#00ffff"/><rect x="5" y="2" width="1" height="1" fill="#00ffff"/><rect x="3" y="1" width="1" height="1" fill="#0000ff"/><rect x="3" y="2" width="2" height="1" fill="#0000ff"/><rect x="3" y="3" width="3" height="11" fill="#0000ff"/><rect x="6" y="3" width="1" height="12" fill="#000"/><rect x="7" y="2" width="1" height="1" fill="#00ffff"/><rect x="7" y="3" width="2" height="1" fill="#00ffff"/><rect x="8" y="4" width="1" height="1" fill="#00ffff"/><rect x="7" y="4" width="1" height="1" fill="#0000ff"/><rect x="7" y="5" width="2" height="10" fill="#0000ff"/><rect x="9" y="5" width="1" height="11" fill="#000"/><rect x="10" y="4" width="1" height="1" fill="#00ffff"/><rect x="10" y="5" width="2" height="1" fill="#00ffff"/><rect x="11" y="6" width="1" height="1" fill="#00ffff"/><rect x="10" y="6" width="1" height="1" fill="#0000ff"/><rect x="10" y="7" width="2" height="9" fill="#0000ff"/><rect x="12" y="7" width="1" height="9" fill="#000"/><rect x="0" y="13" width="3" height="1" fill="#000"/><rect x="2" y="14" width="5" height="1" fill="#000"/><rect x="5" y="15" width="8" height="1" fill="#000"/></svg><span class="ts" style="left:56.8px;top:374.47px;font-size:10.2px;line-height:10.2px;">PrealignerspesialXvsX3-5_TrackHitM</span><div style="left:28.5px;top:397.4px;width:10px;height:1px;background-image:linear-gradient(90deg,#808080 1px,transparent 1px);background-size:2px 1px;"></div><svg style="left:38.5px;top:389px;width:16px;height:16px" viewBox="0 0 16 16" shape-rendering="crispEdges"><rect x="3" y="0" width="2" height="1" fill="#00ffff"/><rect x="4" y="1" width="2" height="1" fill="#00ffff"/><rect x="5" y="2" width="1" height="1" fill="#00ffff"/><rect x="3" y="1" width="1" height="1" fill="#0000ff"/><rect x="3" y="2" width="2" height="1" fill="#0000ff"/><rect x="3" y="3" width="3" height="11" fill="#0000ff"/><rect x="6" y="3" width="1" height="12" fill="#000"/><rect x="7" y="2" width="1" height="1" fill="#00ffff"/><rect x="7" y="3" width="2" height="1" fill="#00ffff"/><rect x="8" y="4" width="1" height="1" fill="#00ffff"/><rect x="7" y="4" width="1" height="1" fill="#0000ff"/><rect x="7" y="5" width="2" height="10" fill="#0000ff"/><rect x="9" y="5" width="1" height="11" fill="#000"/><rect x="10" y="4" width="1" height="1" fill="#00ffff"/><rect x="10" y="5" width="2" height="1" fill="#00ffff"/><rect x="11" y="6" width="1" height="1" fill="#00ffff"/><rect x="10" y="6" width="1" height="1" fill="#0000ff"/><rect x="10" y="7" width="2" height="9" fill="#0000ff"/><rect x="12" y="7" width="1" height="9" fill="#000"/><rect x="0" y="13" width="3" height="1" fill="#000"/><rect x="2" y="14" width="5" height="1" fill="#000"/><rect x="5" y="15" width="8" height="1" fill="#000"/></svg><span class="ts" style="left:56.8px;top:392.47px;font-size:10.2px;line-height:10.2px;">PrealignerspezialYvsY3-5_TrackHitM</span><div style="left:28.5px;top:415.4px;width:10px;height:1px;background-image:linear-gradient(90deg,#808080 1px,transparent 1px);background-size:2px 1px;"></div><svg style="left:38.5px;top:407px;width:16px;height:16px" viewBox="0 0 16 16" shape-rendering="crispEdges"><rect x="3" y="0" width="2" height="1" fill="#00ffff"/><rect x="4" y="1" width="2" height="1" fill="#00ffff"/><rect x="5" y="2" width="1" height="1" fill="#00ffff"/><rect x="3" y="1" width="1" height="1" fill="#0000ff"/><rect x="3" y="2" width="2" height="1" fill="#0000ff"/><rect x="3" y="3" width="3" height="11" fill="#0000ff"/><rect x="6" y="3" width="1" height="12" fill="#000"/><rect x="7" y="2" width="1" height="1" fill="#00ffff"/><rect x="7" y="3" width="2" height="1" fill="#00ffff"/><rect x="8" y="4" width="1" height="1" fill="#00ffff"/><rect x="7" y="4" width="1" height="1" fill="#0000ff"/><rect x="7" y="5" width="2" height="10" fill="#0000ff"/><rect x="9" y="5" width="1" height="11" fill="#000"/><rect x="10" y="4" width="1" height="1" fill="#00ffff"/><rect x="10" y="5" width="2" height="1" fill="#00ffff"/><rect x="11" y="6" width="1" height="1" fill="#00ffff"/><rect x="10" y="6" width="1" height="1" fill="#0000ff"/><rect x="10" y="7" width="2" height="9" fill="#0000ff"/><rect x="12" y="7" width="1" height="9" fill="#000"/><rect x="0" y="13" width="3" height="1" fill="#000"/><rect x="2" y="14" width="5" height="1" fill="#000"/><rect x="5" y="15" width="8" height="1" fill="#000"/></svg><span class="ts" style="left:56.8px;top:410.47px;font-size:10.2px;line-height:10.2px;">PrealignerXvsX4-5_TrackHitMaker;1</span><div style="left:28.5px;top:433.4px;width:10px;height:1px;background-image:linear-gradient(90deg,#808080 1px,transparent 1px);background-size:2px 1px;"></div><svg style="left:38.5px;top:425px;width:16px;height:16px" viewBox="0 0 16 16" shape-rendering="crispEdges"><rect x="3" y="0" width="2" height="1" fill="#00ffff"/><rect x="4" y="1" width="2" height="1" fill="#00ffff"/><rect x="5" y="2" width="1" height="1" fill="#00ffff"/><rect x="3" y="1" width="1" height="1" fill="#0000ff"/><rect x="3" y="2" width="2" height="1" fill="#0000ff"/><rect x="3" y="3" width="3" height="11" fill="#0000ff"/><rect x="6" y="3" width="1" height="12" fill="#000"/><rect x="7" y="2" width="1" height="1" fill="#00ffff"/><rect x="7" y="3" width="2" height="1" fill="#00ffff"/><rect x="8" y="4" width="1" height="1" fill="#00ffff"/><rect x="7" y="4" width="1" height="1" fill="#0000ff"/><rect x="7" y="5" width="2" height="10" fill="#0000ff"/><rect x="9" y="5" width="1" height="11" fill="#000"/><rect x="10" y="4" width="1" height="1" fill="#00ffff"/><rect x="10" y="5" width="2" height="1" fill="#00ffff"/><rect x="11" y="6" width="1" height="1" fill="#00ffff"/><rect x="10" y="6" width="1" height="1" fill="#0000ff"/><rect x="10" y="7" width="2" height="9" fill="#0000ff"/><rect x="12" y="7" width="1" height="9" fill="#000"/><rect x="0" y="13" width="3" height="1" fill="#000"/><rect x="2" y="14" width="5" height="1" fill="#000"/><rect x="5" y="15" width="8" height="1" fill="#000"/></svg><span class="ts" style="left:56.8px;top:428.47px;font-size:10.2px;line-height:10.2px;">PrealignerYvsY4-5_TrackHitMaker;1</span><div style="left:28.5px;top:451.4px;width:10px;height:1px;background-image:linear-gradient(90deg,#808080 1px,transparent 1px);background-size:2px 1px;"></div><svg style="left:38.5px;top:443px;width:16px;height:16px" viewBox="0 0 16 16" shape-rendering="crispEdges"><rect x="3" y="0" width="2" height="1" fill="#00ffff"/><rect x="4" y="1" width="2" height="1" fill="#00ffff"/><rect x="5" y="2" width="1" height="1" fill="#00ffff"/><rect x="3" y="1" width="1" height="1" fill="#0000ff"/><rect x="3" y="2" width="2" height="1" fill="#0000ff"/><rect x="3" y="3" width="3" height="11" fill="#0000ff"/><rect x="6" y="3" width="1" height="12" fill="#000"/><rect x="7" y="2" width="1" height="1" fill="#00ffff"/><rect x="7" y="3" width="2" height="1" fill="#00ffff"/><rect x="8" y="4" width="1" height="1" fill="#00ffff"/><rect x="7" y="4" width="1" height="1" fill="#0000ff"/><rect x="7" y="5" width="2" height="10" fill="#0000ff"/><rect x="9" y="5" width="1" height="11" fill="#000"/><rect x="10" y="4" width="1" height="1" fill="#00ffff"/><rect x="10" y="5" width="2" height="1" fill="#00ffff"/><rect x="11" y="6" width="1" height="1" fill="#00ffff"/><rect x="10" y="6" width="1" height="1" fill="#0000ff"/><rect x="10" y="7" width="2" height="9" fill="#0000ff"/><rect x="12" y="7" width="1" height="9" fill="#000"/><rect x="0" y="13" width="3" height="1" fill="#000"/><rect x="2" y="14" width="5" height="1" fill="#000"/><rect x="5" y="15" width="8" height="1" fill="#000"/></svg><span class="ts" style="left:56.8px;top:446.47px;font-size:10.2px;line-height:10.2px;">PrealignerspesialXvsX4-6_TrackHitM</span><div style="left:28.5px;top:469.4px;width:10px;height:1px;background-image:linear-gradient(90deg,#808080 1px,transparent 1px);background-size:2px 1px;"></div><svg style="left:38.5px;top:461px;width:16px;height:16px" viewBox="0 0 16 16" shape-rendering="crispEdges"><rect x="3" y="0" width="2" height="1" fill="#00ffff"/><rect x="4" y="1" width="2" height="1" fill="#00ffff"/><rect x="5" y="2" width="1" height="1" fill="#00ffff"/><rect x="3" y="1" width="1" height="1" fill="#0000ff"/><rect x="3" y="2" width="2" height="1" fill="#0000ff"/><rect x="3" y="3" width="3" height="11" fill="#0000ff"/><rect x="6" y="3" width="1" height="12" fill="#000"/><rect x="7" y="2" width="1" height="1" fill="#00ffff"/><rect x="7" y="3" width="2" height="1" fill="#00ffff"/><rect x="8" y="4" width="1" height="1" fill="#00ffff"/><rect x="7" y="4" width="1" height="1" fill="#0000ff"/><rect x="7" y="5" width="2" height="10" fill="#0000ff"/><rect x="9" y="5" width="1" height="11" fill="#000"/><rect x="10" y="4" width="1" height="1" fill="#00ffff"/><rect x="10" y="5" width="2" height="1" fill="#00ffff"/><rect x="11" y="6" width="1" height="1" fill="#00ffff"/><rect x="10" y="6" width="1" height="1" fill="#0000ff"/><rect x="10" y="7" width="2" height="9" fill="#0000ff"/><rect x="12" y="7" width="1" height="9" fill="#000"/><rect x="0" y="13" width="3" height="1" fill="#000"/><rect x="2" y="14" width="5" height="1" fill="#000"/><rect x="5" y="15" width="8" height="1" fill="#000"/></svg><span class="ts" style="left:56.8px;top:464.47px;font-size:10.2px;line-height:10.2px;">PrealignerspezialYvsY4-6_TrackHitM</span><div style="left:28.5px;top:487.4px;width:10px;height:1px;background-image:linear-gradient(90deg,#808080 1px,transparent 1px);background-size:2px 1px;"></div><svg style="left:38.7px;top:479.8px;width:16px;height:14px" viewBox="0 0 16 14" shape-rendering="crispEdges"><path d="M0 6L5 0H15.5V9L11 13H0Z" fill="#7a7a7a"/><path d="M1 6.5L5.5 1H14" stroke="#c8c8c8" stroke-width="1" fill="none"/><rect x="1" y="6" width="3" height="6.5" fill="#ff00ff"/><rect x="4" y="7" width="1.5" height="5.5" fill="#800080"/><rect x="5.5" y="3" width="3" height="9.5" fill="#ff00ff"/><rect x="5.5" y="6" width="3" height="6.5" fill="#a000a0"/><path d="M5.5 3L7 1.5H10L8.5 3Z" fill="#00ffff"/><rect x="9" y="4.5" width="2" height="8" fill="#0000c0"/><rect x="11" y="3.5" width="3" height="8.5" fill="#ff00ff"/><rect x="11" y="6.5" width="3" height="5.5" fill="#800080"/><path d="M10 3.5L11.5 2H14.5L13 3.5Z" fill="#00ffff"/></svg><span class="ts" style="left:56.8px;top:482.47px;font-size:10.2px;line-height:10.2px;">TrackHitMaker/geometory_TrackHitM</span><svg style="left:0.8px;top:498.5px;width:17px;height:14px" viewBox="0 0 17 14" shape-rendering="crispEdges"><path d="M2.5 2.5L4 1H7.5L9 2.5H13V5H2.5Z" fill="#ffff9a" stroke="#808080" stroke-width="1"/><path d="M.5 5H12L15 11.5H3Z" fill="#ffff55" stroke="#808080" stroke-width="1"/><path d="M3 12.5H15.5L15.5 4" stroke="#000" stroke-width="1.2" fill="none"/><path d="M12.5 5L15.5 11.5" stroke="#000" stroke-width="1.3"/></svg><span class="ts" style="left:18.8px;top:499.97px;font-size:10.2px;line-height:10.2px;">/</span><div style="left:8.5px;top:512px;width:1px;height:7px;background-image:linear-gradient(180deg,#808080 1px,transparent 1px);background-size:1px 2px;"></div><div style="left:4.5px;top:518.5px;width:9px;height:9px;background:#fff;border:1px solid #808080;"><div style="left:1px;top:3px;width:5px;height:1px;background:#000;"></div></div><div style="left:13.5px;top:523px;width:6px;height:1px;background-image:linear-gradient(90deg,#808080 1px,transparent 1px);background-size:2px 1px;"></div><svg style="left:19.8px;top:516.5px;width:17px;height:14px" viewBox="0 0 17 14" shape-rendering="crispEdges"><path d="M2.5 2.5L4 1H7.5L9 2.5H13V5H2.5Z" fill="#ffff9a" stroke="#808080" stroke-width="1"/><path d="M.5 5H12L15 11.5H3Z" fill="#ffff55" stroke="#808080" stroke-width="1"/><path d="M3 12.5H15.5L15.5 4" stroke="#000" stroke-width="1.2" fill="none"/><path d="M12.5 5L15.5 11.5" stroke="#000" stroke-width="1.3"/></svg><span class="ts" style="left:37px;top:517.97px;font-size:10.2px;line-height:10.2px;">home</span><div style="left:27.5px;top:530px;width:1px;height:7px;background-image:linear-gradient(180deg,#808080 1px,transparent 1px);background-size:1px 2px;"></div><div style="left:23.5px;top:536.5px;width:9px;height:9px;background:#fff;border:1px solid #808080;"><div style="left:1px;top:3px;width:5px;height:1px;background:#000;"></div></div><div style="left:32.5px;top:541px;width:6px;height:1px;background-image:linear-gradient(90deg,#808080 1px,transparent 1px);background-size:2px 1px;"></div><svg style="left:38.8px;top:534.5px;width:17px;height:14px" viewBox="0 0 17 14" shape-rendering="crispEdges"><path d="M2.5 2.5L4 1H7.5L9 2.5H13V5H2.5Z" fill="#ffff9a" stroke="#808080" stroke-width="1"/><path d="M.5 5H12L15 11.5H3Z" fill="#ffff55" stroke="#808080" stroke-width="1"/><path d="M3 12.5H15.5L15.5 4" stroke="#000" stroke-width="1.2" fill="none"/><path d="M12.5 5L15.5 11.5" stroke="#000" stroke-width="1.3"/></svg><span class="ts" style="left:56.4px;top:535.97px;font-size:10.2px;line-height:10.2px;">atlasj</span><div style="left:27.5px;top:546px;width:1px;height:116px;background-image:linear-gradient(180deg,#808080 1px,transparent 1px);background-size:1px 2px;"></div><div style="left:46.5px;top:548px;width:1px;height:114px;background-image:linear-gradient(180deg,#808080 1px,transparent 1px);background-size:1px 2px;"></div><div style="left:47.5px;top:559px;width:11px;height:1px;background-image:linear-gradient(90deg,#808080 1px,transparent 1px);background-size:2px 1px;"></div><svg style="left:58.5px;top:552.5px;width:16px;height:14px" viewBox="0 0 16 14" shape-rendering="crispEdges"><path d="M1 2.5L2.5 1H6L7.5 2.5H13.5V11.5H1Z" fill="#ffff6a" stroke="#808080" stroke-width="1"/><path d="M1.5 12.5H14.5V3.5" stroke="#000" stroke-width="1" fill="none"/><path d="M2 3.5H13" stroke="#fff" stroke-width="1"/></svg><span class="ts" style="left:75.8px;top:553.97px;font-size:10.2px;line-height:10.2px;">Desktop</span><div style="left:47.5px;top:577px;width:11px;height:1px;background-image:linear-gradient(90deg,#808080 1px,transparent 1px);background-size:2px 1px;"></div><svg style="left:58.5px;top:570.5px;width:16px;height:14px" viewBox="0 0 16 14" shape-rendering="crispEdges"><path d="M1 2.5L2.5 1H6L7.5 2.5H13.5V11.5H1Z" fill="#ffff6a" stroke="#808080" stroke-width="1"/><path d="M1.5 12.5H14.5V3.5" stroke="#000" stroke-width="1" fill="none"/><path d="M2 3.5H13" stroke="#fff" stroke-width="1"/></svg><span class="ts" style="left:75.8px;top:571.97px;font-size:10.2px;line-height:10.2px;">Documents</span><div style="left:47.5px;top:595px;width:11px;height:1px;background-image:linear-gradient(90deg,#808080 1px,transparent 1px);background-size:2px 1px;"></div><svg style="left:58.5px;top:588.5px;width:16px;height:14px" viewBox="0 0 16 14" shape-rendering="crispEdges"><path d="M1 2.5L2.5 1H6L7.5 2.5H13.5V11.5H1Z" fill="#ffff6a" stroke="#808080" stroke-width="1"/><path d="M1.5 12.5H14.5V3.5" stroke="#000" stroke-width="1" fill="none"/><path d="M2 3.5H13" stroke="#fff" stroke-width="1"/></svg><span class="ts" style="left:75.8px;top:589.97px;font-size:10.2px;line-height:10.2px;">Downloads</span><div style="left:47.5px;top:613px;width:11px;height:1px;background-image:linear-gradient(90deg,#808080 1px,transparent 1px);background-size:2px 1px;"></div><svg style="left:58.5px;top:606.5px;width:16px;height:14px" viewBox="0 0 16 14" shape-rendering="crispEdges"><path d="M1 2.5L2.5 1H6L7.5 2.5H13.5V11.5H1Z" fill="#ffff6a" stroke="#808080" stroke-width="1"/><path d="M1.5 12.5H14.5V3.5" stroke="#000" stroke-width="1" fill="none"/><path d="M2 3.5H13" stroke="#fff" stroke-width="1"/></svg><span class="ts" style="left:75.8px;top:607.97px;font-size:10.2px;line-height:10.2px;">Music</span><div style="left:47.5px;top:631px;width:11px;height:1px;background-image:linear-gradient(90deg,#808080 1px,transparent 1px);background-size:2px 1px;"></div><svg style="left:58.5px;top:624.5px;width:16px;height:14px" viewBox="0 0 16 14" shape-rendering="crispEdges"><path d="M1 2.5L2.5 1H6L7.5 2.5H13.5V11.5H1Z" fill="#ffff6a" stroke="#808080" stroke-width="1"/><path d="M1.5 12.5H14.5V3.5" stroke="#000" stroke-width="1" fill="none"/><path d="M2 3.5H13" stroke="#fff" stroke-width="1"/></svg><span class="ts" style="left:75.8px;top:625.97px;font-size:10.2px;line-height:10.2px;">Pictures</span><div style="left:47.5px;top:649px;width:11px;height:1px;background-image:linear-gradient(90deg,#808080 1px,transparent 1px);background-size:2px 1px;"></div><svg style="left:58.5px;top:642.5px;width:16px;height:14px" viewBox="0 0 16 14" shape-rendering="crispEdges"><path d="M1 2.5L2.5 1H6L7.5 2.5H13.5V11.5H1Z" fill="#ffff6a" stroke="#808080" stroke-width="1"/><path d="M1.5 12.5H14.5V3.5" stroke="#000" stroke-width="1" fill="none"/><path d="M2 3.5H13" stroke="#fff" stroke-width="1"/></svg><span class="ts" style="left:75.8px;top:643.97px;font-size:10.2px;line-height:10.2px;">Public</span><div style="left:47.5px;top:667px;width:11px;height:1px;background-image:linear-gradient(90deg,#808080 1px,transparent 1px);background-size:2px 1px;"></div><svg style="left:58.5px;top:660.5px;width:16px;height:14px" viewBox="0 0 16 14" shape-rendering="crispEdges"><path d="M1 2.5L2.5 1H6L7.5 2.5H13.5V11.5H1Z" fill="#ffff6a" stroke="#808080" stroke-width="1"/><path d="M1.5 12.5H14.5V3.5" stroke="#000" stroke-width="1" fill="none"/><path d="M2 3.5H13" stroke="#fff" stroke-width="1"/></svg><span class="ts" style="left:75.8px;top:661.97px;font-size:10.2px;line-height:10.2px;">Templates</span></div>
<div style="left:231px;top:108px;width:16px;height:662px;background:#ececec;"></div>
<svg style="left:235px;top:113.5px;width:8px;height:5px" viewBox="0 0 8 5"><path d="M0 5H8L4.0 0Z" fill="#000"/></svg>
<svg style="left:235px;top:759.5px;width:8px;height:5px" viewBox="0 0 8 5"><path d="M0 0H8L4.0 5Z" fill="#000"/></svg>
<div style="left:231px;top:383px;width:16px;height:56.5px;background:#e8e8e8;border-top:1px solid #ffffff;border-left:1px solid #ffffff;border-bottom:1px solid #404040;border-right:1px solid #404040;"><div style="left:0px;top:0px;width:14px;height:54.5px;border-bottom:1px solid #848484;border-right:1px solid #848484;"></div></div>
<div style="left:236px;top:409px;width:6px;height:1px;background:#666;"></div><div style="left:236px;top:412px;width:6px;height:1px;background:#666;"></div><div style="left:236px;top:415px;width:6px;height:1px;background:#666;"></div>
<div style="left:8.5px;top:770px;width:238.5px;height:15.5px;background:#ececec;"></div>
<svg style="left:12px;top:774px;width:5px;height:8px" viewBox="0 0 5 8"><path d="M5 0V8L0 4.0Z" fill="#000"/></svg>
<svg style="left:220px;top:774px;width:5px;height:8px" viewBox="0 0 5 8"><path d="M0 0V8L5 4.0Z" fill="#000"/></svg>
<div style="left:23.3px;top:770px;width:133px;height:15.5px;background:#e8e8e8;border-top:1px solid #ffffff;border-left:1px solid #ffffff;border-bottom:1px solid #404040;border-right:1px solid #404040;"><div style="left:0px;top:0px;width:131px;height:13.5px;border-bottom:1px solid #848484;border-right:1px solid #848484;"></div></div>
<div style="left:87px;top:774px;width:1px;height:8px;background:#666;"></div><div style="left:90px;top:774px;width:1px;height:8px;background:#666;"></div><div style="left:93px;top:774px;width:1px;height:8px;background:#666;"></div>
<span class="ts" style="left:10.3px;top:795.14px;font-size:12px;line-height:12px;">Filter:</span>
<div style="left:48.5px;top:791.3px;width:195px;height:19.5px;background:#fff;border-top:1px solid #848484;border-left:1px solid #848484;border-bottom:1px solid #ffffff;border-right:1px solid #ffffff;"><div style="left:0px;top:0px;width:193px;height:17.5px;border-top:1px solid #8e8e8e;border-left:1px solid #8e8e8e;border-bottom:1px solid #e8e8e8;border-right:1px solid #e8e8e8;"></div></div><div style="left:224.5px;top:793.3px;width:17px;height:15.5px;background:#e8e8e8;border-top:1px solid #ffffff;border-left:1px solid #ffffff;border-bottom:1px solid #404040;border-right:1px solid #404040;"><div style="left:0px;top:0px;width:15px;height:13.5px;border-bottom:1px solid #848484;border-right:1px solid #848484;"></div></div><svg style="left:229.5px;top:799.05px;width:7px;height:4px" viewBox="0 0 7 4"><path d="M0 0H7L3.5 4Z" fill="#000"/></svg><span class="ts" style="left:56.5px;top:795.19px;font-size:12px;line-height:12px;">All Files (*.*)</span>
<svg style="left:251.5px;top:382.5px;width:5px;height:8px" viewBox="0 0 5 8"><path d="M.8 .8L4 4L.8 7.2" stroke="#000" stroke-width="1.1" fill="none"/></svg>
<svg style="left:251.5px;top:482.5px;width:5px;height:8px" viewBox="0 0 5 8"><path d="M.8 .8L4 4L.8 7.2" stroke="#000" stroke-width="1.1" fill="none"/></svg>
<div style="left:254.5px;top:392px;width:1px;height:90px;background-image:linear-gradient(180deg,#777 1px,transparent 1px);background-size:1px 2px;"></div>
<div style="left:259px;top:55.5px;width:88px;height:23px;background:#e8e8e8;border-top:1px solid #ffffff;border-left:1px solid #ffffff;border-right:1px solid #848484;border-radius:3px 3px 0 0;"></div><span class="ts" style="left:264.6px;top:59.84px;font-size:12px;line-height:12px;">Canvas_1</span>
<div style="left:327px;top:59px;width:14px;height:14px;background:#e8e8e8;border-top:1px solid #ffffff;border-left:1px solid #ffffff;border-bottom:1px solid #404040;border-right:1px solid #404040;border-radius:2px;"></div><svg style="left:329.5px;top:61.5px;width:9px;height:9px" viewBox="0 0 9 9"><path d="M1 1L8 8M8 1L1 8" stroke="#e00000" stroke-width="2" fill="none"/></svg>
<div style="left:347.5px;top:57.5px;width:72px;height:21px;background:#e8e8e8;border-top:1px solid #ffffff;border-left:1px solid #ffffff;border-right:1px solid #848484;border-radius:3px 3px 0 0;"></div><span class="ts" style="left:353.5px;top:61.34px;font-size:12px;line-height:12px;">Editor 1</span>
<div style="left:402.5px;top:60.5px;width:14px;height:14px;background:#e8e8e8;border-top:1px solid #ffffff;border-left:1px solid #ffffff;border-bottom:1px solid #404040;border-right:1px solid #404040;border-radius:2px;"></div><svg style="left:405px;top:63px;width:9px;height:9px" viewBox="0 0 9 9"><path d="M1 1L8 8M8 1L1 8" stroke="#b4b4b4" stroke-width="2" fill="none"/></svg>
<div style="left:347px;top:77.5px;width:567px;height:1px;background:#ffffff;"></div>
<div style="left:260px;top:78px;width:652px;height:633px;background:#fff;border-top:1px solid #848484;border-left:1px solid #848484;border-bottom:1px solid #ffffff;border-right:1px solid #ffffff;"></div>
<div style="left:913.2px;top:78px;width:1px;height:634px;background:#848484;"></div>
<svg style="left:363px;top:108.5px;width:518px;height:502.2px" viewBox="-2 -2 518 502.2" shape-rendering="crispEdges"><rect x="0" y="0" width="514" height="498.2" fill="none" stroke="#000" stroke-width="1"/><path d="M0 498.2v-15.5M0 0v15.5M10.28 498.2v-8M10.28 0v8M20.56 498.2v-8M20.56 0v8M30.84 498.2v-8M30.84 0v8M41.12 498.2v-8M41.12 0v8M51.4 498.2v-15.5M51.4 0v15.5M61.68 498.2v-8M61.68 0v8M71.96 498.2v-8M71.96 0v8M82.24 498.2v-8M82.24 0v8M92.52 498.2v-8M92.52 0v8M102.8 498.2v-15.5M102.8 0v15.5M113.08 498.2v-8M113.08 0v8M123.36 498.2v-8M123.36 0v8M133.64 498.2v-8M133.64 0v8M143.92 498.2v-8M143.92 0v8M154.2 498.2v-15.5M154.2 0v15.5M164.48 498.2v-8M164.48 0v8M174.76 498.2v-8M174.76 0v8M185.04 498.2v-8M185.04 0v8M195.32 498.2v-8M195.32 0v8M205.6 498.2v-15.5M205.6 0v15.5M215.88 498.2v-8M215.88 0v8M226.16 498.2v-8M226.16 0v8M236.44 498.2v-8M236.44 0v8M246.72 498.2v-8M246.72 0v8M257 498.2v-15.5M257 0v15.5M267.28 498.2v-8M267.28 0v8M277.56 498.2v-8M277.56 0v8M287.84 498.2v-8M287.84 0v8M298.12 498.2v-8M298.12 0v8M308.4 498.2v-15.5M308.4 0v15.5M318.68 498.2v-8M318.68 0v8M328.96 498.2v-8M328.96 0v8M339.24 498.2v-8M339.24 0v8M349.52 498.2v-8M349.52 0v8M359.8 498.2v-15.5M359.8 0v15.5M370.08 498.2v-8M370.08 0v8M380.36 498.2v-8M380.36 0v8M390.64 498.2v-8M390.64 0v8M400.92 498.2v-8M400.92 0v8M411.2 498.2v-15.5M411.2 0v15.5M421.48 498.2v-8M421.48 0v8M431.76 498.2v-8M431.76 0v8M442.04 498.2v-8M442.04 0v8M452.32 498.2v-8M452.32 0v8M462.6 498.2v-15.5M462.6 0v15.5M472.88 498.2v-8M472.88 0v8M483.16 498.2v-8M483.16 0v8M493.44 498.2v-8M493.44 0v8M503.72 498.2v-8M503.72 0v8M514 498.2v-15.5M514 0v15.5M0 0h15.5M514 0h-15.5M0 9.96h8M514 9.96h-8M0 19.93h8M514 19.93h-8M0 29.89h8M514 29.89h-8M0 39.86h8M514 39.86h-8M0 49.82h15.5M514 49.82h-15.5M0 59.78h8M514 59.78h-8M0 69.75h8M514 69.75h-8M0 79.71h8M514 79.71h-8M0 89.68h8M514 89.68h-8M0 99.64h15.5M514 99.64h-15.5M0 109.6h8M514 109.6h-8M0 119.57h8M514 119.57h-8M0 129.53h8M514 129.53h-8M0 139.5h8M514 139.5h-8M0 149.46h15.5M514 149.46h-15.5M0 159.42h8M514 159.42h-8M0 169.39h8M514 169.39h-8M0 179.35h8M514 179.35h-8M0 189.32h8M514 189.32h-8M0 199.28h15.5M514 199.28h-15.5M0 209.24h8M514 209.24h-8M0 219.21h8M514 219.21h-8M0 229.17h8M514 229.17h-8M0 239.14h8M514 239.14h-8M0 249.1h15.5M514 249.1h-15.5M0 259.06h8M514 259.06h-8M0 269.03h8M514 269.03h-8M0 278.99h8M514 278.99h-8M0 288.96h8M514 288.96h-8M0 298.92h15.5M514 298.92h-15.5M0 308.88h8M514 308.88h-8M0 318.85h8M514 318.85h-8M0 328.81h8M514 328.81h-8M0 338.78h8M514 338.78h-8M0 348.74h15.5M514 348.74h-15.5M0 358.7h8M514 358.7h-8M0 368.67h8M514 368.67h-8M0 378.63h8M514 378.63h-8M0 388.6h8M514 388.6h-8M0 398.56h15.5M514 398.56h-15.5M0 408.52h8M514 408.52h-8M0 418.49h8M514 418.49h-8M0 428.45h8M514 428.45h-8M0 438.42h8M514 438.42h-8M0 448.38h15.5M514 448.38h-15.5M0 458.34h8M514 458.34h-8M0 468.31h8M514 468.31h-8M0 478.27h8M514 478.27h-8M0 488.24h8M514 488.24h-8M0 498.2h15.5M514 498.2h-15.5" stroke="#000" stroke-width="1" fill="none"/></svg>
<span class="ts" style="left:363px;top:612.51px;font-size:28.1px;line-height:28.1px;transform:translateX(-50%);">−50</span>
<span class="ts" style="left:362.5px;top:596.11px;font-size:28.1px;line-height:28.1px;transform:translateX(-100%);">−50</span>
<span class="ts" style="left:414.4px;top:612.51px;font-size:28.1px;line-height:28.1px;transform:translateX(-50%);">−40</span>
<span class="ts" style="left:362.5px;top:546.29px;font-size:28.1px;line-height:28.1px;transform:translateX(-100%);">−40</span>
<span class="ts" style="left:465.8px;top:612.51px;font-size:28.1px;line-height:28.1px;transform:translateX(-50%);">−30</span>
<span class="ts" style="left:362.5px;top:496.47px;font-size:28.1px;line-height:28.1px;transform:translateX(-100%);">−30</span>
<span class="ts" style="left:517.2px;top:612.51px;font-size:28.1px;line-height:28.1px;transform:translateX(-50%);">−20</span>
<span class="ts" style="left:362.5px;top:446.65px;font-size:28.1px;line-height:28.1px;transform:translateX(-100%);">−20</span>
<span class="ts" style="left:568.6px;top:612.51px;font-size:28.1px;line-height:28.1px;transform:translateX(-50%);">−10</span>
<span class="ts" style="left:362.5px;top:396.83px;font-size:28.1px;line-height:28.1px;transform:translateX(-100%);">−10</span>
<span class="ts" style="left:622px;top:612.51px;font-size:28.1px;line-height:28.1px;transform:translateX(-50%);">0</span>
<span class="ts" style="left:362.5px;top:347.01px;font-size:28.1px;line-height:28.1px;transform:translateX(-100%);">0</span>
<span class="ts" style="left:673.4px;top:612.51px;font-size:28.1px;line-height:28.1px;transform:translateX(-50%);">10</span>
<span class="ts" style="left:362.5px;top:297.19px;font-size:28.1px;line-height:28.1px;transform:translateX(-100%);">10</span>
<span class="ts" style="left:724.8px;top:612.51px;font-size:28.1px;line-height:28.1px;transform:translateX(-50%);">20</span>
<span class="ts" style="left:362.5px;top:247.37px;font-size:28.1px;line-height:28.1px;transform:translateX(-100%);">20</span>
<span class="ts" style="left:776.2px;top:612.51px;font-size:28.1px;line-height:28.1px;transform:translateX(-50%);">30</span>
<span class="ts" style="left:362.5px;top:197.55px;font-size:28.1px;line-height:28.1px;transform:translateX(-100%);">30</span>
<span class="ts" style="left:827.6px;top:612.51px;font-size:28.1px;line-height:28.1px;transform:translateX(-50%);">40</span>
<span class="ts" style="left:362.5px;top:147.73px;font-size:28.1px;line-height:28.1px;transform:translateX(-100%);">40</span>
<span class="ts" style="left:879px;top:612.51px;font-size:28.1px;line-height:28.1px;transform:translateX(-50%);">50</span>
<span class="ts" style="left:362.5px;top:97.91px;font-size:28.1px;line-height:28.1px;transform:translateX(-100%);">50</span>
<svg style="left:881px;top:110.5px;width:30px;height:498.2px" viewBox="0 0 30 498.2" shape-rendering="crispEdges"><rect x="0" y="473.29" width="30" height="25.21" fill="#6e0aff"/><rect x="0" y="448.38" width="30" height="25.21" fill="#3c0af5"/><rect x="0" y="423.47" width="30" height="25.21" fill="#0a1eff"/><rect x="0" y="398.56" width="30" height="25.21" fill="#0a4cf0"/><rect x="0" y="373.65" width="30" height="25.21" fill="#0a8aff"/><rect x="0" y="348.74" width="30" height="25.21" fill="#00b8ff"/><rect x="0" y="323.83" width="30" height="25.21" fill="#00f0ff"/><rect x="0" y="298.92" width="30" height="25.21" fill="#00f5cf"/><rect x="0" y="274.01" width="30" height="25.21" fill="#00f59a"/><rect x="0" y="249.1" width="30" height="25.21" fill="#00f05a"/><rect x="0" y="224.19" width="30" height="25.21" fill="#00f52a"/><rect x="0" y="199.28" width="30" height="25.21" fill="#1ef514"/><rect x="0" y="174.37" width="30" height="25.21" fill="#6efa0a"/><rect x="0" y="149.46" width="30" height="25.21" fill="#9cf50e"/><rect x="0" y="124.55" width="30" height="25.21" fill="#e0ff10"/><rect x="0" y="99.64" width="30" height="25.21" fill="#ffe800"/><rect x="0" y="74.73" width="30" height="25.21" fill="#ffa800"/><rect x="0" y="49.82" width="30" height="25.21" fill="#ff7a0d"/><rect x="0" y="24.91" width="30" height="25.21" fill="#ff2b0d"/><rect x="0" y="0" width="30" height="25.21" fill="#ff0000"/><path d="M14 81.3H30" stroke="#000" stroke-width="1"/><path d="M14 164.8H30" stroke="#000" stroke-width="1"/><path d="M14 248.3H30" stroke="#000" stroke-width="1"/><path d="M14 331.8H30" stroke="#000" stroke-width="1"/><path d="M14 415.3H30" stroke="#000" stroke-width="1"/></svg>
<svg style="left:365px;top:110.5px;width:514px;height:498.2px" viewBox="0 0 514 498.2" shape-rendering="crispEdges"><rect x="400.92" y="129.53" width="5.24" height="5.08" fill="#6e0aff"/><rect x="292.98" y="134.51" width="5.24" height="5.08" fill="#6e0aff"/><rect x="349.52" y="134.51" width="5.24" height="5.08" fill="#6e0aff"/><rect x="385.5" y="134.51" width="5.24" height="5.08" fill="#6e0aff"/><rect x="406.06" y="134.51" width="5.24" height="5.08" fill="#6e0aff"/><rect x="334.1" y="139.5" width="5.24" height="5.08" fill="#6e0aff"/><rect x="339.24" y="139.5" width="5.24" height="5.08" fill="#6e0aff"/><rect x="344.38" y="139.5" width="5.24" height="5.08" fill="#6e0aff"/><rect x="400.92" y="139.5" width="5.24" height="5.08" fill="#6e0aff"/><rect x="318.68" y="144.48" width="5.24" height="5.08" fill="#6e0aff"/><rect x="323.82" y="144.48" width="5.24" height="5.08" fill="#6e0aff"/><rect x="349.52" y="144.48" width="5.24" height="5.08" fill="#6e0aff"/><rect x="385.5" y="144.48" width="5.24" height="5.08" fill="#6e0aff"/><rect x="318.68" y="149.46" width="5.24" height="5.08" fill="#3c0af5"/><rect x="323.82" y="149.46" width="5.24" height="5.08" fill="#0a1eff"/><rect x="334.1" y="149.46" width="5.24" height="5.08" fill="#6e0aff"/><rect x="380.36" y="149.46" width="5.24" height="5.08" fill="#6e0aff"/><rect x="385.5" y="149.46" width="5.24" height="5.08" fill="#6e0aff"/><rect x="400.92" y="149.46" width="5.24" height="5.08" fill="#3c0af5"/><rect x="262.14" y="154.44" width="5.24" height="5.08" fill="#6e0aff"/><rect x="272.42" y="154.44" width="5.24" height="5.08" fill="#3c0af5"/><rect x="313.54" y="154.44" width="5.24" height="5.08" fill="#6e0aff"/><rect x="318.68" y="154.44" width="5.24" height="5.08" fill="#0a1eff"/><rect x="328.96" y="154.44" width="5.24" height="5.08" fill="#3c0af5"/><rect x="334.1" y="154.44" width="5.24" height="5.08" fill="#6e0aff"/><rect x="339.24" y="154.44" width="5.24" height="5.08" fill="#6e0aff"/><rect x="344.38" y="154.44" width="5.24" height="5.08" fill="#6e0aff"/><rect x="364.94" y="154.44" width="5.24" height="5.08" fill="#6e0aff"/><rect x="370.08" y="154.44" width="5.24" height="5.08" fill="#6e0aff"/><rect x="375.22" y="154.44" width="5.24" height="5.08" fill="#6e0aff"/><rect x="308.4" y="159.42" width="5.24" height="5.08" fill="#00b8ff"/><rect x="313.54" y="159.42" width="5.24" height="5.08" fill="#00b8ff"/><rect x="318.68" y="159.42" width="5.24" height="5.08" fill="#6e0aff"/><rect x="323.82" y="159.42" width="5.24" height="5.08" fill="#3c0af5"/><rect x="328.96" y="159.42" width="5.24" height="5.08" fill="#0a8aff"/><rect x="334.1" y="159.42" width="5.24" height="5.08" fill="#6e0aff"/><rect x="339.24" y="159.42" width="5.24" height="5.08" fill="#6e0aff"/><rect x="344.38" y="159.42" width="5.24" height="5.08" fill="#6e0aff"/><rect x="354.66" y="159.42" width="5.24" height="5.08" fill="#6e0aff"/><rect x="364.94" y="159.42" width="5.24" height="5.08" fill="#6e0aff"/><rect x="395.78" y="159.42" width="5.24" height="5.08" fill="#6e0aff"/><rect x="251.86" y="164.41" width="5.24" height="5.08" fill="#3c0af5"/><rect x="287.84" y="164.41" width="5.24" height="5.08" fill="#6e0aff"/><rect x="303.26" y="164.41" width="5.24" height="5.08" fill="#00b8ff"/><rect x="308.4" y="164.41" width="5.24" height="5.08" fill="#00b8ff"/><rect x="313.54" y="164.41" width="5.24" height="5.08" fill="#3c0af5"/><rect x="318.68" y="164.41" width="5.24" height="5.08" fill="#0a1eff"/><rect x="323.82" y="164.41" width="5.24" height="5.08" fill="#00b8ff"/><rect x="328.96" y="164.41" width="5.24" height="5.08" fill="#6e0aff"/><rect x="334.1" y="164.41" width="5.24" height="5.08" fill="#6e0aff"/><rect x="339.24" y="164.41" width="5.24" height="5.08" fill="#6e0aff"/><rect x="344.38" y="164.41" width="5.24" height="5.08" fill="#6e0aff"/><rect x="349.52" y="164.41" width="5.24" height="5.08" fill="#00b8ff"/><rect x="359.8" y="164.41" width="5.24" height="5.08" fill="#6e0aff"/><rect x="385.5" y="164.41" width="5.24" height="5.08" fill="#6e0aff"/><rect x="287.84" y="169.39" width="5.24" height="5.08" fill="#6e0aff"/><rect x="298.12" y="169.39" width="5.24" height="5.08" fill="#00f0ff"/><rect x="303.26" y="169.39" width="5.24" height="5.08" fill="#00f59a"/><rect x="308.4" y="169.39" width="5.24" height="5.08" fill="#0a1eff"/><rect x="313.54" y="169.39" width="5.24" height="5.08" fill="#3c0af5"/><rect x="318.68" y="169.39" width="5.24" height="5.08" fill="#0a1eff"/><rect x="323.82" y="169.39" width="5.24" height="5.08" fill="#0a8aff"/><rect x="328.96" y="169.39" width="5.24" height="5.08" fill="#00f0ff"/><rect x="334.1" y="169.39" width="5.24" height="5.08" fill="#00f0ff"/><rect x="339.24" y="169.39" width="5.24" height="5.08" fill="#0a1eff"/><rect x="344.38" y="169.39" width="5.24" height="5.08" fill="#6e0aff"/><rect x="349.52" y="169.39" width="5.24" height="5.08" fill="#6e0aff"/><rect x="354.66" y="169.39" width="5.24" height="5.08" fill="#6e0aff"/><rect x="359.8" y="169.39" width="5.24" height="5.08" fill="#3c0af5"/><rect x="385.5" y="169.39" width="5.24" height="5.08" fill="#3c0af5"/><rect x="287.84" y="174.37" width="5.24" height="5.08" fill="#6e0aff"/><rect x="292.98" y="174.37" width="5.24" height="5.08" fill="#00f5cf"/><rect x="298.12" y="174.37" width="5.24" height="5.08" fill="#00f52a"/><rect x="303.26" y="174.37" width="5.24" height="5.08" fill="#0a1eff"/><rect x="308.4" y="174.37" width="5.24" height="5.08" fill="#00f5cf"/><rect x="313.54" y="174.37" width="5.24" height="5.08" fill="#3c0af5"/><rect x="318.68" y="174.37" width="5.24" height="5.08" fill="#0a1eff"/><rect x="323.82" y="174.37" width="5.24" height="5.08" fill="#3c0af5"/><rect x="328.96" y="174.37" width="5.24" height="5.08" fill="#0a8aff"/><rect x="334.1" y="174.37" width="5.24" height="5.08" fill="#6e0aff"/><rect x="339.24" y="174.37" width="5.24" height="5.08" fill="#6e0aff"/><rect x="370.08" y="174.37" width="5.24" height="5.08" fill="#0a1eff"/><rect x="375.22" y="174.37" width="5.24" height="5.08" fill="#6e0aff"/><rect x="226.16" y="179.35" width="5.24" height="5.08" fill="#6e0aff"/><rect x="277.56" y="179.35" width="5.24" height="5.08" fill="#6e0aff"/><rect x="282.7" y="179.35" width="5.24" height="5.08" fill="#0a1eff"/><rect x="287.84" y="179.35" width="5.24" height="5.08" fill="#0a4cf0"/><rect x="292.98" y="179.35" width="5.24" height="5.08" fill="#9cf50e"/><rect x="298.12" y="179.35" width="5.24" height="5.08" fill="#00f0ff"/><rect x="303.26" y="179.35" width="5.24" height="5.08" fill="#3c0af5"/><rect x="308.4" y="179.35" width="5.24" height="5.08" fill="#3c0af5"/><rect x="313.54" y="179.35" width="5.24" height="5.08" fill="#00f52a"/><rect x="318.68" y="179.35" width="5.24" height="5.08" fill="#00f0ff"/><rect x="323.82" y="179.35" width="5.24" height="5.08" fill="#3c0af5"/><rect x="328.96" y="179.35" width="5.24" height="5.08" fill="#6e0aff"/><rect x="334.1" y="179.35" width="5.24" height="5.08" fill="#0a4cf0"/><rect x="339.24" y="179.35" width="5.24" height="5.08" fill="#6e0aff"/><rect x="344.38" y="179.35" width="5.24" height="5.08" fill="#3c0af5"/><rect x="375.22" y="179.35" width="5.24" height="5.08" fill="#6e0aff"/><rect x="236.44" y="184.33" width="5.24" height="5.08" fill="#6e0aff"/><rect x="277.56" y="184.33" width="5.24" height="5.08" fill="#0a1eff"/><rect x="282.7" y="184.33" width="5.24" height="5.08" fill="#0a1eff"/><rect x="287.84" y="184.33" width="5.24" height="5.08" fill="#0a8aff"/><rect x="292.98" y="184.33" width="5.24" height="5.08" fill="#00f0ff"/><rect x="298.12" y="184.33" width="5.24" height="5.08" fill="#0a1eff"/><rect x="303.26" y="184.33" width="5.24" height="5.08" fill="#0a8aff"/><rect x="308.4" y="184.33" width="5.24" height="5.08" fill="#3c0af5"/><rect x="313.54" y="184.33" width="5.24" height="5.08" fill="#00f5cf"/><rect x="318.68" y="184.33" width="5.24" height="5.08" fill="#6e0aff"/><rect x="323.82" y="184.33" width="5.24" height="5.08" fill="#3c0af5"/><rect x="328.96" y="184.33" width="5.24" height="5.08" fill="#3c0af5"/><rect x="334.1" y="184.33" width="5.24" height="5.08" fill="#6e0aff"/><rect x="272.42" y="189.32" width="5.24" height="5.08" fill="#6e0aff"/><rect x="277.56" y="189.32" width="5.24" height="5.08" fill="#3c0af5"/><rect x="282.7" y="189.32" width="5.24" height="5.08" fill="#00f0ff"/><rect x="287.84" y="189.32" width="5.24" height="5.08" fill="#00b8ff"/><rect x="292.98" y="189.32" width="5.24" height="5.08" fill="#00b8ff"/><rect x="298.12" y="189.32" width="5.24" height="5.08" fill="#00f0ff"/><rect x="303.26" y="189.32" width="5.24" height="5.08" fill="#0a8aff"/><rect x="308.4" y="189.32" width="5.24" height="5.08" fill="#00f5cf"/><rect x="313.54" y="189.32" width="5.24" height="5.08" fill="#00f0ff"/><rect x="318.68" y="189.32" width="5.24" height="5.08" fill="#6e0aff"/><rect x="323.82" y="189.32" width="5.24" height="5.08" fill="#6e0aff"/><rect x="328.96" y="189.32" width="5.24" height="5.08" fill="#3c0af5"/><rect x="334.1" y="189.32" width="5.24" height="5.08" fill="#6e0aff"/><rect x="339.24" y="189.32" width="5.24" height="5.08" fill="#6e0aff"/><rect x="344.38" y="189.32" width="5.24" height="5.08" fill="#6e0aff"/><rect x="359.8" y="189.32" width="5.24" height="5.08" fill="#6e0aff"/><rect x="221.02" y="194.3" width="5.24" height="5.08" fill="#6e0aff"/><rect x="251.86" y="194.3" width="5.24" height="5.08" fill="#6e0aff"/><rect x="267.28" y="194.3" width="5.24" height="5.08" fill="#3c0af5"/><rect x="272.42" y="194.3" width="5.24" height="5.08" fill="#6e0aff"/><rect x="277.56" y="194.3" width="5.24" height="5.08" fill="#00b8ff"/><rect x="282.7" y="194.3" width="5.24" height="5.08" fill="#6efa0a"/><rect x="287.84" y="194.3" width="5.24" height="5.08" fill="#0a4cf0"/><rect x="292.98" y="194.3" width="5.24" height="5.08" fill="#00f05a"/><rect x="298.12" y="194.3" width="5.24" height="5.08" fill="#0a4cf0"/><rect x="303.26" y="194.3" width="5.24" height="5.08" fill="#0a4cf0"/><rect x="308.4" y="194.3" width="5.24" height="5.08" fill="#0a4cf0"/><rect x="313.54" y="194.3" width="5.24" height="5.08" fill="#0a1eff"/><rect x="318.68" y="194.3" width="5.24" height="5.08" fill="#6e0aff"/><rect x="323.82" y="194.3" width="5.24" height="5.08" fill="#0a4cf0"/><rect x="334.1" y="194.3" width="5.24" height="5.08" fill="#6e0aff"/><rect x="339.24" y="194.3" width="5.24" height="5.08" fill="#6e0aff"/><rect x="215.88" y="199.28" width="5.24" height="5.08" fill="#6e0aff"/><rect x="262.14" y="199.28" width="5.24" height="5.08" fill="#6e0aff"/><rect x="267.28" y="199.28" width="5.24" height="5.08" fill="#3c0af5"/><rect x="272.42" y="199.28" width="5.24" height="5.08" fill="#0a4cf0"/><rect x="277.56" y="199.28" width="5.24" height="5.08" fill="#0a4cf0"/><rect x="282.7" y="199.28" width="5.24" height="5.08" fill="#0a4cf0"/><rect x="287.84" y="199.28" width="5.24" height="5.08" fill="#00f5cf"/><rect x="292.98" y="199.28" width="5.24" height="5.08" fill="#0a8aff"/><rect x="298.12" y="199.28" width="5.24" height="5.08" fill="#00f5cf"/><rect x="303.26" y="199.28" width="5.24" height="5.08" fill="#0a1eff"/><rect x="308.4" y="199.28" width="5.24" height="5.08" fill="#6e0aff"/><rect x="313.54" y="199.28" width="5.24" height="5.08" fill="#3c0af5"/><rect x="328.96" y="199.28" width="5.24" height="5.08" fill="#0a1eff"/><rect x="354.66" y="199.28" width="5.24" height="5.08" fill="#6e0aff"/><rect x="190.18" y="204.26" width="5.24" height="5.08" fill="#6e0aff"/><rect x="205.6" y="204.26" width="5.24" height="5.08" fill="#6e0aff"/><rect x="210.74" y="204.26" width="5.24" height="5.08" fill="#6e0aff"/><rect x="221.02" y="204.26" width="5.24" height="5.08" fill="#6e0aff"/><rect x="226.16" y="204.26" width="5.24" height="5.08" fill="#3c0af5"/><rect x="231.3" y="204.26" width="5.24" height="5.08" fill="#0a8aff"/><rect x="236.44" y="204.26" width="5.24" height="5.08" fill="#0a4cf0"/><rect x="241.58" y="204.26" width="5.24" height="5.08" fill="#3c0af5"/><rect x="246.72" y="204.26" width="5.24" height="5.08" fill="#0a1eff"/><rect x="251.86" y="204.26" width="5.24" height="5.08" fill="#0a8aff"/><rect x="257" y="204.26" width="5.24" height="5.08" fill="#0a1eff"/><rect x="262.14" y="204.26" width="5.24" height="5.08" fill="#6e0aff"/><rect x="267.28" y="204.26" width="5.24" height="5.08" fill="#00f5cf"/><rect x="272.42" y="204.26" width="5.24" height="5.08" fill="#3c0af5"/><rect x="277.56" y="204.26" width="5.24" height="5.08" fill="#0a1eff"/><rect x="282.7" y="204.26" width="5.24" height="5.08" fill="#0a8aff"/><rect x="287.84" y="204.26" width="5.24" height="5.08" fill="#00f0ff"/><rect x="292.98" y="204.26" width="5.24" height="5.08" fill="#ff2b0d"/><rect x="298.12" y="204.26" width="5.24" height="5.08" fill="#0a4cf0"/><rect x="303.26" y="204.26" width="5.24" height="5.08" fill="#0a8aff"/><rect x="308.4" y="204.26" width="5.24" height="5.08" fill="#0a1eff"/><rect x="313.54" y="204.26" width="5.24" height="5.08" fill="#6e0aff"/><rect x="328.96" y="204.26" width="5.24" height="5.08" fill="#3c0af5"/><rect x="179.9" y="209.24" width="5.24" height="5.08" fill="#6e0aff"/><rect x="190.18" y="209.24" width="5.24" height="5.08" fill="#6e0aff"/><rect x="195.32" y="209.24" width="5.24" height="5.08" fill="#6e0aff"/><rect x="200.46" y="209.24" width="5.24" height="5.08" fill="#6e0aff"/><rect x="205.6" y="209.24" width="5.24" height="5.08" fill="#0a8aff"/><rect x="210.74" y="209.24" width="5.24" height="5.08" fill="#3c0af5"/><rect x="215.88" y="209.24" width="5.24" height="5.08" fill="#6e0aff"/><rect x="221.02" y="209.24" width="5.24" height="5.08" fill="#6e0aff"/><rect x="226.16" y="209.24" width="5.24" height="5.08" fill="#00f0ff"/><rect x="231.3" y="209.24" width="5.24" height="5.08" fill="#0a8aff"/><rect x="236.44" y="209.24" width="5.24" height="5.08" fill="#00f52a"/><rect x="241.58" y="209.24" width="5.24" height="5.08" fill="#0a1eff"/><rect x="246.72" y="209.24" width="5.24" height="5.08" fill="#6e0aff"/><rect x="251.86" y="209.24" width="5.24" height="5.08" fill="#6e0aff"/><rect x="257" y="209.24" width="5.24" height="5.08" fill="#3c0af5"/><rect x="262.14" y="209.24" width="5.24" height="5.08" fill="#3c0af5"/><rect x="267.28" y="209.24" width="5.24" height="5.08" fill="#0a4cf0"/><rect x="272.42" y="209.24" width="5.24" height="5.08" fill="#3c0af5"/><rect x="277.56" y="209.24" width="5.24" height="5.08" fill="#3c0af5"/><rect x="282.7" y="209.24" width="5.24" height="5.08" fill="#00f5cf"/><rect x="287.84" y="209.24" width="5.24" height="5.08" fill="#00f05a"/><rect x="292.98" y="209.24" width="5.24" height="5.08" fill="#0a1eff"/><rect x="298.12" y="209.24" width="5.24" height="5.08" fill="#00b8ff"/><rect x="303.26" y="209.24" width="5.24" height="5.08" fill="#0a8aff"/><rect x="308.4" y="209.24" width="5.24" height="5.08" fill="#0a4cf0"/><rect x="313.54" y="209.24" width="5.24" height="5.08" fill="#6e0aff"/><rect x="334.1" y="209.24" width="5.24" height="5.08" fill="#6e0aff"/><rect x="339.24" y="209.24" width="5.24" height="5.08" fill="#6e0aff"/><rect x="174.76" y="214.23" width="5.24" height="5.08" fill="#6e0aff"/><rect x="179.9" y="214.23" width="5.24" height="5.08" fill="#6e0aff"/><rect x="185.04" y="214.23" width="5.24" height="5.08" fill="#6e0aff"/><rect x="190.18" y="214.23" width="5.24" height="5.08" fill="#3c0af5"/><rect x="200.46" y="214.23" width="5.24" height="5.08" fill="#3c0af5"/><rect x="205.6" y="214.23" width="5.24" height="5.08" fill="#3c0af5"/><rect x="210.74" y="214.23" width="5.24" height="5.08" fill="#6e0aff"/><rect x="215.88" y="214.23" width="5.24" height="5.08" fill="#6e0aff"/><rect x="221.02" y="214.23" width="5.24" height="5.08" fill="#0a1eff"/><rect x="226.16" y="214.23" width="5.24" height="5.08" fill="#00b8ff"/><rect x="231.3" y="214.23" width="5.24" height="5.08" fill="#ffe800"/><rect x="236.44" y="214.23" width="5.24" height="5.08" fill="#0a4cf0"/><rect x="241.58" y="214.23" width="5.24" height="5.08" fill="#00f59a"/><rect x="246.72" y="214.23" width="5.24" height="5.08" fill="#0a1eff"/><rect x="251.86" y="214.23" width="5.24" height="5.08" fill="#6e0aff"/><rect x="257" y="214.23" width="5.24" height="5.08" fill="#0a4cf0"/><rect x="262.14" y="214.23" width="5.24" height="5.08" fill="#6e0aff"/><rect x="267.28" y="214.23" width="5.24" height="5.08" fill="#3c0af5"/><rect x="272.42" y="214.23" width="5.24" height="5.08" fill="#0a8aff"/><rect x="277.56" y="214.23" width="5.24" height="5.08" fill="#0a1eff"/><rect x="282.7" y="214.23" width="5.24" height="5.08" fill="#0a1eff"/><rect x="287.84" y="214.23" width="5.24" height="5.08" fill="#00b8ff"/><rect x="292.98" y="214.23" width="5.24" height="5.08" fill="#0a1eff"/><rect x="298.12" y="214.23" width="5.24" height="5.08" fill="#0a8aff"/><rect x="303.26" y="214.23" width="5.24" height="5.08" fill="#0a4cf0"/><rect x="308.4" y="214.23" width="5.24" height="5.08" fill="#6e0aff"/><rect x="313.54" y="214.23" width="5.24" height="5.08" fill="#6e0aff"/><rect x="318.68" y="214.23" width="5.24" height="5.08" fill="#6e0aff"/><rect x="328.96" y="214.23" width="5.24" height="5.08" fill="#6e0aff"/><rect x="190.18" y="219.21" width="5.24" height="5.08" fill="#6e0aff"/><rect x="195.32" y="219.21" width="5.24" height="5.08" fill="#6e0aff"/><rect x="205.6" y="219.21" width="5.24" height="5.08" fill="#3c0af5"/><rect x="210.74" y="219.21" width="5.24" height="5.08" fill="#3c0af5"/><rect x="215.88" y="219.21" width="5.24" height="5.08" fill="#3c0af5"/><rect x="221.02" y="219.21" width="5.24" height="5.08" fill="#00b8ff"/><rect x="226.16" y="219.21" width="5.24" height="5.08" fill="#00f59a"/><rect x="231.3" y="219.21" width="5.24" height="5.08" fill="#0a8aff"/><rect x="236.44" y="219.21" width="5.24" height="5.08" fill="#00b8ff"/><rect x="241.58" y="219.21" width="5.24" height="5.08" fill="#00f0ff"/><rect x="251.86" y="219.21" width="5.24" height="5.08" fill="#00f5cf"/><rect x="257" y="219.21" width="5.24" height="5.08" fill="#0a8aff"/><rect x="262.14" y="219.21" width="5.24" height="5.08" fill="#0a8aff"/><rect x="267.28" y="219.21" width="5.24" height="5.08" fill="#3c0af5"/><rect x="272.42" y="219.21" width="5.24" height="5.08" fill="#0a1eff"/><rect x="277.56" y="219.21" width="5.24" height="5.08" fill="#6e0aff"/><rect x="282.7" y="219.21" width="5.24" height="5.08" fill="#0a1eff"/><rect x="287.84" y="219.21" width="5.24" height="5.08" fill="#6e0aff"/><rect x="292.98" y="219.21" width="5.24" height="5.08" fill="#6e0aff"/><rect x="313.54" y="219.21" width="5.24" height="5.08" fill="#6e0aff"/><rect x="318.68" y="219.21" width="5.24" height="5.08" fill="#6e0aff"/><rect x="323.82" y="219.21" width="5.24" height="5.08" fill="#6e0aff"/><rect x="334.1" y="219.21" width="5.24" height="5.08" fill="#3c0af5"/><rect x="159.34" y="224.19" width="5.24" height="5.08" fill="#6e0aff"/><rect x="169.62" y="224.19" width="5.24" height="5.08" fill="#6e0aff"/><rect x="179.9" y="224.19" width="5.24" height="5.08" fill="#6e0aff"/><rect x="190.18" y="224.19" width="5.24" height="5.08" fill="#0a8aff"/><rect x="200.46" y="224.19" width="5.24" height="5.08" fill="#3c0af5"/><rect x="210.74" y="224.19" width="5.24" height="5.08" fill="#6e0aff"/><rect x="215.88" y="224.19" width="5.24" height="5.08" fill="#0a1eff"/><rect x="221.02" y="224.19" width="5.24" height="5.08" fill="#00f05a"/><rect x="226.16" y="224.19" width="5.24" height="5.08" fill="#6e0aff"/><rect x="231.3" y="224.19" width="5.24" height="5.08" fill="#00f0ff"/><rect x="236.44" y="224.19" width="5.24" height="5.08" fill="#0a8aff"/><rect x="241.58" y="224.19" width="5.24" height="5.08" fill="#0a1eff"/><rect x="246.72" y="224.19" width="5.24" height="5.08" fill="#6e0aff"/><rect x="251.86" y="224.19" width="5.24" height="5.08" fill="#00f0ff"/><rect x="257" y="224.19" width="5.24" height="5.08" fill="#6e0aff"/><rect x="262.14" y="224.19" width="5.24" height="5.08" fill="#0a1eff"/><rect x="267.28" y="224.19" width="5.24" height="5.08" fill="#6e0aff"/><rect x="272.42" y="224.19" width="5.24" height="5.08" fill="#6e0aff"/><rect x="277.56" y="224.19" width="5.24" height="5.08" fill="#0a8aff"/><rect x="282.7" y="224.19" width="5.24" height="5.08" fill="#00b8ff"/><rect x="287.84" y="224.19" width="5.24" height="5.08" fill="#3c0af5"/><rect x="292.98" y="224.19" width="5.24" height="5.08" fill="#6e0aff"/><rect x="298.12" y="224.19" width="5.24" height="5.08" fill="#6e0aff"/><rect x="154.2" y="229.17" width="5.24" height="5.08" fill="#6e0aff"/><rect x="159.34" y="229.17" width="5.24" height="5.08" fill="#3c0af5"/><rect x="164.48" y="229.17" width="5.24" height="5.08" fill="#6e0aff"/><rect x="185.04" y="229.17" width="5.24" height="5.08" fill="#6e0aff"/><rect x="205.6" y="229.17" width="5.24" height="5.08" fill="#6e0aff"/><rect x="210.74" y="229.17" width="5.24" height="5.08" fill="#00b8ff"/><rect x="215.88" y="229.17" width="5.24" height="5.08" fill="#0a1eff"/><rect x="221.02" y="229.17" width="5.24" height="5.08" fill="#6e0aff"/><rect x="226.16" y="229.17" width="5.24" height="5.08" fill="#6e0aff"/><rect x="231.3" y="229.17" width="5.24" height="5.08" fill="#6efa0a"/><rect x="236.44" y="229.17" width="5.24" height="5.08" fill="#0a8aff"/><rect x="241.58" y="229.17" width="5.24" height="5.08" fill="#6e0aff"/><rect x="246.72" y="229.17" width="5.24" height="5.08" fill="#6e0aff"/><rect x="251.86" y="229.17" width="5.24" height="5.08" fill="#0a1eff"/><rect x="257" y="229.17" width="5.24" height="5.08" fill="#6e0aff"/><rect x="262.14" y="229.17" width="5.24" height="5.08" fill="#0a4cf0"/><rect x="267.28" y="229.17" width="5.24" height="5.08" fill="#0a1eff"/><rect x="272.42" y="229.17" width="5.24" height="5.08" fill="#0a1eff"/><rect x="277.56" y="229.17" width="5.24" height="5.08" fill="#3c0af5"/><rect x="282.7" y="229.17" width="5.24" height="5.08" fill="#00b8ff"/><rect x="287.84" y="229.17" width="5.24" height="5.08" fill="#3c0af5"/><rect x="292.98" y="229.17" width="5.24" height="5.08" fill="#0a8aff"/><rect x="298.12" y="229.17" width="5.24" height="5.08" fill="#00f0ff"/><rect x="303.26" y="229.17" width="5.24" height="5.08" fill="#0a8aff"/><rect x="308.4" y="229.17" width="5.24" height="5.08" fill="#3c0af5"/><rect x="159.34" y="234.15" width="5.24" height="5.08" fill="#3c0af5"/><rect x="164.48" y="234.15" width="5.24" height="5.08" fill="#3c0af5"/><rect x="179.9" y="234.15" width="5.24" height="5.08" fill="#3c0af5"/><rect x="185.04" y="234.15" width="5.24" height="5.08" fill="#3c0af5"/><rect x="200.46" y="234.15" width="5.24" height="5.08" fill="#6e0aff"/><rect x="205.6" y="234.15" width="5.24" height="5.08" fill="#6e0aff"/><rect x="210.74" y="234.15" width="5.24" height="5.08" fill="#3c0af5"/><rect x="215.88" y="234.15" width="5.24" height="5.08" fill="#6e0aff"/><rect x="221.02" y="234.15" width="5.24" height="5.08" fill="#00f5cf"/><rect x="226.16" y="234.15" width="5.24" height="5.08" fill="#00f0ff"/><rect x="231.3" y="234.15" width="5.24" height="5.08" fill="#0a8aff"/><rect x="236.44" y="234.15" width="5.24" height="5.08" fill="#3c0af5"/><rect x="241.58" y="234.15" width="5.24" height="5.08" fill="#3c0af5"/><rect x="257" y="234.15" width="5.24" height="5.08" fill="#3c0af5"/><rect x="262.14" y="234.15" width="5.24" height="5.08" fill="#3c0af5"/><rect x="267.28" y="234.15" width="5.24" height="5.08" fill="#0a1eff"/><rect x="272.42" y="234.15" width="5.24" height="5.08" fill="#6e0aff"/><rect x="277.56" y="234.15" width="5.24" height="5.08" fill="#0a8aff"/><rect x="282.7" y="234.15" width="5.24" height="5.08" fill="#00b8ff"/><rect x="287.84" y="234.15" width="5.24" height="5.08" fill="#0a4cf0"/><rect x="292.98" y="234.15" width="5.24" height="5.08" fill="#0a1eff"/><rect x="298.12" y="234.15" width="5.24" height="5.08" fill="#00f5cf"/><rect x="303.26" y="234.15" width="5.24" height="5.08" fill="#3c0af5"/><rect x="308.4" y="234.15" width="5.24" height="5.08" fill="#6e0aff"/><rect x="313.54" y="234.15" width="5.24" height="5.08" fill="#6e0aff"/><rect x="159.34" y="239.14" width="5.24" height="5.08" fill="#3c0af5"/><rect x="169.62" y="239.14" width="5.24" height="5.08" fill="#6e0aff"/><rect x="174.76" y="239.14" width="5.24" height="5.08" fill="#6e0aff"/><rect x="205.6" y="239.14" width="5.24" height="5.08" fill="#0a1eff"/><rect x="210.74" y="239.14" width="5.24" height="5.08" fill="#00f52a"/><rect x="215.88" y="239.14" width="5.24" height="5.08" fill="#00f0ff"/><rect x="221.02" y="239.14" width="5.24" height="5.08" fill="#00b8ff"/><rect x="226.16" y="239.14" width="5.24" height="5.08" fill="#0a4cf0"/><rect x="241.58" y="239.14" width="5.24" height="5.08" fill="#0a1eff"/><rect x="246.72" y="239.14" width="5.24" height="5.08" fill="#0a1eff"/><rect x="251.86" y="239.14" width="5.24" height="5.08" fill="#3c0af5"/><rect x="257" y="239.14" width="5.24" height="5.08" fill="#3c0af5"/><rect x="262.14" y="239.14" width="5.24" height="5.08" fill="#0a8aff"/><rect x="267.28" y="239.14" width="5.24" height="5.08" fill="#00f5cf"/><rect x="272.42" y="239.14" width="5.24" height="5.08" fill="#0a1eff"/><rect x="277.56" y="239.14" width="5.24" height="5.08" fill="#1ef514"/><rect x="282.7" y="239.14" width="5.24" height="5.08" fill="#00f59a"/><rect x="287.84" y="239.14" width="5.24" height="5.08" fill="#00f05a"/><rect x="292.98" y="239.14" width="5.24" height="5.08" fill="#00f05a"/><rect x="298.12" y="239.14" width="5.24" height="5.08" fill="#6e0aff"/><rect x="303.26" y="239.14" width="5.24" height="5.08" fill="#0a1eff"/><rect x="308.4" y="239.14" width="5.24" height="5.08" fill="#6e0aff"/><rect x="313.54" y="239.14" width="5.24" height="5.08" fill="#6e0aff"/><rect x="143.92" y="244.12" width="5.24" height="5.08" fill="#3c0af5"/><rect x="149.06" y="244.12" width="5.24" height="5.08" fill="#6e0aff"/><rect x="159.34" y="244.12" width="5.24" height="5.08" fill="#3c0af5"/><rect x="179.9" y="244.12" width="5.24" height="5.08" fill="#6e0aff"/><rect x="185.04" y="244.12" width="5.24" height="5.08" fill="#6e0aff"/><rect x="190.18" y="244.12" width="5.24" height="5.08" fill="#6e0aff"/><rect x="195.32" y="244.12" width="5.24" height="5.08" fill="#6e0aff"/><rect x="200.46" y="244.12" width="5.24" height="5.08" fill="#00f5cf"/><rect x="205.6" y="244.12" width="5.24" height="5.08" fill="#00f0ff"/><rect x="210.74" y="244.12" width="5.24" height="5.08" fill="#0a1eff"/><rect x="215.88" y="244.12" width="5.24" height="5.08" fill="#3c0af5"/><rect x="221.02" y="244.12" width="5.24" height="5.08" fill="#0a8aff"/><rect x="226.16" y="244.12" width="5.24" height="5.08" fill="#ff0000"/><rect x="236.44" y="244.12" width="5.24" height="5.08" fill="#6e0aff"/><rect x="241.58" y="244.12" width="5.24" height="5.08" fill="#3c0af5"/><rect x="246.72" y="244.12" width="5.24" height="5.08" fill="#6e0aff"/><rect x="251.86" y="244.12" width="5.24" height="5.08" fill="#6e0aff"/><rect x="257" y="244.12" width="5.24" height="5.08" fill="#3c0af5"/><rect x="262.14" y="244.12" width="5.24" height="5.08" fill="#6e0aff"/><rect x="267.28" y="244.12" width="5.24" height="5.08" fill="#6e0aff"/><rect x="272.42" y="244.12" width="5.24" height="5.08" fill="#3c0af5"/><rect x="277.56" y="244.12" width="5.24" height="5.08" fill="#0a4cf0"/><rect x="282.7" y="244.12" width="5.24" height="5.08" fill="#3c0af5"/><rect x="287.84" y="244.12" width="5.24" height="5.08" fill="#3c0af5"/><rect x="298.12" y="244.12" width="5.24" height="5.08" fill="#6e0aff"/><rect x="303.26" y="244.12" width="5.24" height="5.08" fill="#0a1eff"/><rect x="308.4" y="244.12" width="5.24" height="5.08" fill="#3c0af5"/><rect x="159.34" y="249.1" width="5.24" height="5.08" fill="#e0ff10"/><rect x="164.48" y="249.1" width="5.24" height="5.08" fill="#6e0aff"/><rect x="174.76" y="249.1" width="5.24" height="5.08" fill="#6e0aff"/><rect x="190.18" y="249.1" width="5.24" height="5.08" fill="#0a4cf0"/><rect x="195.32" y="249.1" width="5.24" height="5.08" fill="#00f0ff"/><rect x="200.46" y="249.1" width="5.24" height="5.08" fill="#6e0aff"/><rect x="205.6" y="249.1" width="5.24" height="5.08" fill="#0a1eff"/><rect x="210.74" y="249.1" width="5.24" height="5.08" fill="#6e0aff"/><rect x="215.88" y="249.1" width="5.24" height="5.08" fill="#3c0af5"/><rect x="221.02" y="249.1" width="5.24" height="5.08" fill="#3c0af5"/><rect x="226.16" y="249.1" width="5.24" height="5.08" fill="#00f5cf"/><rect x="231.3" y="249.1" width="5.24" height="5.08" fill="#6e0aff"/><rect x="236.44" y="249.1" width="5.24" height="5.08" fill="#6e0aff"/><rect x="246.72" y="249.1" width="5.24" height="5.08" fill="#6e0aff"/><rect x="251.86" y="249.1" width="5.24" height="5.08" fill="#6e0aff"/><rect x="257" y="249.1" width="5.24" height="5.08" fill="#3c0af5"/><rect x="262.14" y="249.1" width="5.24" height="5.08" fill="#6e0aff"/><rect x="267.28" y="249.1" width="5.24" height="5.08" fill="#6e0aff"/><rect x="272.42" y="249.1" width="5.24" height="5.08" fill="#6e0aff"/><rect x="277.56" y="249.1" width="5.24" height="5.08" fill="#0a1eff"/><rect x="282.7" y="249.1" width="5.24" height="5.08" fill="#3c0af5"/><rect x="292.98" y="249.1" width="5.24" height="5.08" fill="#3c0af5"/><rect x="298.12" y="249.1" width="5.24" height="5.08" fill="#6e0aff"/><rect x="159.34" y="254.08" width="5.24" height="5.08" fill="#00f05a"/><rect x="164.48" y="254.08" width="5.24" height="5.08" fill="#6e0aff"/><rect x="174.76" y="254.08" width="5.24" height="5.08" fill="#6e0aff"/><rect x="179.9" y="254.08" width="5.24" height="5.08" fill="#00b8ff"/><rect x="185.04" y="254.08" width="5.24" height="5.08" fill="#00b8ff"/><rect x="190.18" y="254.08" width="5.24" height="5.08" fill="#0a1eff"/><rect x="200.46" y="254.08" width="5.24" height="5.08" fill="#6e0aff"/><rect x="205.6" y="254.08" width="5.24" height="5.08" fill="#6e0aff"/><rect x="210.74" y="254.08" width="5.24" height="5.08" fill="#0a8aff"/><rect x="215.88" y="254.08" width="5.24" height="5.08" fill="#6e0aff"/><rect x="221.02" y="254.08" width="5.24" height="5.08" fill="#0a1eff"/><rect x="226.16" y="254.08" width="5.24" height="5.08" fill="#0a8aff"/><rect x="231.3" y="254.08" width="5.24" height="5.08" fill="#6e0aff"/><rect x="251.86" y="254.08" width="5.24" height="5.08" fill="#3c0af5"/><rect x="257" y="254.08" width="5.24" height="5.08" fill="#6e0aff"/><rect x="267.28" y="254.08" width="5.24" height="5.08" fill="#6e0aff"/><rect x="272.42" y="254.08" width="5.24" height="5.08" fill="#0a4cf0"/><rect x="277.56" y="254.08" width="5.24" height="5.08" fill="#3c0af5"/><rect x="282.7" y="254.08" width="5.24" height="5.08" fill="#6e0aff"/><rect x="287.84" y="254.08" width="5.24" height="5.08" fill="#3c0af5"/><rect x="298.12" y="254.08" width="5.24" height="5.08" fill="#6e0aff"/><rect x="128.5" y="259.06" width="5.24" height="5.08" fill="#3c0af5"/><rect x="159.34" y="259.06" width="5.24" height="5.08" fill="#00f59a"/><rect x="164.48" y="259.06" width="5.24" height="5.08" fill="#6e0aff"/><rect x="169.62" y="259.06" width="5.24" height="5.08" fill="#0a8aff"/><rect x="174.76" y="259.06" width="5.24" height="5.08" fill="#0a8aff"/><rect x="179.9" y="259.06" width="5.24" height="5.08" fill="#6e0aff"/><rect x="185.04" y="259.06" width="5.24" height="5.08" fill="#6e0aff"/><rect x="200.46" y="259.06" width="5.24" height="5.08" fill="#0a4cf0"/><rect x="205.6" y="259.06" width="5.24" height="5.08" fill="#00f05a"/><rect x="210.74" y="259.06" width="5.24" height="5.08" fill="#6e0aff"/><rect x="215.88" y="259.06" width="5.24" height="5.08" fill="#0a4cf0"/><rect x="221.02" y="259.06" width="5.24" height="5.08" fill="#3c0af5"/><rect x="226.16" y="259.06" width="5.24" height="5.08" fill="#0a1eff"/><rect x="231.3" y="259.06" width="5.24" height="5.08" fill="#6e0aff"/><rect x="236.44" y="259.06" width="5.24" height="5.08" fill="#6e0aff"/><rect x="257" y="259.06" width="5.24" height="5.08" fill="#6e0aff"/><rect x="267.28" y="259.06" width="5.24" height="5.08" fill="#6e0aff"/><rect x="277.56" y="259.06" width="5.24" height="5.08" fill="#6e0aff"/><rect x="282.7" y="259.06" width="5.24" height="5.08" fill="#3c0af5"/><rect x="287.84" y="259.06" width="5.24" height="5.08" fill="#6e0aff"/><rect x="154.2" y="264.05" width="5.24" height="5.08" fill="#6e0aff"/><rect x="159.34" y="264.05" width="5.24" height="5.08" fill="#ffe800"/><rect x="164.48" y="264.05" width="5.24" height="5.08" fill="#00b8ff"/><rect x="169.62" y="264.05" width="5.24" height="5.08" fill="#0a1eff"/><rect x="174.76" y="264.05" width="5.24" height="5.08" fill="#6e0aff"/><rect x="179.9" y="264.05" width="5.24" height="5.08" fill="#6e0aff"/><rect x="190.18" y="264.05" width="5.24" height="5.08" fill="#6e0aff"/><rect x="195.32" y="264.05" width="5.24" height="5.08" fill="#0a1eff"/><rect x="200.46" y="264.05" width="5.24" height="5.08" fill="#0a4cf0"/><rect x="205.6" y="264.05" width="5.24" height="5.08" fill="#3c0af5"/><rect x="210.74" y="264.05" width="5.24" height="5.08" fill="#0a1eff"/><rect x="215.88" y="264.05" width="5.24" height="5.08" fill="#6e0aff"/><rect x="221.02" y="264.05" width="5.24" height="5.08" fill="#0a1eff"/><rect x="226.16" y="264.05" width="5.24" height="5.08" fill="#3c0af5"/><rect x="231.3" y="264.05" width="5.24" height="5.08" fill="#6e0aff"/><rect x="128.5" y="269.03" width="5.24" height="5.08" fill="#6e0aff"/><rect x="149.06" y="269.03" width="5.24" height="5.08" fill="#0a4cf0"/><rect x="154.2" y="269.03" width="5.24" height="5.08" fill="#0a1eff"/><rect x="159.34" y="269.03" width="5.24" height="5.08" fill="#e0ff10"/><rect x="179.9" y="269.03" width="5.24" height="5.08" fill="#6e0aff"/><rect x="190.18" y="269.03" width="5.24" height="5.08" fill="#00f0ff"/><rect x="195.32" y="269.03" width="5.24" height="5.08" fill="#00b8ff"/><rect x="200.46" y="269.03" width="5.24" height="5.08" fill="#3c0af5"/><rect x="205.6" y="269.03" width="5.24" height="5.08" fill="#0a1eff"/><rect x="210.74" y="269.03" width="5.24" height="5.08" fill="#6e0aff"/><rect x="215.88" y="269.03" width="5.24" height="5.08" fill="#3c0af5"/><rect x="226.16" y="269.03" width="5.24" height="5.08" fill="#3c0af5"/><rect x="257" y="269.03" width="5.24" height="5.08" fill="#6e0aff"/><rect x="267.28" y="269.03" width="5.24" height="5.08" fill="#6e0aff"/><rect x="277.56" y="269.03" width="5.24" height="5.08" fill="#3c0af5"/><rect x="113.08" y="274.01" width="5.24" height="5.08" fill="#6e0aff"/><rect x="138.78" y="274.01" width="5.24" height="5.08" fill="#3c0af5"/><rect x="143.92" y="274.01" width="5.24" height="5.08" fill="#6e0aff"/><rect x="149.06" y="274.01" width="5.24" height="5.08" fill="#6e0aff"/><rect x="159.34" y="274.01" width="5.24" height="5.08" fill="#ffe800"/><rect x="164.48" y="274.01" width="5.24" height="5.08" fill="#6e0aff"/><rect x="174.76" y="274.01" width="5.24" height="5.08" fill="#6e0aff"/><rect x="179.9" y="274.01" width="5.24" height="5.08" fill="#6e0aff"/><rect x="185.04" y="274.01" width="5.24" height="5.08" fill="#6e0aff"/><rect x="190.18" y="274.01" width="5.24" height="5.08" fill="#00f05a"/><rect x="195.32" y="274.01" width="5.24" height="5.08" fill="#3c0af5"/><rect x="200.46" y="274.01" width="5.24" height="5.08" fill="#3c0af5"/><rect x="205.6" y="274.01" width="5.24" height="5.08" fill="#6e0aff"/><rect x="226.16" y="274.01" width="5.24" height="5.08" fill="#6e0aff"/><rect x="231.3" y="274.01" width="5.24" height="5.08" fill="#0a1eff"/><rect x="241.58" y="274.01" width="5.24" height="5.08" fill="#6e0aff"/><rect x="257" y="274.01" width="5.24" height="5.08" fill="#6e0aff"/><rect x="267.28" y="274.01" width="5.24" height="5.08" fill="#6e0aff"/><rect x="128.5" y="278.99" width="5.24" height="5.08" fill="#6e0aff"/><rect x="133.64" y="278.99" width="5.24" height="5.08" fill="#6e0aff"/><rect x="159.34" y="278.99" width="5.24" height="5.08" fill="#00f5cf"/><rect x="185.04" y="278.99" width="5.24" height="5.08" fill="#0a1eff"/><rect x="190.18" y="278.99" width="5.24" height="5.08" fill="#0a1eff"/><rect x="195.32" y="278.99" width="5.24" height="5.08" fill="#0a4cf0"/><rect x="200.46" y="278.99" width="5.24" height="5.08" fill="#6e0aff"/><rect x="210.74" y="278.99" width="5.24" height="5.08" fill="#6e0aff"/><rect x="221.02" y="278.99" width="5.24" height="5.08" fill="#6e0aff"/><rect x="246.72" y="278.99" width="5.24" height="5.08" fill="#6e0aff"/><rect x="123.36" y="283.97" width="5.24" height="5.08" fill="#0a1eff"/><rect x="154.2" y="283.97" width="5.24" height="5.08" fill="#6e0aff"/><rect x="159.34" y="283.97" width="5.24" height="5.08" fill="#0a4cf0"/><rect x="174.76" y="283.97" width="5.24" height="5.08" fill="#6e0aff"/><rect x="185.04" y="283.97" width="5.24" height="5.08" fill="#6e0aff"/><rect x="190.18" y="283.97" width="5.24" height="5.08" fill="#6e0aff"/><rect x="221.02" y="283.97" width="5.24" height="5.08" fill="#3c0af5"/><rect x="262.14" y="283.97" width="5.24" height="5.08" fill="#6e0aff"/><rect x="113.08" y="288.96" width="5.24" height="5.08" fill="#6e0aff"/><rect x="164.48" y="288.96" width="5.24" height="5.08" fill="#6e0aff"/><rect x="174.76" y="288.96" width="5.24" height="5.08" fill="#6e0aff"/><rect x="179.9" y="288.96" width="5.24" height="5.08" fill="#0a4cf0"/><rect x="190.18" y="288.96" width="5.24" height="5.08" fill="#6e0aff"/><rect x="195.32" y="288.96" width="5.24" height="5.08" fill="#6e0aff"/><rect x="200.46" y="288.96" width="5.24" height="5.08" fill="#6e0aff"/><rect x="149.06" y="293.94" width="5.24" height="5.08" fill="#0a1eff"/><rect x="169.62" y="293.94" width="5.24" height="5.08" fill="#6e0aff"/><rect x="174.76" y="293.94" width="5.24" height="5.08" fill="#6e0aff"/><rect x="179.9" y="293.94" width="5.24" height="5.08" fill="#6e0aff"/><rect x="185.04" y="293.94" width="5.24" height="5.08" fill="#3c0af5"/><rect x="169.62" y="298.92" width="5.24" height="5.08" fill="#6e0aff"/><rect x="174.76" y="298.92" width="5.24" height="5.08" fill="#6e0aff"/><rect x="200.46" y="298.92" width="5.24" height="5.08" fill="#6e0aff"/><rect x="205.6" y="298.92" width="5.24" height="5.08" fill="#3c0af5"/><rect x="210.74" y="298.92" width="5.24" height="5.08" fill="#6e0aff"/><rect x="231.3" y="298.92" width="5.24" height="5.08" fill="#0a1eff"/><rect x="251.86" y="298.92" width="5.24" height="5.08" fill="#6e0aff"/></svg>
<div style="left:540px;top:716.5px;width:93px;height:1px;background-image:linear-gradient(90deg,#777 1px,transparent 1px);background-size:2px 1px;"></div>
<svg style="left:532.5px;top:714px;width:8px;height:5px" viewBox="0 0 8 5"><path d="M.8 .8L4 4L7.2 .8" stroke="#000" stroke-width="1.1" fill="none"/></svg>
<svg style="left:632.5px;top:714px;width:8px;height:5px" viewBox="0 0 8 5"><path d="M.8 .8L4 4L7.2 .8" stroke="#000" stroke-width="1.1" fill="none"/></svg>
<div style="left:259px;top:722px;width:67.5px;height:21px;background:#e8e8e8;border-top:1px solid #ffffff;border-left:1px solid #ffffff;border-right:1px solid #848484;border-radius:3px 3px 0 0;"></div><span class="ts" style="left:264.3px;top:726.14px;font-size:12px;line-height:12px;">Command</span>
<div style="left:326px;top:742.5px;width:588px;height:1px;background:#ffffff;"></div>
<div style="left:259px;top:742.5px;width:1px;height:72px;background:#ffffff;"></div>
<div style="left:913.5px;top:743px;width:1px;height:72px;background:#848484;"></div>
<span class="ts" style="left:268px;top:753.14px;font-size:12px;line-height:12px;">Command (local):</span>
<div style="left:374.5px;top:749px;width:529px;height:20.5px;background:#fff;border-top:1px solid #848484;border-left:1px solid #848484;border-bottom:1px solid #ffffff;border-right:1px solid #ffffff;"><div style="left:0px;top:0px;width:527px;height:18.5px;border-top:1px solid #8e8e8e;border-left:1px solid #8e8e8e;border-bottom:1px solid #e8e8e8;border-right:1px solid #e8e8e8;"></div></div><div style="left:884.5px;top:751px;width:17px;height:16.5px;background:#e8e8e8;border-top:1px solid #ffffff;border-left:1px solid #ffffff;border-bottom:1px solid #404040;border-right:1px solid #404040;"><div style="left:0px;top:0px;width:15px;height:14.5px;border-bottom:1px solid #848484;border-right:1px solid #848484;"></div></div><svg style="left:889.5px;top:757.25px;width:7px;height:4px" viewBox="0 0 7 4"><path d="M0 0H7L3.5 4Z" fill="#000"/></svg>
<div style="left:263.5px;top:778px;width:644.5px;height:34px;background:#fff;border-top:1px solid #848484;border-left:1px solid #848484;border-bottom:1px solid #ffffff;border-right:1px solid #ffffff;"></div>
<div style="left:259px;top:815.5px;width:655px;height:1px;background:#848484;"></div>
<div style="left:2px;top:819px;width:914px;height:17.5px;border-top:1px solid #848484;border-left:1px solid #848484;border-bottom:1px solid #ffffff;border-right:1px solid #ffffff;"></div>
<div style="left:301px;top:820px;width:3px;height:15.5px;border-left:1px solid #ffffff;border-right:1px solid #848484;"></div>
<div style="left:391.5px;top:820px;width:3px;height:15.5px;border-left:1px solid #ffffff;border-right:1px solid #848484;"></div>
<div style="left:483px;top:820px;width:3px;height:15.5px;border-left:1px solid #ffffff;border-right:1px solid #848484;"></div>
<svg style="left:902px;top:824px;width:13px;height:13px" viewBox="0 0 13 13"><path d="M12 1L1 12M12 5L5 12M12 9L9 12" stroke="#848484" stroke-width="1.2"/><path d="M13 2L2 13M13 6L6 13M13 10L10 13" stroke="#fff" stroke-width="1"/></svg>
<!-- sec_right_bg -->
<div style="left:1600px;top:0px;width:1680px;height:1050px;background:linear-gradient(115deg,#2c2f5c 0,#252850 18%,#1b1b3c 40%,#14122a 62%,#0d0c18 100%);"></div>
<div style="left:2396px;top:0px;width:80px;height:30px;background:linear-gradient(100deg,#485079 0,#4c5782 60%,#525d88 100%);"></div>
<div style="left:3128px;top:0px;width:152px;height:36px;background:linear-gradient(100deg,#626c9c 0,#5a6391 35%,#4c547f 62%,#3c4169 85%,#2c304e 100%);"></div>
<div style="left:2968px;top:498px;width:312px;height:378px;background:linear-gradient(125deg,rgba(9,8,18,0) 35%,rgba(9,8,18,.8) 100%),linear-gradient(215deg,transparent 33%,rgba(74,76,140,.32) 39%,transparent 44%,transparent 44.5%,rgba(62,64,124,.24) 47.5%,transparent 52%,transparent 58%,rgba(52,52,104,.16) 63%,transparent 70%),linear-gradient(180deg,#23244e 0,#1a193c 30%,#14122b 62%,#110f20 100%);"></div>
<div style="left:2471px;top:0px;width:659px;height:300px;background:#edeceb;border:1px solid #a9a7a4;border-radius:6px 6px 0 0;"></div>
<div style="left:2477px;top:7px;width:15.5px;height:14.5px;background:linear-gradient(180deg,#55554f,#2e2e2c);border:1px solid #1e1e1e;border-radius:2px;"></div>
<div style="left:2479px;top:9px;width:11.5px;height:9px;background:#15171b;border:1px solid #5a5a5a;"></div>
<span class="tm" style="left:2480px;top:11.4px;font-size:6px;line-height:6px;color:#d8d8d8;font-weight:700;">&gt;_</span>
<svg style="left:2763.5px;top:7.5px;width:13px;height:13px" viewBox="0 0 12 12"><path d="M1 3.5H5 M3 1.5V3.5 M1.5 5.5L2 8 M4.5 5.5L4 8 M0.8 9.5H5.2 M6.5 2V4.5H11V2 M8.7 1.5V4.5 M6 6H11.5 M6.5 7.5V11.5 M6.5 7.5H11V11.5 M8 7.5V11 M9.5 7.5V11" fill="none" stroke="#7a7a7a" stroke-width="0.92" stroke-linecap="round" stroke-linejoin="round"/></svg><svg style="left:2777px;top:7.5px;width:13px;height:13px" viewBox="0 0 12 12"><path d="M1.5 3.5H10.5 M2.5 6H9.5 M6 1.5V11.5 M6 6.5Q4 9.5 1.5 10.5 M6 6.5Q8 9.5 10.5 10.5" fill="none" stroke="#7a7a7a" stroke-width="0.92" stroke-linecap="round" stroke-linejoin="round"/></svg>
<div style="left:3065px;top:16px;width:9px;height:2.4px;background:#5e5e5e;border-radius:.5px;"></div><div style="left:3087.8px;top:9.8px;width:8.4px;height:8.4px;border:1.4px solid #5e5e5e;border-top-width:2.4px;"></div><svg style="left:3110px;top:9px;width:10px;height:10px" viewBox="0 0 10 10"><path d="M1.3 1.3L8.7 8.7M8.7 1.3L1.3 8.7" stroke="#5e5e5e" stroke-width="2.2" fill="none"/></svg>
<div style="left:2396px;top:874px;width:900px;height:180px;background:#e8e8e8;"></div>
<div style="left:2396px;top:874px;width:900px;height:34px;background:linear-gradient(180deg,#efeeec,#e9e8e6);border-top:1px solid #bdbbb8;"></div>
<span class="ts" style="left:2970.5px;top:881.13px;font-size:13.2px;line-height:13.2px;color:#7b7b7b;font-weight:700;transform-origin:0 0;transform:scaleX(1.17);-webkit-text-stroke:.3px #7b7b7b;">r v0</span>
<div style="left:2396px;top:907px;width:900px;height:2px;background:#d2d2d2;"></div>
<svg style="left:2398px;top:917px;width:30px;height:10px" viewBox="0 0 30 10"><path d="M0 2L3 6M13 6L16.5 2L20 6" stroke="#b01010" stroke-width="1.3" fill="none"/></svg>
<div style="left:2436px;top:917px;width:16px;height:9px;background:#fff;"></div>
<span class="ts" style="left:2437px;top:916.38px;font-size:9px;line-height:9px;color:#333;">/@:</span>
<div style="left:2462px;top:910px;width:13px;height:14px;border:2px solid #111;border-radius:50%;"></div>
<div style="left:2491px;top:908px;width:15px;height:16.5px;background:#3a68b0;border-radius:50%;border:1px solid #27477c;"></div>
<div style="left:2497px;top:921px;width:3px;height:2.5px;background:#fff;"></div>
<div style="left:2521.5px;top:915px;width:29px;height:16px;background:#fff;"></div>
<span class="ts" style="left:2530px;top:915.69px;font-size:11px;line-height:11px;color:#222;">10</span>
<div style="left:2550px;top:916px;width:14px;height:15.5px;background:#e8e8e8;border-top:1px solid #ffffff;border-left:1px solid #ffffff;border-bottom:1px solid #404040;border-right:1px solid #404040;"><div style="left:0px;top:0px;width:12px;height:13.5px;border-bottom:1px solid #848484;border-right:1px solid #848484;"></div></div>
<svg style="left:2553.3px;top:922.5px;width:7px;height:4.5px" viewBox="0 0 7 4.5"><path d="M0 0H7L3.5 4.5Z" fill="#000"/></svg>
<div style="left:2390px;top:949px;width:178px;height:110px;background:#fff;border-top:1px solid #848484;border-left:1px solid #848484;border-bottom:1px solid #ffffff;border-right:1px solid #ffffff;"></div>
<span class="ts" style="left:2397.3px;top:955.37px;font-size:10.2px;line-height:10.2px;">derInfo</span>
<span class="ts" style="left:2397.3px;top:973.27px;font-size:10.2px;line-height:10.2px;">basTLU</span>
<span class="ts" style="left:2397.8px;top:991.17px;font-size:10.2px;line-height:10.2px;">Detail</span>
<span class="ts" style="left:2399.6px;top:1009.07px;font-size:10.2px;line-height:10.2px;">HSIO2</span>
<span class="ts" style="left:2399.6px;top:1026.97px;font-size:10.2px;line-height:10.2px;">SVX4</span>
<span class="ts" style="left:2395.3px;top:1044.87px;font-size:10.2px;line-height:10.2px;">Map</span>
<div style="left:2394px;top:949px;width:3.5px;height:110px;background:#e8e8e8;"></div>
<div style="left:2552.5px;top:951px;width:14px;height:100px;background:#e8e8e8;"></div>
<svg style="left:2555.5px;top:955.5px;width:8px;height:5px" viewBox="0 0 8 5"><path d="M0 5H8L4.0 0Z" fill="#000"/></svg>
<div style="left:2552.5px;top:966.5px;width:15px;height:90px;background:#e8e8e8;border-top:1px solid #ffffff;border-left:1px solid #ffffff;border-bottom:1px solid #404040;border-right:1px solid #404040;"><div style="left:0px;top:0px;width:13px;height:88px;border-bottom:1px solid #848484;border-right:1px solid #848484;"></div></div>
<div style="left:2582.5px;top:909px;width:2px;height:141px;border-left:1px solid #848484;border-right:1px solid #404040;"></div>
<div style="left:2584.5px;top:909px;width:700px;height:141px;background:#fff;"></div>
<div style="left:2736.5px;top:923px;width:560px;height:2px;background:#000;"></div>
<div style="left:2736.5px;top:923px;width:2px;height:130px;background:#000;"></div>
<div style="left:2741px;top:924px;width:1px;height:7px;background:#000;"></div><div style="left:2758px;top:924px;width:1px;height:4px;background:#000;"></div><div style="left:2774px;top:924px;width:1px;height:4px;background:#000;"></div><div style="left:2791px;top:924px;width:1px;height:4px;background:#000;"></div><div style="left:2808px;top:924px;width:1px;height:4px;background:#000;"></div><div style="left:2824px;top:924px;width:1px;height:7px;background:#000;"></div><div style="left:2841px;top:924px;width:1px;height:4px;background:#000;"></div><div style="left:2857px;top:924px;width:1px;height:4px;background:#000;"></div><div style="left:2874px;top:924px;width:1px;height:4px;background:#000;"></div><div style="left:2891px;top:924px;width:1px;height:4px;background:#000;"></div><div style="left:2907px;top:924px;width:1px;height:7px;background:#000;"></div><div style="left:2924px;top:924px;width:1px;height:4px;background:#000;"></div><div style="left:2940px;top:924px;width:1px;height:4px;background:#000;"></div><div style="left:2957px;top:924px;width:1px;height:4px;background:#000;"></div><div style="left:2973px;top:924px;width:1px;height:4px;background:#000;"></div><div style="left:2990px;top:924px;width:1px;height:7px;background:#000;"></div><div style="left:3007px;top:924px;width:1px;height:4px;background:#000;"></div><div style="left:3023px;top:924px;width:1px;height:4px;background:#000;"></div><div style="left:3040px;top:924px;width:1px;height:4px;background:#000;"></div><div style="left:3056px;top:924px;width:1px;height:4px;background:#000;"></div><div style="left:3073px;top:924px;width:1px;height:7px;background:#000;"></div><div style="left:3089px;top:924px;width:1px;height:4px;background:#000;"></div><div style="left:3106px;top:924px;width:1px;height:4px;background:#000;"></div><div style="left:3123px;top:924px;width:1px;height:4px;background:#000;"></div><div style="left:3139px;top:924px;width:1px;height:4px;background:#000;"></div><div style="left:3156px;top:924px;width:1px;height:7px;background:#000;"></div><div style="left:3172px;top:924px;width:1px;height:4px;background:#000;"></div><div style="left:3189px;top:924px;width:1px;height:4px;background:#000;"></div><div style="left:3206px;top:924px;width:1px;height:4px;background:#000;"></div><div style="left:3222px;top:924px;width:1px;height:4px;background:#000;"></div><div style="left:3239px;top:924px;width:1px;height:7px;background:#000;"></div><div style="left:3255px;top:924px;width:1px;height:4px;background:#000;"></div><div style="left:3272px;top:924px;width:1px;height:4px;background:#000;"></div><div style="left:3288px;top:924px;width:1px;height:4px;background:#000;"></div><div style="left:3305px;top:924px;width:1px;height:4px;background:#000;"></div><div style="left:3322px;top:924px;width:1px;height:7px;background:#000;"></div><div style="left:3338px;top:924px;width:1px;height:4px;background:#000;"></div><div style="left:3355px;top:924px;width:1px;height:4px;background:#000;"></div><div style="left:3371px;top:924px;width:1px;height:4px;background:#000;"></div><div style="left:3388px;top:924px;width:1px;height:4px;background:#000;"></div><div style="left:3404px;top:924px;width:1px;height:7px;background:#000;"></div><div style="left:3421px;top:924px;width:1px;height:4px;background:#000;"></div><div style="left:3438px;top:924px;width:1px;height:4px;background:#000;"></div><div style="left:3454px;top:924px;width:1px;height:4px;background:#000;"></div><div style="left:3471px;top:924px;width:1px;height:4px;background:#000;"></div><div style="left:3487px;top:924px;width:1px;height:7px;background:#000;"></div><div style="left:3504px;top:924px;width:1px;height:4px;background:#000;"></div><div style="left:3521px;top:924px;width:1px;height:4px;background:#000;"></div><div style="left:3537px;top:924px;width:1px;height:4px;background:#000;"></div><div style="left:3554px;top:924px;width:1px;height:4px;background:#000;"></div><div style="left:2737.5px;top:928px;width:11.5px;height:1px;background:#000;"></div><div style="left:2737.5px;top:936px;width:11.5px;height:1px;background:#000;"></div><div style="left:2737.5px;top:943px;width:11.5px;height:1px;background:#000;"></div><div style="left:2737.5px;top:951px;width:23px;height:1px;background:#000;"></div><div style="left:2737.5px;top:959px;width:11.5px;height:1px;background:#000;"></div><div style="left:2737.5px;top:966px;width:11.5px;height:1px;background:#000;"></div><div style="left:2737.5px;top:974px;width:11.5px;height:1px;background:#000;"></div><div style="left:2737.5px;top:981px;width:11.5px;height:1px;background:#000;"></div><div style="left:2737.5px;top:989px;width:23px;height:1px;background:#000;"></div><div style="left:2737.5px;top:996px;width:11.5px;height:1px;background:#000;"></div><div style="left:2737.5px;top:1004px;width:11.5px;height:1px;background:#000;"></div><div style="left:2737.5px;top:1012px;width:11.5px;height:1px;background:#000;"></div><div style="left:2737.5px;top:1019px;width:11.5px;height:1px;background:#000;"></div><div style="left:2737.5px;top:1027px;width:23px;height:1px;background:#000;"></div><div style="left:2737.5px;top:1034px;width:11.5px;height:1px;background:#000;"></div><div style="left:2737.5px;top:1042px;width:11.5px;height:1px;background:#000;"></div>
<span class="ts" style="left:2731.3px;top:944.5px;font-size:14.3px;line-height:14.3px;transform:translateX(-100%);">600</span>
<span class="ts" style="left:2731.3px;top:982.4px;font-size:14.3px;line-height:14.3px;transform:translateX(-100%);">500</span>
<span class="ts" style="left:2731.3px;top:1020.3px;font-size:14.3px;line-height:14.3px;transform:translateX(-100%);">400</span>
<svg style="left:0;top:0;width:3280px;height:1050px" viewBox="0 0 3280 1050" shape-rendering="crispEdges"><g fill="#08f53c"><rect x="2812" y="954.5" width="8" height="1"/><rect x="2853" y="950.8" width="8" height="1"/><rect x="2820" y="964" width="16" height="1"/><rect x="2820" y="965.5" width="16" height="1"/><rect x="2828" y="962.5" width="8" height="1"/><rect x="2860" y="973" width="10" height="1"/><rect x="2861" y="982" width="14" height="1"/><rect x="2870" y="983" width="16" height="1"/><rect x="2886" y="985" width="8" height="1"/><rect x="2886" y="991" width="8" height="1"/><rect x="2894" y="993" width="9" height="1"/><rect x="2952" y="997" width="9" height="1"/><rect x="2952" y="999" width="9" height="1"/><rect x="2961" y="1002" width="8" height="1"/><rect x="2997.38" y="1022" width="12" height="1"/><rect x="2997.18" y="1023" width="8" height="1"/><rect x="2898.32" y="1022" width="12" height="1"/><rect x="3063.06" y="1012" width="8" height="1"/><rect x="2995.24" y="1012" width="8" height="1"/><rect x="3029.32" y="1027" width="8" height="1"/><rect x="3050.31" y="1018" width="12" height="1"/><rect x="3071.95" y="1023" width="8" height="1"/><rect x="3060.56" y="1022" width="8" height="1"/><rect x="2852.03" y="1013" width="8" height="1"/><rect x="3051.86" y="1020" width="9" height="1"/><rect x="2993" y="1013" width="16" height="1"/><rect x="2916.45" y="1015" width="12" height="1"/><rect x="2831.7" y="1010" width="12" height="1"/><rect x="3072.28" y="1018" width="16" height="1"/><rect x="3198.41" y="1016" width="9" height="1"/><rect x="2946.65" y="1013" width="16" height="1"/><rect x="2936.94" y="1010" width="16" height="1"/><rect x="3113.53" y="1018" width="8" height="1"/><rect x="3143.24" y="1018" width="8" height="1"/><rect x="3184.48" y="1025" width="8" height="1"/><rect x="2909" y="1007" width="12" height="1"/><rect x="2968.92" y="1027" width="12" height="1"/><rect x="2985.32" y="1023" width="8" height="1"/><rect x="3118.05" y="1015" width="9" height="1"/><rect x="2862.24" y="1017" width="8" height="1"/><rect x="3186.71" y="1016" width="8" height="1"/><rect x="2921.16" y="1010" width="8" height="1"/><rect x="2852.16" y="1020" width="8" height="1"/><rect x="3082.37" y="1013" width="12" height="1"/><rect x="3018.28" y="1027" width="8" height="1"/><rect x="2985.12" y="1018" width="8" height="1"/><rect x="2976.1" y="1013" width="8" height="1"/><rect x="2929.82" y="1023" width="9" height="1"/><rect x="3199.22" y="1013" width="8" height="1"/><rect x="2899.3" y="1023" width="16" height="1"/><rect x="2867.12" y="1012" width="8" height="1"/><rect x="2993.37" y="1013" width="16" height="1"/><rect x="2951.71" y="1015" width="12" height="1"/><rect x="2857.16" y="1010" width="8" height="1"/><rect x="3045.61" y="1013" width="8" height="1"/><rect x="3052.48" y="1017" width="16" height="1"/><rect x="2997.69" y="1023" width="12" height="1"/><rect x="3137.97" y="1018" width="12" height="1"/><rect x="2897.65" y="1012" width="9" height="1"/><rect x="3166.12" y="1023" width="8" height="1"/><rect x="3093.19" y="1032" width="17" height="1"/><rect x="3074.75" y="1038" width="10" height="1"/><rect x="2947.3" y="1031" width="8" height="1"/><rect x="2990.93" y="1035" width="8" height="2"/><rect x="2868.35" y="1049" width="16" height="2"/><rect x="2885.85" y="1032" width="17" height="1"/><rect x="2805.67" y="1040" width="16" height="1"/><rect x="2879.51" y="1033" width="17" height="1"/><rect x="2778.19" y="1038" width="10" height="1"/><rect x="2774.02" y="1032" width="9" height="1"/><rect x="2999.88" y="1032" width="8" height="1"/><rect x="2811.44" y="1040" width="9" height="1"/><rect x="3028.14" y="1029" width="10" height="1"/><rect x="3081.47" y="1029" width="8" height="1"/><rect x="2976.47" y="1046" width="9" height="1"/><rect x="2810.57" y="1031" width="8" height="2"/><rect x="3007.13" y="1046" width="8" height="1"/><rect x="3125.77" y="1036" width="9" height="1"/><rect x="3073.87" y="1031" width="10" height="1"/><rect x="3159.47" y="1043" width="8" height="2"/><rect x="2927" y="1029" width="16" height="1"/><rect x="2783.5" y="1044" width="8" height="1"/><rect x="3167.3" y="1046" width="9" height="2"/><rect x="3193.44" y="1046" width="16" height="2"/><rect x="2956.45" y="1049" width="16" height="1"/><rect x="2993.97" y="1041" width="8" height="1"/><rect x="3033.62" y="1040" width="8" height="1"/><rect x="3204.55" y="1031" width="10" height="2"/><rect x="2867.8" y="1029" width="9" height="1"/><rect x="2813.75" y="1043" width="8" height="1"/><rect x="3106.81" y="1036" width="17" height="2"/><rect x="2984.19" y="1033" width="9" height="2"/><rect x="3064.63" y="1033" width="17" height="2"/><rect x="3130.78" y="1047" width="8" height="1"/><rect x="2929.52" y="1043" width="9" height="1"/><rect x="2810.36" y="1040" width="9" height="1"/><rect x="3086.38" y="1035" width="8" height="1"/><rect x="2961.31" y="1035" width="8" height="2"/><rect x="2928.62" y="1041" width="10" height="1"/><rect x="3088.81" y="1049" width="16" height="2"/><rect x="2898.77" y="1049" width="8" height="1"/><rect x="3163.96" y="1029" width="17" height="1"/><rect x="3018.88" y="1035" width="17" height="1"/><rect x="3052.67" y="1038" width="10" height="1"/><rect x="2756.87" y="1049" width="9" height="1"/><rect x="3119.04" y="1047" width="8" height="1"/><rect x="2959.31" y="1044" width="16" height="1"/><rect x="3205.06" y="1044" width="8" height="1"/><rect x="3140.44" y="1035" width="8" height="1"/><rect x="3107.42" y="1041" width="17" height="1"/><rect x="2830.97" y="1035" width="9" height="1"/><rect x="2933.89" y="1047" width="17" height="1"/><rect x="2786.86" y="1046" width="10" height="1"/><rect x="2961.24" y="1033" width="17" height="1"/><rect x="2925.87" y="1043" width="17" height="1"/><rect x="2967.58" y="1044" width="8" height="1"/><rect x="3091.53" y="1049" width="17" height="1"/><rect x="2847.38" y="1038" width="8" height="1"/><rect x="3002.74" y="1047" width="9" height="1"/><rect x="3181.8" y="1049" width="8" height="1"/><rect x="2987.27" y="1029" width="10" height="1"/><rect x="3009.14" y="1047" width="9" height="2"/><rect x="3186.48" y="1033" width="8" height="2"/><rect x="3128.93" y="1032" width="16" height="1"/><rect x="3074.56" y="1032" width="10" height="1"/><rect x="3224.92" y="1046" width="16" height="2"/><rect x="3198.96" y="1040" width="16" height="1"/><rect x="3108.76" y="1040" width="16" height="1"/><rect x="3143.96" y="1041" width="17" height="1"/><rect x="2995.94" y="1049" width="16" height="1"/><rect x="2894.61" y="1038" width="16" height="1"/><rect x="2891.14" y="1032" width="16" height="1"/><rect x="3020.03" y="1033" width="10" height="1"/><rect x="2986.52" y="1043" width="10" height="1"/><rect x="3003.39" y="1029" width="16" height="2"/><rect x="3006.12" y="1043" width="8" height="2"/><rect x="2789.75" y="1032" width="8" height="2"/><rect x="2943.61" y="1047" width="10" height="1"/><rect x="2863.21" y="1040" width="8" height="1"/><rect x="2953.17" y="1049" width="10" height="1"/><rect x="2797.13" y="1038" width="16" height="1"/><rect x="3189.13" y="1032" width="17" height="1"/><rect x="2762.1" y="1032" width="8" height="1"/><rect x="3074.78" y="1036" width="17" height="1"/><rect x="2862.34" y="1040" width="8" height="2"/><rect x="3095.83" y="1031" width="16" height="1"/><rect x="3089.49" y="1046" width="16" height="2"/><rect x="2756.16" y="1044" width="10" height="1"/><rect x="3003.33" y="1049" width="17" height="1"/><rect x="2999.22" y="1049" width="16" height="1"/><rect x="2856.68" y="1046" width="17" height="1"/><rect x="3178.29" y="1036" width="16" height="1"/><rect x="3172.51" y="1033" width="8" height="1"/><rect x="3171.02" y="1032" width="8" height="1"/><rect x="3093.76" y="1035" width="10" height="1"/><rect x="2868.26" y="1033" width="16" height="2"/><rect x="2875.31" y="1031" width="16" height="2"/><rect x="2853.04" y="1030" width="16" height="2"/><rect x="2846.24" y="1034" width="16" height="2"/><rect x="2884.35" y="1032" width="16" height="2"/><rect x="2847.5" y="1034" width="16" height="2"/><rect x="2881.25" y="1032" width="16" height="2"/><rect x="2872.68" y="1031" width="16" height="2"/><rect x="2892.18" y="1033" width="16" height="2"/><rect x="2846.9" y="1030" width="16" height="2"/></g></svg>
<div style="left:2590.5px;top:905px;width:299px;height:26px;background:#fff;border:2px solid #000;"></div>
<span class="ts" style="left:2599.5px;top:911.86px;font-size:15.05px;line-height:15.05px;font-weight:700;">DetDetail/HSIO2/FEI4tel1/hitmap_HSIO2</span>
<div style="left:1600px;top:0px;width:796px;height:1050px;background:#fff;border:1px solid #b4b2af;border-top-color:#c0beba;"></div>
<div style="left:1602px;top:27px;width:792.5px;height:1019px;background-color:#999999;background-image:conic-gradient(#666666 25%,#999999 0 50%,#666666 0 75%,#999999 0);background-size:30px 30px;"></div>
<div style="left:1600px;top:0px;width:796px;height:27px;background:linear-gradient(180deg,#f0efed,#ebeae8);border:1px solid #b4b2af;border-bottom:none;border-radius:6px 6px 0 0;"></div>
<div style="left:1607.8px;top:8px;width:14.4px;height:12px;background:linear-gradient(180deg,#f4f6f4,#e2e6e2);border:1px solid #8c8c8c;border-top:2.6px solid #3a6ab4;"></div>
<span class="ts" style="left:1794px;top:7.43px;font-size:13.2px;line-height:13.2px;color:#7b7b7b;font-weight:700;transform-origin:0 0;transform:scaleX(1.2246);-webkit-text-stroke:.3px #7b7b7b;">ImageMagick: 0301.pdf (localhost.localdomain)</span>
<div style="left:2330px;top:16px;width:9px;height:2.4px;background:#6f6f6f;border-radius:.5px;"></div><div style="left:2352.8px;top:9.8px;width:8.4px;height:8.4px;border:1.4px solid #6f6f6f;border-top-width:2.4px;"></div><svg style="left:2375px;top:9px;width:10px;height:10px" viewBox="0 0 10 10"><path d="M1.3 1.3L8.7 8.7M8.7 1.3L1.3 8.7" stroke="#6f6f6f" stroke-width="2.2" fill="none"/></svg>
<div style="left:1628px;top:226px;width:757px;height:820px;background:#fff;"></div>
<div style="left:1628px;top:225px;width:757px;height:1.5px;background:#000;"></div>
<div style="left:1628px;top:226px;width:1px;height:53px;background:#555;"></div>
<div style="left:1628px;top:278.5px;width:60px;height:1px;background:#999;"></div>
<span class="ts" style="left:1664.5px;top:237.88px;font-size:15.5px;line-height:15.5px;color:#0000ee;font-weight:700;">F</span>
<span class="ts" style="left:1664.5px;top:263.38px;font-size:15.5px;line-height:15.5px;color:#0000ee;font-weight:700;">M</span>
<div style="left:1652.5px;top:400px;width:20px;height:50px;"><span class="ts" style="left:2px;top:46px;font-size:19.5px;line-height:19.5px;transform-origin:0 0;transform:rotate(-90deg);">Row</span></div>
<span class="ts" style="left:1660px;top:426.29px;font-size:20.8px;line-height:20.8px;">300</span>
<span class="ts" style="left:1659px;top:513.39px;font-size:20.8px;line-height:20.8px;">200</span>
<span class="ts" style="left:1659px;top:599.79px;font-size:20.8px;line-height:20.8px;">100</span>
<span class="ts" style="left:1659px;top:773.29px;font-size:20.8px;line-height:20.8px;">100</span>
<span class="ts" style="left:1659px;top:860.99px;font-size:20.8px;line-height:20.8px;">200</span>
<span class="ts" style="left:1659px;top:947.12px;font-size:22.3px;line-height:22.3px;">300</span>
<div style="left:1703px;top:919px;width:2px;height:68.5px;background:#000;"></div>
<div style="left:1703px;top:985.7px;width:569px;height:2px;background:#000;"></div>
<div style="left:2270.5px;top:975px;width:1.3px;height:12px;background:#000;"></div>
<div style="left:1704px;top:920px;width:4.5px;height:2px;background:#111;"></div><div style="left:1704px;top:921px;width:8.5px;height:1px;background:#222;"></div><div style="left:1704px;top:924px;width:4.5px;height:2px;background:#111;"></div><div style="left:1704px;top:928px;width:4.5px;height:2px;background:#111;"></div><div style="left:1704px;top:929px;width:8.5px;height:1px;background:#222;"></div><div style="left:1704px;top:932px;width:4.5px;height:2px;background:#111;"></div><div style="left:1704px;top:936px;width:4.5px;height:2px;background:#111;"></div><div style="left:1704px;top:937px;width:8.5px;height:1px;background:#222;"></div><div style="left:1704px;top:940px;width:4.5px;height:2px;background:#111;"></div><div style="left:1704px;top:944px;width:4.5px;height:2px;background:#111;"></div><div style="left:1704px;top:945px;width:8.5px;height:1px;background:#222;"></div><div style="left:1704px;top:948px;width:4.5px;height:2px;background:#111;"></div><div style="left:1704px;top:952px;width:4.5px;height:2px;background:#111;"></div><div style="left:1704px;top:953px;width:8.5px;height:1px;background:#222;"></div><div style="left:1704px;top:956px;width:4.5px;height:2px;background:#111;"></div><div style="left:1704px;top:960px;width:4.5px;height:2px;background:#111;"></div><div style="left:1704px;top:961px;width:8.5px;height:1px;background:#222;"></div><div style="left:1704px;top:964px;width:4.5px;height:2px;background:#111;"></div><div style="left:1704px;top:968px;width:4.5px;height:2px;background:#111;"></div><div style="left:1704px;top:969px;width:8.5px;height:1px;background:#222;"></div><div style="left:1704px;top:972px;width:4.5px;height:2px;background:#111;"></div><div style="left:1704px;top:976px;width:4.5px;height:2px;background:#111;"></div><div style="left:1704px;top:977px;width:8.5px;height:1px;background:#222;"></div><div style="left:1704px;top:980px;width:4.5px;height:2px;background:#111;"></div><div style="left:1704px;top:984px;width:4.5px;height:2px;background:#111;"></div><div style="left:1704px;top:985px;width:8.5px;height:1px;background:#222;"></div><div style="left:1774px;top:977px;width:1.3px;height:9px;background:#000;"></div><div style="left:1845.6px;top:977px;width:1.3px;height:9px;background:#000;"></div><div style="left:1916.3px;top:977px;width:1.3px;height:9px;background:#000;"></div><div style="left:1987px;top:967.5px;width:1.3px;height:18.5px;background:#000;"></div><div style="left:2057.6px;top:977px;width:1.3px;height:9px;background:#000;"></div><div style="left:2128.3px;top:977px;width:1.3px;height:9px;background:#000;"></div><div style="left:2199.3px;top:977px;width:1.3px;height:9px;background:#000;"></div><div style="left:1987.3px;top:919px;width:1px;height:49px;background-image:linear-gradient(180deg,#000 1.5px,transparent 1.5px);background-size:1px 3px;"></div>
<span class="ts" style="left:1676px;top:995.93px;font-size:25.6px;line-height:25.6px;transform-origin:0 0;transform:scaleX(1.06);">−0.5</span>
<span class="ts" style="left:1961px;top:995.93px;font-size:25.6px;line-height:25.6px;transform-origin:0 0;transform:scaleX(1.06);">79.5</span>
<span class="ts" style="left:2237.5px;top:995.93px;font-size:25.6px;line-height:25.6px;transform-origin:0 0;transform:scaleX(1.06);">159.5</span>
<span class="ts" style="left:2197.5px;top:1007.72px;font-size:22.3px;line-height:22.3px;">Column</span>
<div style="left:2274.5px;top:919px;width:34.5px;height:68px;background:linear-gradient(180deg,#3b0303 0,#3b0303 14%,#2a0000 14%,#2a0000 56%,#150000 56%);"></div>
<span class="ts" style="left:2313.3px;top:977.12px;font-size:22.3px;line-height:22.3px;">0</span>
<div style="left:1601px;top:1045.5px;width:795px;height:5px;background:#d8d6d3;border-top:1px solid #a8a6a3;"></div>
<!-- sec_term -->
<div style="left:2940px;top:34px;width:339.5px;height:467px;background:#edeceb;border:1px solid #a9a7a4;border-radius:6px 6px 0 0;"></div>
<div style="left:3213.5px;top:50px;width:9px;height:2.4px;background:#5e5e5e;border-radius:.5px;"></div><div style="left:3236.8px;top:43.8px;width:8.4px;height:8.4px;border:1.4px solid #5e5e5e;border-top-width:2.4px;"></div><svg style="left:3259.3px;top:43px;width:10px;height:10px" viewBox="0 0 10 10"><path d="M1.3 1.3L8.7 8.7M8.7 1.3L1.3 8.7" stroke="#5e5e5e" stroke-width="2.2" fill="none"/></svg>
<svg style="left:2969.5px;top:66.5px;width:12.6px;height:12.6px" viewBox="0 0 12 12"><path d="M3.5 2V6Q3.5 9.5 1.5 11.5 M7 1.5V11Q9.5 10 11 6.5" fill="none" stroke="#222" stroke-width="1.05" stroke-linecap="round" stroke-linejoin="round"/></svg><svg style="left:2981.9px;top:66.5px;width:12.6px;height:12.6px" viewBox="0 0 12 12"><path d="M1.5 3H9.5Q9.5 8 4 11.5 M10.7 1.6a1 1 0 1 0 .01 0" fill="none" stroke="#222" stroke-width="1.05" stroke-linecap="round" stroke-linejoin="round"/></svg>
<span class="ts" style="left:2994.5px;top:68.13px;font-size:12.6px;line-height:12.6px;color:#222;">(H)</span>
<div style="left:2940px;top:87px;width:323.5px;height:410px;background:#3f3f3f;"></div>
<span class="tm" style="left:2966px;top:108.08px;font-size:13.33px;line-height:13.33px;color:#e9e9e3;">his=0x2cef970) at /usr/local/ROOT/roo</span>
<span class="tm" style="left:2966px;top:125.08px;font-size:13.33px;line-height:13.33px;color:#e9e9e3;">145</span>
<span class="tm" style="left:2966px;top:142.08px;font-size:13.33px;line-height:13.33px;color:#e9e9e3;">r (this=this</span>
<span class="tm" style="left:2966px;top:159.08px;font-size:13.33px;line-height:13.33px;color:#e9e9e3;">T/root_v6.10.02.source/core/base/src/</span>
<span class="tm" style="left:2966px;top:193.08px;font-size:13.33px;line-height:13.33px;color:#e9e9e3;">atchTimers (this=this</span>
<span class="tm" style="left:2966px;top:227.08px;font-size:13.33px;line-height:13.33px;color:#e9e9e3;">2.source/core/unix/src/TUnixSystem.cx</span>
<span class="tm" style="left:2966px;top:261.08px;font-size:13.33px;line-height:13.33px;color:#e9e9e3;">atchOneEvent (this=0x1204900, pending</span>
<span class="tm" style="left:2966px;top:278.08px;font-size:13.33px;line-height:13.33px;color:#e9e9e3;">ot_v6.10.02.source/core/unix/src/TUni</span>
<span class="tm" style="left:2966px;top:312.08px;font-size:13.33px;line-height:13.33px;color:#e9e9e3;">p (this=0x1204900) at /usr/local/ROOT</span>
<span class="tm" style="left:2966px;top:329.08px;font-size:13.33px;line-height:13.33px;color:#e9e9e3;">.cxx:410</span>
<span class="tm" style="left:2966px;top:346.08px;font-size:13.33px;line-height:13.33px;color:#e9e9e3;">s=0x1204900) at /usr/local/ROOT/root_</span>
<span class="tm" style="left:2966px;top:363.08px;font-size:13.33px;line-height:13.33px;color:#e9e9e3;">50</span>
<span class="tm" style="left:2966px;top:380.08px;font-size:13.33px;line-height:13.33px;color:#e9e9e3;"> (this=0x7ffff8740780, retrn=&lt;optimiz</span>
<span class="tm" style="left:2966px;top:397.08px;font-size:13.33px;line-height:13.33px;color:#e9e9e3;">ource/core/base/src/TApplication.cxx:</span>
<span class="tm" style="left:2966px;top:448.08px;font-size:13.33px;line-height:13.33px;color:#e9e9e3;">================</span>
<div style="left:3263.5px;top:87px;width:14.5px;height:410px;background:#d6d4d1;border-left:1px solid #b9b7b3;border-right:1px solid #c6c4c0;"></div>
<div style="left:3263.5px;top:87px;width:14.5px;height:15px;background:#f6f5f4;border:1px solid #9e9c98;border-radius:3px;"></div>
<svg style="left:3266.5px;top:91.5px;width:9px;height:6px" viewBox="0 0 9 6"><path d="M1 5L4.5 1.3L8 5" stroke="#333" stroke-width="1.3" fill="none"/></svg>
<div style="left:3263.5px;top:451px;width:14.5px;height:30px;background:linear-gradient(90deg,#9dbfee,#7ea6e0);border:1px solid #5a82c0;border-radius:3px;"></div>
<div style="left:3268px;top:463.5px;width:6px;height:1px;background:#4a6ea8;"></div>
<div style="left:3268px;top:466px;width:6px;height:1px;background:#4a6ea8;"></div>
<div style="left:3268px;top:468.5px;width:6px;height:1px;background:#4a6ea8;"></div>
<div style="left:3263.5px;top:481.5px;width:14.5px;height:15.5px;background:#f6f5f4;border:1px solid #9e9c98;border-radius:3px;"></div>
<svg style="left:3266.5px;top:486.5px;width:9px;height:6px" viewBox="0 0 9 6"><path d="M1 1L4.5 4.7L8 1" stroke="#333" stroke-width="1.3" fill="none"/></svg>
<div style="left:3278px;top:87px;width:2px;height:412px;background:#edeceb;"></div>
<div style="left:2940px;top:497px;width:340px;height:4px;background:#edeceb;border-bottom:1px solid #a9a7a4;"></div>
<!-- sec_daq -->
<div style="left:1675.3px;top:29px;width:1293.5px;height:890.8px;background:#efebe7;border:1px solid #a39f9a;border-top-color:#8c8985;border-radius:6px 6px 0 0;"></div>
<div style="left:1676.3px;top:30px;width:1291.5px;height:26px;background:linear-gradient(180deg,#f0efed,#ecebe9);border-radius:5px 5px 0 0;"></div>
<div style="left:1682px;top:35px;width:16px;height:16px;background:#0a0aee;"></div>
<span class="ts" style="left:1683.4px;top:36.67px;font-size:6.3px;line-height:6.3px;color:#c4c4ff;">Pixel</span>
<span class="ts" style="left:1683.3px;top:43.46px;font-size:6.9px;line-height:6.9px;color:#ffffff;">DAQ</span>
<span class="ts" style="left:2012.3px;top:37.03px;font-size:13.2px;line-height:13.2px;color:#7b7b7b;font-weight:700;transform-origin:0 0;transform:scaleX(1.212);-webkit-text-stroke:.3px #7b7b7b;">Pixel Test DAQ Control; current configuration: KEK114-small-0301.cfg.root*</span>
<div style="left:2902.8px;top:45px;width:9px;height:2.4px;background:#5e5e5e;border-radius:.5px;"></div><div style="left:2926px;top:38.8px;width:8.4px;height:8.4px;border:1.4px solid #5e5e5e;border-top-width:2.4px;"></div><svg style="left:2948.2px;top:38px;width:10px;height:10px" viewBox="0 0 10 10"><path d="M1.3 1.3L8.7 8.7M8.7 1.3L1.3 8.7" stroke="#5e5e5e" stroke-width="2.2" fill="none"/></svg>
<span class="tm" style="left:1687px;top:60.92px;font-size:12.5px;line-height:12.5px;transform:scaleX(0.8);"><u>F</u>ile</span>
<span class="tm" style="left:1725px;top:60.92px;font-size:12.5px;line-height:12.5px;transform:scaleX(0.8);"><u>E</u>dit</span>
<span class="tm" style="left:1763px;top:60.92px;font-size:12.5px;line-height:12.5px;transform:scaleX(0.8);"><u>L</u>eft Panel</span>
<span class="tm" style="left:1837px;top:60.92px;font-size:12.5px;line-height:12.5px;transform:scaleX(0.8);"><u>R</u>ight Panel</span>
<span class="tm" style="left:1916.6px;top:60.92px;font-size:12.5px;line-height:12.5px;transform:scaleX(0.8);">Options</span>
<span class="tm" style="left:1973px;top:60.92px;font-size:12.5px;line-height:12.5px;transform:scaleX(0.8);"><u>H</u>elp</span>
<div style="left:1676.3px;top:75px;width:1291.5px;height:1px;background:#d4d0cb;"></div>
<span class="tm" style="left:1893px;top:108.82px;font-size:14.58px;line-height:14.58px;font-weight:700;transform:scaleX(0.8);">read-out configuration</span>
<div style="left:1726.5px;top:171px;width:507.5px;height:312px;background:#fff;border:1px solid #b3afaa;"></div>
<div style="left:1727.5px;top:172px;width:505.5px;height:18.5px;background:linear-gradient(180deg,#fcfbfa 0,#f3f1ee 60%,#e9e6e2 100%);border-bottom:1px solid #b5b1ac;overflow:hidden;"><div style="left:177.5px;top:2px;width:1px;height:14.5px;background:#cbc7c2;"></div><div style="left:277.8px;top:2px;width:1px;height:14.5px;background:#cbc7c2;"></div><div style="left:377.8px;top:2px;width:1px;height:14.5px;background:#cbc7c2;"></div></div><span class="tm" style="left:1730px;top:176.32px;font-size:12.5px;line-height:12.5px;transform:scaleX(0.8);">Item name</span><span class="tm" style="left:1908.5px;top:176.32px;font-size:12.5px;line-height:12.5px;transform:scaleX(0.8);">Status</span><span class="tm" style="left:2008.8px;top:176.32px;font-size:12.5px;line-height:12.5px;transform:scaleX(0.8);">Enabled?</span><span class="tm" style="left:2108.8px;top:176.32px;font-size:12.5px;line-height:12.5px;transform:scaleX(0.8);">Index</span>
<span class="tm" style="left:1750.7px;top:194.42px;font-size:12.5px;line-height:12.5px;transform:scaleX(0.8);">localhost</span>
<span class="tm" style="left:1910px;top:194.42px;font-size:12.5px;line-height:12.5px;transform:scaleX(0.8);">USB OK</span>
<svg style="left:1732px;top:195.8px;width:9px;height:6px" viewBox="0 0 9 6"><path d="M0 0H9L4.5 6Z" fill="#3c3c3c"/></svg>
<span class="tm" style="left:1770px;top:209.32px;font-size:12.5px;line-height:12.5px;transform:scaleX(0.8);">USB-board</span>
<span class="tm" style="left:2110px;top:209.32px;font-size:12.5px;line-height:12.5px;transform:scaleX(0.8);">0</span>
<svg style="left:1752.5px;top:210.7px;width:9px;height:6px" viewBox="0 0 9 6"><path d="M0 0H9L4.5 6Z" fill="#3c3c3c"/></svg>
<span class="tm" style="left:1790.2px;top:224.22px;font-size:12.5px;line-height:12.5px;transform:scaleX(0.8);">USB-controller</span>
<span class="tm" style="left:1910px;top:224.22px;font-size:12.5px;line-height:12.5px;transform:scaleX(0.8);">scanning</span>
<span class="tm" style="left:1790.2px;top:239.12px;font-size:12.5px;line-height:12.5px;transform:scaleX(0.8);">KEK114</span>
<span class="tm" style="left:1910px;top:239.12px;font-size:12.5px;line-height:12.5px;transform:scaleX(0.8);">untested</span>
<span class="tm" style="left:2010px;top:239.12px;font-size:12.5px;line-height:12.5px;transform:scaleX(0.8);">enabled</span>
<span class="tm" style="left:2110px;top:239.12px;font-size:12.5px;line-height:12.5px;transform:scaleX(0.8);">0</span>
<div style="left:1727.5px;top:468px;width:505.5px;height:14px;background:#dddbd8;border-top:1px solid #bab6b1;"></div><div style="left:1742.5px;top:469px;width:-1.5px;height:13px;background:#dddbd8;"></div><div style="left:1741px;top:469px;width:431px;height:13px;background:linear-gradient(180deg,#ffffff,#efedea);border-left:1px solid #bab6b1;border-right:1px solid #bab6b1;"></div><div style="left:1727.5px;top:469px;width:15px;height:13px;background:linear-gradient(180deg,#fdfcfb,#efedea);border-right:1px solid #bab6b1;"></div><div style="left:2218px;top:469px;width:15px;height:13px;background:linear-gradient(180deg,#fdfcfb,#efedea);border-left:1px solid #bab6b1;"></div><svg style="left:1732px;top:471.8px;width:5px;height:8px" viewBox="0 0 5 8"><path d="M5 0V8L0 4Z" fill="#3c3c3c"/></svg><svg style="left:2223.5px;top:471.8px;width:5px;height:8px" viewBox="0 0 5 8"><path d="M0 0V8L5 4Z" fill="#3c3c3c"/></svg>
<div style="left:1963px;top:495px;width:16px;height:1px;background-image:linear-gradient(90deg,#c9c5c0 1px,transparent 1px);background-size:2.6px 1px;"></div>
<div style="left:2256px;top:489px;width:1px;height:17px;background-image:linear-gradient(180deg,#c9c5c0 1px,transparent 1px);background-size:1px 2.6px;"></div>
<div style="left:1677px;top:489px;width:1px;height:17px;background-image:linear-gradient(180deg,#c9c5c0 1px,transparent 1px);background-size:1px 2.6px;"></div>
<span class="tm" style="left:1885.5px;top:512.62px;font-size:14.58px;line-height:14.58px;font-weight:700;transform:scaleX(0.8);">monitoring configuration</span>
<div style="left:1706px;top:535px;width:80px;height:23px;background:linear-gradient(180deg,#fdfcfb 0,#f4f2ef 50%,#ebe8e4 100%);border:1px solid #aaa59f;border-radius:3px;box-shadow:inset 0 0 0 1px rgba(255,255,255,.7);"></div><span class="tm" style="left:1728px;top:542.02px;font-size:12.5px;line-height:12.5px;transform:scaleX(0.8);">All ON</span>
<div style="left:1918px;top:535px;width:80px;height:23px;background:linear-gradient(180deg,#fdfcfb 0,#f4f2ef 50%,#ebe8e4 100%);border:1px solid #aaa59f;border-radius:3px;box-shadow:inset 0 0 0 1px rgba(255,255,255,.7);"></div><span class="tm" style="left:1937px;top:542.02px;font-size:12.5px;line-height:12.5px;transform:scaleX(0.8);">All OFF</span>
<div style="left:2130px;top:535px;width:104px;height:23px;background:linear-gradient(180deg,#fdfcfb 0,#f4f2ef 50%,#ebe8e4 100%);border:1px solid #aaa59f;border-radius:3px;box-shadow:inset 0 0 0 1px rgba(255,255,255,.7);"></div><span class="tm" style="left:2134px;top:542.02px;font-size:12.5px;line-height:12.5px;transform:scaleX(0.8);">Refresh readings</span>
<div style="left:1706px;top:567.5px;width:13.5px;height:13.5px;background:#fff;border:1px solid #9b968f;border-radius:1.5px;"></div><svg style="left:1708px;top:569.5px;width:10px;height:10px" viewBox="0 0 10 10"><path d="M1.2 5.2L3.8 8.2L8.6 1.2" stroke="#000" stroke-width="1.9" fill="none"/></svg>
<div style="left:1725.7px;top:565px;width:147px;height:18px;overflow:hidden;"><span class="tm" style="left:0px;top:4.72px;font-size:12.5px;line-height:12.5px;transform:scaleX(0.8);">turn off in reverse order</span></div>
<div style="left:1909px;top:567.5px;width:13.5px;height:13.5px;background:#fff;border:1px solid #9b968f;border-radius:1.5px;"></div><svg style="left:1911px;top:569.5px;width:10px;height:10px" viewBox="0 0 10 10"><path d="M1.2 5.2L3.8 8.2L8.6 1.2" stroke="#000" stroke-width="1.9" fill="none"/></svg>
<span class="tm" style="left:1928.2px;top:569.72px;font-size:12.5px;line-height:12.5px;transform:scaleX(0.8);">no update during scan</span>
<div style="left:2066px;top:567.5px;width:13.5px;height:13.5px;background:#fff;border:1px solid #9b968f;border-radius:1.5px;"></div>
<div style="left:2085.2px;top:565px;width:148px;height:18px;overflow:hidden;"><span class="tm" style="left:0px;top:4.72px;font-size:12.5px;line-height:12.5px;transform:scaleX(0.8);">continuously refresh status</span></div>
<div style="left:1792.3px;top:591px;width:441.7px;height:295.5px;background:#fff;border:1px solid #b3afaa;"></div>
<div style="left:1793.3px;top:592px;width:439.7px;height:19px;overflow:hidden;"><div style="left:0px;top:0px;width:460px;height:19px;background:linear-gradient(180deg,#fcfbfa 0,#f3f1ee 60%,#e9e6e2 100%);border-bottom:1px solid #b5b1ac;overflow:hidden;"><div style="left:178.1px;top:2px;width:1px;height:15px;background:#cbc7c2;"></div><div style="left:237.9px;top:2px;width:1px;height:15px;background:#cbc7c2;"></div><div style="left:307.8px;top:2px;width:1px;height:15px;background:#cbc7c2;"></div><div style="left:407.8px;top:2px;width:1px;height:15px;background:#cbc7c2;"></div></div><span class="tm" style="left:2.5px;top:4.82px;font-size:12.5px;line-height:12.5px;transform:scaleX(0.8);">Item name</span><span class="tm" style="left:181.6px;top:4.82px;font-size:12.5px;line-height:12.5px;transform:scaleX(0.8);">Status</span><span class="tm" style="left:241.4px;top:4.82px;font-size:12.5px;line-height:12.5px;transform:scaleX(0.8);">Enabled?</span><span class="tm" style="left:311.3px;top:4.82px;font-size:12.5px;line-height:12.5px;transform:scaleX(0.8);">Voltage (V)</span><span class="tm" style="left:411.3px;top:4.82px;font-size:12.5px;line-height:12.5px;transform:scaleX(0.8);">Current (A)</span></div>
<div style="left:1793.3px;top:611px;width:439.7px;height:260px;overflow:hidden;"><span class="tm" style="left:23.4px;top:2.72px;font-size:12.5px;line-height:12.5px;transform:scaleX(0.8);">localhost</span><span class="tm" style="left:182.4px;top:2.72px;font-size:12.5px;line-height:12.5px;transform:scaleX(0.8);">DCS</span><svg style="left:5.2px;top:4.1px;width:9px;height:6px" viewBox="0 0 9 6"><path d="M0 0H9L4.5 6Z" fill="#3c3c3c"/></svg><span class="tm" style="left:43px;top:17.72px;font-size:12.5px;line-height:12.5px;transform:scaleX(0.8);">USB-regulators</span><span class="tm" style="left:182.4px;top:17.72px;font-size:12.5px;line-height:12.5px;transform:scaleX(0.8);">OK</span><span class="tm" style="left:242.2px;top:17.72px;font-size:12.5px;line-height:12.5px;transform:scaleX(0.8);">ALL ON</span><svg style="left:25.2px;top:19.1px;width:9px;height:6px" viewBox="0 0 9 6"><path d="M0 0H9L4.5 6Z" fill="#3c3c3c"/></svg><span class="tm" style="left:62.8px;top:32.72px;font-size:12.5px;line-height:12.5px;transform:scaleX(0.8);">CH1</span><span class="tm" style="left:182.4px;top:32.72px;font-size:12.5px;line-height:12.5px;transform:scaleX(0.8);">OK</span><span class="tm" style="left:242.2px;top:32.72px;font-size:12.5px;line-height:12.5px;transform:scaleX(0.8);">ON</span><span class="tm" style="left:312.8px;top:32.72px;font-size:12.5px;line-height:12.5px;transform:scaleX(0.8);">1.9361</span><span class="tm" style="left:412.8px;top:32.72px;font-size:12.5px;line-height:12.5px;transform:scaleX(0.8);">0.0011</span><span class="tm" style="left:62.8px;top:47.72px;font-size:12.5px;line-height:12.5px;transform:scaleX(0.8);">CH2</span><span class="tm" style="left:182.4px;top:47.72px;font-size:12.5px;line-height:12.5px;transform:scaleX(0.8);">OK</span><span class="tm" style="left:242.2px;top:47.72px;font-size:12.5px;line-height:12.5px;transform:scaleX(0.8);">ON</span><span class="tm" style="left:312.8px;top:47.72px;font-size:12.5px;line-height:12.5px;transform:scaleX(0.8);">1.9366</span><span class="tm" style="left:412.8px;top:47.72px;font-size:12.5px;line-height:12.5px;transform:scaleX(0.8);">-0.0006</span><span class="tm" style="left:62.8px;top:62.72px;font-size:12.5px;line-height:12.5px;transform:scaleX(0.8);">CH3</span><span class="tm" style="left:182.4px;top:62.72px;font-size:12.5px;line-height:12.5px;transform:scaleX(0.8);">OK</span><span class="tm" style="left:242.2px;top:62.72px;font-size:12.5px;line-height:12.5px;transform:scaleX(0.8);">ON</span><span class="tm" style="left:312.8px;top:62.72px;font-size:12.5px;line-height:12.5px;transform:scaleX(0.8);">1.9367</span><span class="tm" style="left:412.8px;top:62.72px;font-size:12.5px;line-height:12.5px;transform:scaleX(0.8);">-0.0006</span><span class="tm" style="left:62.8px;top:77.72px;font-size:12.5px;line-height:12.5px;transform:scaleX(0.8);">CH4</span><span class="tm" style="left:182.4px;top:77.72px;font-size:12.5px;line-height:12.5px;transform:scaleX(0.8);">OK</span><span class="tm" style="left:242.2px;top:77.72px;font-size:12.5px;line-height:12.5px;transform:scaleX(0.8);">ON</span><span class="tm" style="left:312.8px;top:77.72px;font-size:12.5px;line-height:12.5px;transform:scaleX(0.8);">1.9367</span><span class="tm" style="left:412.8px;top:77.72px;font-size:12.5px;line-height:12.5px;transform:scaleX(0.8);">0.0006</span></div>
<div style="left:1793.3px;top:872px;width:439.7px;height:14px;background:#dddbd8;border-top:1px solid #bab6b1;"></div><div style="left:1808.3px;top:873px;width:-1.8px;height:13px;background:#dddbd8;"></div><div style="left:1806.5px;top:873px;width:224px;height:13px;background:linear-gradient(180deg,#ffffff,#efedea);border-left:1px solid #bab6b1;border-right:1px solid #bab6b1;"></div><div style="left:1793.3px;top:873px;width:15px;height:13px;background:linear-gradient(180deg,#fdfcfb,#efedea);border-right:1px solid #bab6b1;"></div><div style="left:2218px;top:873px;width:15px;height:13px;background:linear-gradient(180deg,#fdfcfb,#efedea);border-left:1px solid #bab6b1;"></div><svg style="left:1797.8px;top:875.8px;width:5px;height:8px" viewBox="0 0 5 8"><path d="M5 0V8L0 4Z" fill="#3c3c3c"/></svg><svg style="left:2223.5px;top:875.8px;width:5px;height:8px" viewBox="0 0 5 8"><path d="M0 0V8L5 4Z" fill="#3c3c3c"/></svg>
<div style="left:1706px;top:712.2px;width:80px;height:23px;background:linear-gradient(180deg,#f9f8f6,#efedea);border:1px solid #c4c0bb;border-radius:3px;box-shadow:inset 0 0 0 1px rgba(255,255,255,.7);"></div>
<svg style="left:1716px;top:716.7px;width:14px;height:14px" viewBox="0 0 12 12"><circle cx="6" cy="6" r="5.6" fill="#bdb9b5" stroke="#a6a29d" stroke-width=".6"/><path d="M3.2 6.2L6 3.2L8.8 6.2M6 3.4V9.3" stroke="#fff" stroke-width="1.7" fill="none"/></svg>
<span class="tm" style="left:1731.5px;top:719.52px;font-size:12.5px;line-height:12.5px;color:#b9b5b0;transform:scaleX(0.8);">Up</span>
<div style="left:1706px;top:742.2px;width:80px;height:23px;background:linear-gradient(180deg,#f9f8f6,#efedea);border:1px solid #c4c0bb;border-radius:3px;box-shadow:inset 0 0 0 1px rgba(255,255,255,.7);"></div>
<svg style="left:1725px;top:746.7px;width:14px;height:14px" viewBox="0 0 12 12"><circle cx="6" cy="6" r="5.6" fill="#bdb9b5" stroke="#a6a29d" stroke-width=".6"/><path d="M3.2 5.8L6 8.8L8.8 5.8M6 8.6V2.7" stroke="#fff" stroke-width="1.7" fill="none"/></svg>
<span class="tm" style="left:1740.5px;top:749.52px;font-size:12.5px;line-height:12.5px;color:#b9b5b0;transform:scaleX(0.8);">Down</span>
<span class="tm" style="left:2562.2px;top:96.62px;font-size:14.58px;line-height:14.58px;font-weight:700;transform:scaleX(0.8);">PixScan Panel</span>
<div style="left:2269.5px;top:140px;width:677.5px;height:754.5px;background:#fbf8f5;border:1px solid #b4b0ab;"></div>
<div style="left:2365.4px;top:117.3px;width:90.7px;height:23px;background:linear-gradient(180deg,#f3f0ed,#e9e5e1);border:1px solid #b4b0ab;border-radius:3px 3px 0 0;"></div>
<span class="tm" style="left:2377.75px;top:125.42px;font-size:12.5px;line-height:12.5px;transform:scaleX(0.8);">Basic Par's</span>
<div style="left:2455.1px;top:117.3px;width:79px;height:23px;background:linear-gradient(180deg,#f3f0ed,#e9e5e1);border:1px solid #b4b0ab;border-radius:3px 3px 0 0;"></div>
<span class="tm" style="left:2467.6px;top:125.42px;font-size:12.5px;line-height:12.5px;transform:scaleX(0.8);">Scan Pars</span>
<div style="left:2533.1px;top:117.3px;width:61.3px;height:23px;background:linear-gradient(180deg,#f3f0ed,#e9e5e1);border:1px solid #b4b0ab;border-radius:3px 3px 0 0;"></div>
<span class="tm" style="left:2545.75px;top:125.42px;font-size:12.5px;line-height:12.5px;transform:scaleX(0.8);">Histos</span>
<div style="left:2593.4px;top:117.3px;width:90.7px;height:23px;background:linear-gradient(180deg,#f3f0ed,#e9e5e1);border:1px solid #b4b0ab;border-radius:3px 3px 0 0;"></div>
<span class="tm" style="left:2605.75px;top:125.42px;font-size:12.5px;line-height:12.5px;transform:scaleX(0.8);">DCS Control</span>
<div style="left:2683.1px;top:117.3px;width:115.1px;height:23px;background:linear-gradient(180deg,#f3f0ed,#e9e5e1);border:1px solid #b4b0ab;border-radius:3px 3px 0 0;"></div>
<span class="tm" style="left:2695.65px;top:125.42px;font-size:12.5px;line-height:12.5px;transform:scaleX(0.8);">Expert Settings</span>
<div style="left:2797.2px;top:117.3px;width:54px;height:23px;background:linear-gradient(180deg,#f3f0ed,#e9e5e1);border:1px solid #b4b0ab;border-radius:3px 3px 0 0;"></div>
<span class="tm" style="left:2809.2px;top:125.42px;font-size:12.5px;line-height:12.5px;transform:scaleX(0.8);">Table</span>
<div style="left:2269.5px;top:115.3px;width:96.5px;height:26px;background:#fbf8f5;border:1px solid #b4b0ab;border-bottom:none;border-radius:4px 4px 0 0;"></div>
<span class="tm" style="left:2281.5px;top:124.42px;font-size:12.5px;line-height:12.5px;transform:scaleX(0.8);">Main Control</span>
<span class="tm" style="left:2282.3px;top:178.12px;font-size:12.5px;line-height:12.5px;transform:scaleX(0.8);">Configuration</span>
<div style="left:2283px;top:193.3px;width:651px;height:76px;background:#f9f6f3;border:1px solid #dad6d1;border-radius:3px;"></div>
<span class="tm" style="left:2296.1px;top:212.92px;font-size:12.5px;line-height:12.5px;transform:scaleX(0.8);">Selected std. configuration:</span>
<div style="left:2467.9px;top:210.5px;width:13.6px;height:13.6px;background:#fff;border:1px solid #8f8a84;border-radius:50%;"></div>
<span class="tm" style="left:2488.3px;top:212.92px;font-size:12.5px;line-height:12.5px;transform:scaleX(0.8);">FE-I3</span>
<div style="left:2597.9px;top:210.5px;width:13.6px;height:13.6px;background:#fff;border:1px solid #8f8a84;border-radius:50%;"></div><div style="left:2601.7px;top:214.3px;width:6px;height:6px;background:#1a1a1a;border-radius:50%;"></div>
<span class="tm" style="left:2618.2px;top:212.92px;font-size:12.5px;line-height:12.5px;transform:scaleX(0.8);">FE-I4A/B</span>
<div style="left:2728px;top:206.3px;width:192px;height:22.5px;background:linear-gradient(180deg,#fdfcfb 0,#f4f2ef 50%,#ebe8e4 100%);border:1px solid #aaa59f;border-radius:3px;box-shadow:inset 0 0 0 1px rgba(255,255,255,.7);"></div><span class="tm" style="left:2733.5px;top:213.07px;font-size:12.5px;line-height:12.5px;transform:scaleX(0.8);">DEFAULT: FE_ST_SOURCE_SCAN</span><svg style="left:2905px;top:215.55px;width:8px;height:5px" viewBox="0 0 8 5"><path d="M0 0H8L4 5Z" fill="#3a3a3a"/></svg>
<div style="left:2296px;top:233.5px;width:79.5px;height:22px;background:linear-gradient(180deg,#fdfcfb 0,#f4f2ef 50%,#ebe8e4 100%);border:1px solid #aaa59f;border-radius:3px;box-shadow:inset 0 0 0 1px rgba(255,255,255,.7);"></div><span class="tm" style="left:2305.75px;top:240.02px;font-size:12.5px;line-height:12.5px;transform:scaleX(0.8);">Create new</span>
<div style="left:2444.2px;top:233.5px;width:97.6px;height:22px;background:linear-gradient(180deg,#fdfcfb 0,#f4f2ef 50%,#ebe8e4 100%);border:1px solid #aaa59f;border-radius:3px;box-shadow:inset 0 0 0 1px rgba(255,255,255,.7);"></div><span class="tm" style="left:2448px;top:240.02px;font-size:12.5px;line-height:12.5px;transform:scaleX(0.8);">Clear user-def.</span>
<div style="left:2610px;top:233.5px;width:85.6px;height:22px;background:linear-gradient(180deg,#fdfcfb 0,#f4f2ef 50%,#ebe8e4 100%);border:1px solid #aaa59f;border-radius:3px;box-shadow:inset 0 0 0 1px rgba(255,255,255,.7);"></div><span class="tm" style="left:2613.8px;top:240.02px;font-size:12.5px;line-height:12.5px;transform:scaleX(0.8);">Load user-def</span>
<div style="left:2764.1px;top:233.5px;width:91.6px;height:22px;background:linear-gradient(180deg,#fdfcfb 0,#f4f2ef 50%,#ebe8e4 100%);border:1px solid #aaa59f;border-radius:3px;box-shadow:inset 0 0 0 1px rgba(255,255,255,.7);"></div><span class="tm" style="left:2767.9px;top:240.02px;font-size:12.5px;line-height:12.5px;transform:scaleX(0.8);">Save user-def.</span>
<span class="tm" style="left:2282.3px;top:278.12px;font-size:12.5px;line-height:12.5px;transform:scaleX(0.8);">Scan status</span>
<div style="left:2283px;top:293.3px;width:651px;height:265.2px;background:#f9f6f3;border:1px solid #dad6d1;border-radius:3px;"></div>
<span class="tm" style="left:2296.1px;top:313.12px;font-size:12.5px;line-height:12.5px;transform:scaleX(0.8);">Status for crate</span>
<div style="left:2453.2px;top:306.3px;width:152.5px;height:22.5px;background:linear-gradient(180deg,#fdfcfb 0,#f4f2ef 50%,#ebe8e4 100%);border:1px solid #aaa59f;border-radius:3px;box-shadow:inset 0 0 0 1px rgba(255,255,255,.7);"></div><span class="tm" style="left:2458.7px;top:313.07px;font-size:12.5px;line-height:12.5px;transform:scaleX(0.8);">localhost</span><svg style="left:2590.7px;top:315.55px;width:8px;height:5px" viewBox="0 0 8 5"><path d="M0 0H8L4 5Z" fill="#3a3a3a"/></svg>
<span class="tm" style="left:2610.5px;top:313.12px;font-size:12.5px;line-height:12.5px;transform:scaleX(0.8);">and group</span>
<div style="left:2767px;top:306.3px;width:153px;height:22.5px;background:linear-gradient(180deg,#fdfcfb 0,#f4f2ef 50%,#ebe8e4 100%);border:1px solid #aaa59f;border-radius:3px;box-shadow:inset 0 0 0 1px rgba(255,255,255,.7);"></div><span class="tm" style="left:2772.5px;top:313.07px;font-size:12.5px;line-height:12.5px;transform:scaleX(0.8);">USB-board</span><svg style="left:2905px;top:315.55px;width:8px;height:5px" viewBox="0 0 8 5"><path d="M0 0H8L4 5Z" fill="#3a3a3a"/></svg>
<span class="tm" style="left:2467.9px;top:339.62px;font-size:12.5px;line-height:12.5px;color:#b4b0ac;transform:scaleX(0.8);">Processed scan steps loop 2:</span>
<div style="left:2639.9px;top:332.9px;width:109.3px;height:22.8px;background:#fbf8f5;border:1px solid #1578b8;box-shadow:inset 0 0 0 1px #3aa4e0;"></div><svg style="left:2639.9px;top:332.9px;width:109.3px;height:22.8px" viewBox="0 0 109.3 22.8"><g fill="none" stroke="#1578b8" stroke-width="1.75" stroke-linecap="square" stroke-opacity=".82"><path transform="translate(92.5,3.2)" d="M0 0H6.2M6.2 0V7.9M6.2 7.9V15.8M0 15.8H6.2M0 7.9V15.8M0 0V7.9"/></g></svg>
<span class="tm" style="left:2467.9px;top:366.72px;font-size:12.5px;line-height:12.5px;color:#b4b0ac;transform:scaleX(0.8);">Processed scan steps loop 1:</span>
<div style="left:2639.9px;top:360px;width:109.3px;height:22.8px;background:#fbf8f5;border:1px solid #1578b8;box-shadow:inset 0 0 0 1px #3aa4e0;"></div><svg style="left:2639.9px;top:360px;width:109.3px;height:22.8px" viewBox="0 0 109.3 22.8"><g fill="none" stroke="#1578b8" stroke-width="1.75" stroke-linecap="square" stroke-opacity=".82"><path transform="translate(92.5,3.2)" d="M0 0H6.2M6.2 0V7.9M6.2 7.9V15.8M0 15.8H6.2M0 7.9V15.8M0 0V7.9"/></g></svg>
<span class="tm" style="left:2467.9px;top:393.82px;font-size:12.5px;line-height:12.5px;color:#b4b0ac;transform:scaleX(0.8);">Processed scan steps loop 0:</span>
<div style="left:2639.9px;top:387.1px;width:109.3px;height:22.8px;background:#fbf8f5;border:1px solid #1578b8;box-shadow:inset 0 0 0 1px #3aa4e0;"></div><svg style="left:2639.9px;top:387.1px;width:109.3px;height:22.8px" viewBox="0 0 109.3 22.8"><g fill="none" stroke="#1578b8" stroke-width="1.75" stroke-linecap="square" stroke-opacity=".82"><path transform="translate(92.5,3.2)" d="M0 0H6.2M6.2 0V7.9M6.2 7.9V15.8M0 15.8H6.2M0 7.9V15.8M0 0V7.9"/></g></svg>
<span class="tm" style="left:2467.9px;top:420.92px;font-size:12.5px;line-height:12.5px;transform:scaleX(0.8);">Processed Events:</span>
<div style="left:2639.9px;top:414.2px;width:109.3px;height:22.8px;background:#fbf8f5;border:1px solid #1a1ac8;box-shadow:inset 0 0 0 1px #5050f0;"></div><svg style="left:2639.9px;top:414.2px;width:109.3px;height:22.8px" viewBox="0 0 109.3 22.8"><g fill="none" stroke="#1a1ac8" stroke-width="1.75" stroke-linecap="square" stroke-opacity=".82"><path transform="translate(48,3.2)" d="M0 0H6.2M6.2 0V7.9M6.2 7.9V15.8M0 15.8H6.2M0 7.9V15.8M0 0V7.9M0 7.9H6.2"/><path transform="translate(56.9,3.2)" d="M0 0H6.2M6.2 0V7.9M0 7.9H6.2M6.2 7.9V15.8M0 15.8H6.2"/><path transform="translate(65.8,3.2)" d="M0 0H6.2M0 0V7.9M0 7.9H6.2M0 7.9V15.8M0 15.8H6.2M6.2 7.9V15.8"/><path transform="translate(74.7,3.2)" d="M0 0H6.2M6.2 0V7.9M6.2 7.9V15.8"/><path transform="translate(83.6,3.2)" d="M0 0H6.2M6.2 0V7.9M0 7.9H6.2M0 7.9V15.8M0 15.8H6.2"/><path transform="translate(92.5,3.2)" d="M0 0H6.2M6.2 0V7.9M6.2 7.9V15.8M0 15.8H6.2M0 0V7.9M0 7.9H6.2"/></g></svg>
<span class="tm" style="left:2467.9px;top:448.02px;font-size:12.5px;line-height:12.5px;transform:scaleX(0.8);">Used memory (%):</span>
<div style="left:2639.9px;top:441.3px;width:109.3px;height:22.8px;background:#fbf8f5;border:1px solid #1a1ac8;box-shadow:inset 0 0 0 1px #5050f0;"></div><svg style="left:2639.9px;top:441.3px;width:109.3px;height:22.8px" viewBox="0 0 109.3 22.8"><g fill="none" stroke="#1a1ac8" stroke-width="1.75" stroke-linecap="square" stroke-opacity=".82"><path transform="translate(83.6,3.2)" d="M0 0H6.2M0 0V7.9M0 7.9H6.2M0 7.9V15.8M0 15.8H6.2M6.2 7.9V15.8"/><path transform="translate(92.5,3.2)" d="M0 0H6.2M0 0V7.9M0 7.9H6.2M6.2 7.9V15.8M0 15.8H6.2"/></g></svg>
<span class="tm" style="left:2467.9px;top:475.12px;font-size:12.5px;line-height:12.5px;transform:scaleX(0.8);">Event rate (Hz):</span>
<div style="left:2639.9px;top:468.4px;width:109.3px;height:22.8px;background:#fbf8f5;border:1px solid #1a1ac8;box-shadow:inset 0 0 0 1px #5050f0;"></div><svg style="left:2639.9px;top:468.4px;width:109.3px;height:22.8px" viewBox="0 0 109.3 22.8"><g fill="none" stroke="#1a1ac8" stroke-width="1.75" stroke-linecap="square" stroke-opacity=".82"><path transform="translate(92.5,3.2)" d="M0 0H6.2M6.2 0V7.9M6.2 7.9V15.8M0 15.8H6.2M0 7.9V15.8M0 0V7.9"/></g></svg>
<span class="tm" style="left:2467.9px;top:502.22px;font-size:12.5px;line-height:12.5px;transform:scaleX(0.8);">Trigger rate (Hz):</span>
<div style="left:2639.9px;top:495.5px;width:109.3px;height:22.8px;background:#fbf8f5;border:1px solid #1a1ac8;box-shadow:inset 0 0 0 1px #5050f0;"></div><svg style="left:2639.9px;top:495.5px;width:109.3px;height:22.8px" viewBox="0 0 109.3 22.8"><g fill="none" stroke="#1a1ac8" stroke-width="1.75" stroke-linecap="square" stroke-opacity=".82"><path transform="translate(92.5,3.2)" d="M0 0H6.2M6.2 0V7.9M6.2 7.9V15.8M0 15.8H6.2M0 7.9V15.8M0 0V7.9"/></g></svg>
<span class="tm" style="left:2467.9px;top:528.72px;font-size:12.5px;line-height:12.5px;transform:scaleX(0.8);">Status:</span>
<div style="left:2639.9px;top:522.6px;width:109.3px;height:22.3px;background:#fff;border:1px solid #aaa59f;border-radius:3px;"></div>
<span class="tm" style="left:2670.5px;top:528.92px;font-size:12.5px;line-height:12.5px;transform:scaleX(0.8);">scanning</span>
<div style="left:2558px;top:584.2px;width:100.2px;height:39.8px;background:linear-gradient(180deg,#ff9393 0,#fa7272 50%,#f65c5c 100%);border:1px solid #cf3b3b;border-radius:3px;box-shadow:inset 0 0 0 1px rgba(255,180,180,.6);"></div>
<span class="tm" style="left:2595.14px;top:598.58px;font-size:13.6px;line-height:13.6px;font-weight:700;transform:scaleX(0.8);">Stop</span>
<span class="tm" style="left:2282.3px;top:684.12px;font-size:12.5px;line-height:12.5px;transform:scaleX(0.8);">Output</span>
<div style="left:2283px;top:699.4px;width:651px;height:180px;background:#f9f6f3;border:1px solid #dad6d1;border-radius:3px;"></div>
<span class="tm" style="left:2296.1px;top:719.12px;font-size:12.5px;line-height:12.5px;transform:scaleX(0.8);">Scan label</span>
<div style="left:2360px;top:712.3px;width:560px;height:22.4px;background:#efedea;border:1px solid #b9b5b0;border-radius:3px;box-shadow:inset 0 1px 1px rgba(0,0,0,.06);"></div>
<span class="tm" style="left:2579px;top:719.12px;font-size:12.5px;line-height:12.5px;color:#b4b0ac;transform:scaleX(0.8);">FE_ST_SOURCE_SCAN 85</span>
<div style="left:2296px;top:742.3px;width:13.5px;height:13.5px;background:#f3f1ee;border:1px solid #bcb8b3;border-radius:1.5px;"></div><svg style="left:2298px;top:744.3px;width:10px;height:10px" viewBox="0 0 10 10"><path d="M1.2 5.2L3.8 8.2L8.6 1.2" stroke="#a8a4a0" stroke-width="1.9" fill="none"/></svg>
<span class="tm" style="left:2315.7px;top:745.02px;font-size:12.5px;line-height:12.5px;color:#b4b0ac;transform:scaleX(0.8);">save histograms to file:</span>
<div style="left:2296px;top:764.2px;width:539.5px;height:22.4px;background:#efedea;border:1px solid #b9b5b0;border-radius:3px;box-shadow:inset 0 1px 1px rgba(0,0,0,.06);"></div>
<span class="tm" style="left:2299.5px;top:771.12px;font-size:12.5px;line-height:12.5px;color:#b4b0ac;transform:scaleX(0.8);">/home/atlasj/work/usbpix/KEK114/KEK114mask5.root</span>
<div style="left:2840.2px;top:764.2px;width:79.6px;height:22.4px;background:linear-gradient(180deg,#f9f8f6,#efedea);border:1px solid #c4c0bb;border-radius:3px;box-shadow:inset 0 0 0 1px rgba(255,255,255,.7);"></div><span class="tm" style="left:2862px;top:770.92px;font-size:12.5px;line-height:12.5px;color:#b4b0ac;transform:scaleX(0.8);">Browse</span>
<span class="tm" style="left:2296.1px;top:796.72px;font-size:12.5px;line-height:12.5px;transform:scaleX(0.8);">Save raw data (source scan mode) to:</span>
<div style="left:2607px;top:794px;width:13.5px;height:13.5px;background:#f3f1ee;border:1px solid #bcb8b3;border-radius:1.5px;"></div><svg style="left:2609px;top:796px;width:10px;height:10px" viewBox="0 0 10 10"><path d="M1.2 5.2L3.8 8.2L8.6 1.2" stroke="#a8a4a0" stroke-width="1.9" fill="none"/></svg>
<span class="tm" style="left:2626.3px;top:796.72px;font-size:12.5px;line-height:12.5px;color:#b4b0ac;transform:scaleX(0.8);">generate from histogram file name and scan label</span>
<div style="left:2296px;top:816.3px;width:539.5px;height:22.4px;background:#efedea;border:1px solid #b9b5b0;border-radius:3px;box-shadow:inset 0 1px 1px rgba(0,0,0,.06);"></div>
<span class="tm" style="left:2299.5px;top:823.22px;font-size:12.5px;line-height:12.5px;color:#b4b0ac;transform:scaleX(0.8);">/home/atlasj/work/usbpix/KEK114/KEK114mask5.raw</span>
<div style="left:2840.2px;top:816.3px;width:79.6px;height:22.4px;background:linear-gradient(180deg,#f9f8f6,#efedea);border:1px solid #c4c0bb;border-radius:3px;box-shadow:inset 0 0 0 1px rgba(255,255,255,.7);"></div><span class="tm" style="left:2862px;top:823.02px;font-size:12.5px;line-height:12.5px;color:#b4b0ac;transform:scaleX(0.8);">Browse</span>
<span class="tm" style="left:2296.1px;top:849.72px;font-size:12.5px;line-height:12.5px;transform:scaleX(0.8);">Read USBPixDcs devices during scan:</span>
<div style="left:2516px;top:843.4px;width:95.6px;height:22.2px;background:linear-gradient(180deg,#fdfcfb 0,#f4f2ef 50%,#ebe8e4 100%);border:1px solid #aaa59f;border-radius:3px;box-shadow:inset 0 0 0 1px rgba(255,255,255,.7);"></div><span class="tm" style="left:2521.5px;top:850.02px;font-size:12.5px;line-height:12.5px;transform:scaleX(0.8);">after start</span><svg style="left:2596.6px;top:852.5px;width:8px;height:5px" viewBox="0 0 8 5"><path d="M0 0H8L4 5Z" fill="#3a3a3a"/></svg>
</div></body></html>
